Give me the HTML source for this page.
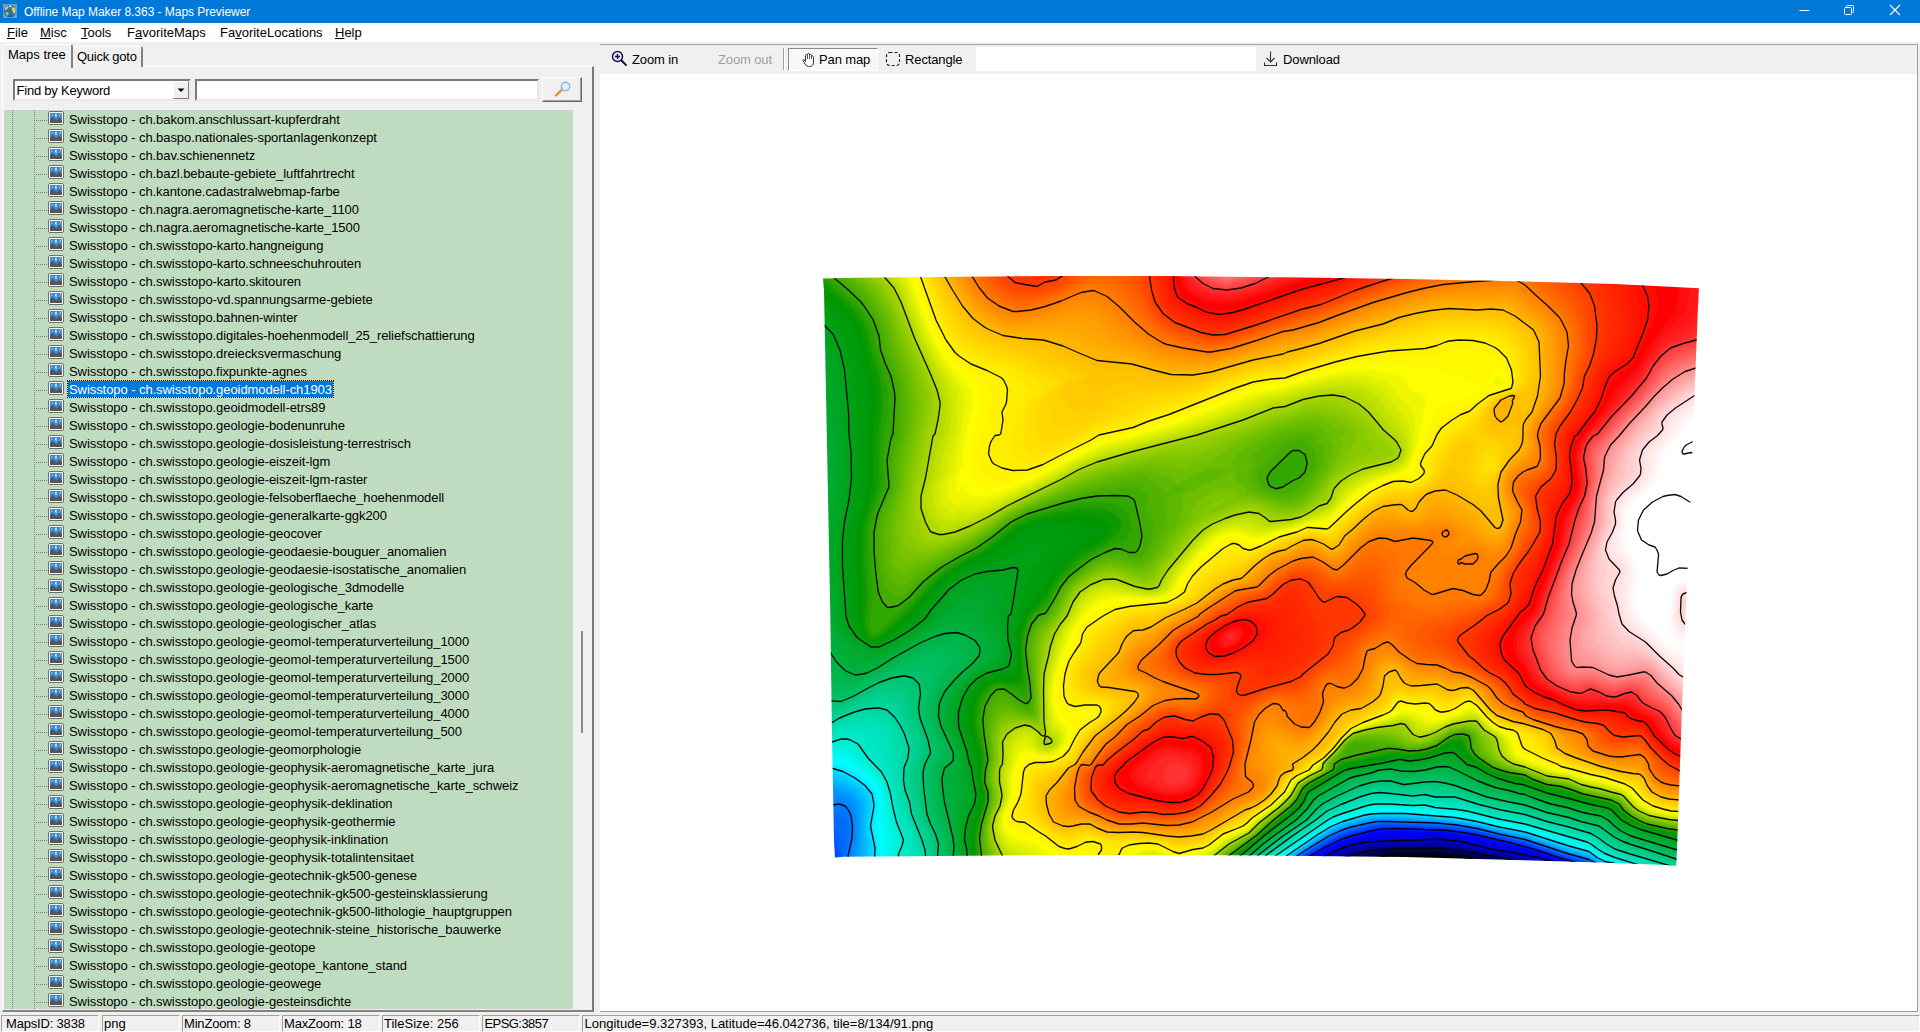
<!DOCTYPE html>
<html><head><meta charset="utf-8"><title>Offline Map Maker 8.363 - Maps Previewer</title>
<style>
*{box-sizing:border-box;margin:0;padding:0}
html,body{width:1920px;height:1032px;overflow:hidden;background:#f0f0f0}
body{font-family:"Liberation Sans",sans-serif;font-size:13px;color:#000;position:relative}
.abs{position:absolute}
#title{left:0;top:0;width:1920px;height:23px;background:#0078d7;color:#fff;font-size:12px}
#title .t{position:absolute;left:24px;top:5px;white-space:nowrap;letter-spacing:-0.04px}
#menu{left:0;top:23px;width:1920px;height:19px;background:#fff}
#menu span{position:absolute;top:2px;white-space:nowrap}
u{text-decoration:underline;text-underline-offset:1px}
#tabs span{position:absolute;white-space:nowrap}
.row{position:absolute;left:0;height:18px;width:570px;white-space:nowrap}
.row .tx{position:absolute;left:64px;top:1px;height:16px;line-height:17px;padding:0 1px;letter-spacing:-0.07px}
.row .ic{position:absolute;left:44px;top:1px}
.row .hl{position:absolute;left:30px;top:10px;width:13px;height:0;border-top:1px dotted #808080}
#tree{left:4px;top:110px;width:569px;height:899px;background:#c0dcc0;overflow:hidden}
.vl{position:absolute;top:0;height:899px;width:0;border-left:1px dotted #808080}
.sel .tx{background:#0078d7;color:#fff;outline:1px dotted #000;box-shadow:0 0 0 1px #f3e2a8}
#status span{position:absolute;top:2px;white-space:nowrap}
.tb span{position:absolute;top:7px;white-space:nowrap;letter-spacing:-0.12px}
</style></head><body>

<svg width="0" height="0" style="position:absolute"><defs>
<symbol id="pic" viewBox="0 0 16 14"><rect x="0.5" y="0.5" width="15" height="13" rx="1.5" fill="#fff" stroke="#6e6e6e"/><rect x="2" y="2" width="12" height="10" fill="#3a8ad8"/><path d="M2 12 V8.500 L4.400 6 L8.600 9.600 L11 6.200 L14 9 V12 Z" fill="#555"/><rect x="3.5" y="3.5" width="1" height="1" fill="#dff"/><path d="M9 3 A1.400 1.400 0 1 0 9 5.600 A1.800 1.800 0 0 1 9 3Z" fill="#eff"/><rect x="12" y="2.800" width="1" height="1" fill="#dff"/><rect x="11" y="4.500" width="1" height="1" fill="#9cf"/></symbol>
</defs></svg>
<div id="title" class="abs">
<svg class="abs" style="left:3px;top:4px" width="14" height="14" viewBox="0 0 14 14"><rect width="14" height="14" fill="#58a8de"/><circle cx="7" cy="7" r="6.300" fill="#2a72b4"/><path d="M1.500 5.500 Q2 2.500 4.500 1.800 Q6 2.200 5.500 3.800 Q4 4.200 3.800 5.800 Q2.500 6.500 1.500 5.500Z" fill="#f0b848"/><path d="M8.800 3.500 Q11 2.800 12.500 4.800 Q13.200 7.500 12 9.500 Q10.500 9.800 10 8 Q8.500 7 8.800 3.500Z" fill="#f4cc50"/><path d="M3 8 Q5 7.500 5.800 9.500 Q5.500 11.500 4 11.800 Q2.500 10.500 3 8Z" fill="#c8c040"/><path d="M6 1.200 Q8 1 9 2.200 Q7.500 3.500 6.300 3 Z" fill="#cfe6f4"/><path d="M4 12 Q7 13.600 10.500 12 Q7 11 4 12Z" fill="#174f86"/></svg>
<span class="t">Offline Map Maker 8.363 - Maps Previewer</span>
<svg class="abs" style="left:1790px;top:0" width="130" height="23" viewBox="0 0 130 23" fill="none" stroke="#fff" stroke-width="1"><path d="M9.5 10.5 H19.5"/><rect x="54.500" y="7.5" width="7" height="7" rx="1"/><path d="M56.5 7.500 V6.500 Q56.500 5.500 57.500 5.500 H62.500 Q63.500 5.500 63.500 6.500 V11.500 Q63.500 12.500 62.500 12.500 H61.500"/><path d="M100 5 L110 15 M110 5 L100 15" stroke-width="1.1"/></svg>
</div>
<div id="menu" class="abs"><span style="left:7px"><u>F</u>ile</span><span style="left:40px"><u>M</u>isc</span><span style="left:81px"><u>T</u>ools</span><span style="left:127px">F<u>a</u>voriteMaps</span><span style="left:220px">Fa<u>v</u>oriteLocations</span><span style="left:335px"><u>H</u>elp</span></div>
<div id="tabs">
<div class="abs" style="left:2px;top:66px;width:592px;height:946px;border:1px solid #fff;border-right:2px solid #828282;border-bottom:2px solid #828282;border-right-color:#7a7a7a"></div>
<div class="abs" style="left:2px;top:44px;width:71px;height:24px;background:#f0f0f0;border-left:1px solid #fff;border-top:1px solid #fff;border-right:2px solid #828282;border-radius:2px 2px 0 0"></div>
<div class="abs" style="left:73px;top:46px;width:70px;height:21px;background:#f0f0f0;border-top:1px solid #fff;border-right:2px solid #828282;border-radius:2px 2px 0 0"></div>
<span style="left:8px;top:47px">Maps tree</span><span style="left:77px;top:49px;letter-spacing:-0.25px">Quick goto</span>
</div>
<div class="abs" style="left:13px;top:79px;width:178px;height:22px;background:#fff;border:2px solid;border-color:#7a7a7a #e8e8e8 #e8e8e8 #7a7a7a"><span class="abs" style="left:1.5px;top:2px;white-space:nowrap;letter-spacing:-0.22px">Find by Keyword</span>
<div class="abs" style="left:158px;top:0;width:16px;height:18px;background:#f0f0f0;border:1px solid;border-color:#fff #808080 #808080 #fff"><svg width="14" height="16" viewBox="0 0 14 16" style="position:absolute;left:0;top:0"><path d="M3.5 6.5 H10.500 L7 10 Z" fill="#000"/></svg></div></div>
<div class="abs" style="left:195px;top:79px;width:344px;height:22px;background:#fff;border:2px solid;border-color:#7a7a7a #e8e8e8 #e8e8e8 #7a7a7a"></div>
<div class="abs" style="left:542px;top:77px;width:40px;height:25px;background:#f0f0f0;border:1px solid;border-color:#fff #6a6a6a #6a6a6a #fff;box-shadow:inset -1px -1px 0 #a0a0a0"><svg width="20" height="18" viewBox="0 0 20 18" style="position:absolute;left:10px;top:3px"><path d="M3 14.500 L9 8.500" stroke="#e0903c" stroke-width="2.4" stroke-linecap="round"/><circle cx="12.5" cy="5.5" r="4.200" fill="#d8f0fa" stroke="#8cb8e0" stroke-width="1.4"/></svg></div>
<div id="tree" class="abs"><div class="vl" style="left:8px"></div><div class="vl" style="left:30px"></div>
<div class="row" style="top:0px"><div class="hl"></div><svg class="ic" width="16" height="14"><use href="#pic"/></svg><span class="tx">Swisstopo - ch.bakom.anschlussart-kupferdraht</span></div>
<div class="row" style="top:18px"><div class="hl"></div><svg class="ic" width="16" height="14"><use href="#pic"/></svg><span class="tx">Swisstopo - ch.baspo.nationales-sportanlagenkonzept</span></div>
<div class="row" style="top:36px"><div class="hl"></div><svg class="ic" width="16" height="14"><use href="#pic"/></svg><span class="tx">Swisstopo - ch.bav.schienennetz</span></div>
<div class="row" style="top:54px"><div class="hl"></div><svg class="ic" width="16" height="14"><use href="#pic"/></svg><span class="tx">Swisstopo - ch.bazl.bebaute-gebiete_luftfahrtrecht</span></div>
<div class="row" style="top:72px"><div class="hl"></div><svg class="ic" width="16" height="14"><use href="#pic"/></svg><span class="tx">Swisstopo - ch.kantone.cadastralwebmap-farbe</span></div>
<div class="row" style="top:90px"><div class="hl"></div><svg class="ic" width="16" height="14"><use href="#pic"/></svg><span class="tx">Swisstopo - ch.nagra.aeromagnetische-karte_1100</span></div>
<div class="row" style="top:108px"><div class="hl"></div><svg class="ic" width="16" height="14"><use href="#pic"/></svg><span class="tx">Swisstopo - ch.nagra.aeromagnetische-karte_1500</span></div>
<div class="row" style="top:126px"><div class="hl"></div><svg class="ic" width="16" height="14"><use href="#pic"/></svg><span class="tx">Swisstopo - ch.swisstopo-karto.hangneigung</span></div>
<div class="row" style="top:144px"><div class="hl"></div><svg class="ic" width="16" height="14"><use href="#pic"/></svg><span class="tx">Swisstopo - ch.swisstopo-karto.schneeschuhrouten</span></div>
<div class="row" style="top:162px"><div class="hl"></div><svg class="ic" width="16" height="14"><use href="#pic"/></svg><span class="tx">Swisstopo - ch.swisstopo-karto.skitouren</span></div>
<div class="row" style="top:180px"><div class="hl"></div><svg class="ic" width="16" height="14"><use href="#pic"/></svg><span class="tx">Swisstopo - ch.swisstopo-vd.spannungsarme-gebiete</span></div>
<div class="row" style="top:198px"><div class="hl"></div><svg class="ic" width="16" height="14"><use href="#pic"/></svg><span class="tx">Swisstopo - ch.swisstopo.bahnen-winter</span></div>
<div class="row" style="top:216px"><div class="hl"></div><svg class="ic" width="16" height="14"><use href="#pic"/></svg><span class="tx">Swisstopo - ch.swisstopo.digitales-hoehenmodell_25_reliefschattierung</span></div>
<div class="row" style="top:234px"><div class="hl"></div><svg class="ic" width="16" height="14"><use href="#pic"/></svg><span class="tx">Swisstopo - ch.swisstopo.dreiecksvermaschung</span></div>
<div class="row" style="top:252px"><div class="hl"></div><svg class="ic" width="16" height="14"><use href="#pic"/></svg><span class="tx">Swisstopo - ch.swisstopo.fixpunkte-agnes</span></div>
<div class="row sel" style="top:270px"><div class="hl"></div><svg class="ic" width="16" height="14"><use href="#pic"/></svg><span class="tx">Swisstopo - ch.swisstopo.geoidmodell-ch1903</span></div>
<div class="row" style="top:288px"><div class="hl"></div><svg class="ic" width="16" height="14"><use href="#pic"/></svg><span class="tx">Swisstopo - ch.swisstopo.geoidmodell-etrs89</span></div>
<div class="row" style="top:306px"><div class="hl"></div><svg class="ic" width="16" height="14"><use href="#pic"/></svg><span class="tx">Swisstopo - ch.swisstopo.geologie-bodenunruhe</span></div>
<div class="row" style="top:324px"><div class="hl"></div><svg class="ic" width="16" height="14"><use href="#pic"/></svg><span class="tx">Swisstopo - ch.swisstopo.geologie-dosisleistung-terrestrisch</span></div>
<div class="row" style="top:342px"><div class="hl"></div><svg class="ic" width="16" height="14"><use href="#pic"/></svg><span class="tx">Swisstopo - ch.swisstopo.geologie-eiszeit-lgm</span></div>
<div class="row" style="top:360px"><div class="hl"></div><svg class="ic" width="16" height="14"><use href="#pic"/></svg><span class="tx">Swisstopo - ch.swisstopo.geologie-eiszeit-lgm-raster</span></div>
<div class="row" style="top:378px"><div class="hl"></div><svg class="ic" width="16" height="14"><use href="#pic"/></svg><span class="tx">Swisstopo - ch.swisstopo.geologie-felsoberflaeche_hoehenmodell</span></div>
<div class="row" style="top:396px"><div class="hl"></div><svg class="ic" width="16" height="14"><use href="#pic"/></svg><span class="tx">Swisstopo - ch.swisstopo.geologie-generalkarte-ggk200</span></div>
<div class="row" style="top:414px"><div class="hl"></div><svg class="ic" width="16" height="14"><use href="#pic"/></svg><span class="tx">Swisstopo - ch.swisstopo.geologie-geocover</span></div>
<div class="row" style="top:432px"><div class="hl"></div><svg class="ic" width="16" height="14"><use href="#pic"/></svg><span class="tx">Swisstopo - ch.swisstopo.geologie-geodaesie-bouguer_anomalien</span></div>
<div class="row" style="top:450px"><div class="hl"></div><svg class="ic" width="16" height="14"><use href="#pic"/></svg><span class="tx">Swisstopo - ch.swisstopo.geologie-geodaesie-isostatische_anomalien</span></div>
<div class="row" style="top:468px"><div class="hl"></div><svg class="ic" width="16" height="14"><use href="#pic"/></svg><span class="tx">Swisstopo - ch.swisstopo.geologie-geologische_3dmodelle</span></div>
<div class="row" style="top:486px"><div class="hl"></div><svg class="ic" width="16" height="14"><use href="#pic"/></svg><span class="tx">Swisstopo - ch.swisstopo.geologie-geologische_karte</span></div>
<div class="row" style="top:504px"><div class="hl"></div><svg class="ic" width="16" height="14"><use href="#pic"/></svg><span class="tx">Swisstopo - ch.swisstopo.geologie-geologischer_atlas</span></div>
<div class="row" style="top:522px"><div class="hl"></div><svg class="ic" width="16" height="14"><use href="#pic"/></svg><span class="tx">Swisstopo - ch.swisstopo.geologie-geomol-temperaturverteilung_1000</span></div>
<div class="row" style="top:540px"><div class="hl"></div><svg class="ic" width="16" height="14"><use href="#pic"/></svg><span class="tx">Swisstopo - ch.swisstopo.geologie-geomol-temperaturverteilung_1500</span></div>
<div class="row" style="top:558px"><div class="hl"></div><svg class="ic" width="16" height="14"><use href="#pic"/></svg><span class="tx">Swisstopo - ch.swisstopo.geologie-geomol-temperaturverteilung_2000</span></div>
<div class="row" style="top:576px"><div class="hl"></div><svg class="ic" width="16" height="14"><use href="#pic"/></svg><span class="tx">Swisstopo - ch.swisstopo.geologie-geomol-temperaturverteilung_3000</span></div>
<div class="row" style="top:594px"><div class="hl"></div><svg class="ic" width="16" height="14"><use href="#pic"/></svg><span class="tx">Swisstopo - ch.swisstopo.geologie-geomol-temperaturverteilung_4000</span></div>
<div class="row" style="top:612px"><div class="hl"></div><svg class="ic" width="16" height="14"><use href="#pic"/></svg><span class="tx">Swisstopo - ch.swisstopo.geologie-geomol-temperaturverteilung_500</span></div>
<div class="row" style="top:630px"><div class="hl"></div><svg class="ic" width="16" height="14"><use href="#pic"/></svg><span class="tx">Swisstopo - ch.swisstopo.geologie-geomorphologie</span></div>
<div class="row" style="top:648px"><div class="hl"></div><svg class="ic" width="16" height="14"><use href="#pic"/></svg><span class="tx">Swisstopo - ch.swisstopo.geologie-geophysik-aeromagnetische_karte_jura</span></div>
<div class="row" style="top:666px"><div class="hl"></div><svg class="ic" width="16" height="14"><use href="#pic"/></svg><span class="tx">Swisstopo - ch.swisstopo.geologie-geophysik-aeromagnetische_karte_schweiz</span></div>
<div class="row" style="top:684px"><div class="hl"></div><svg class="ic" width="16" height="14"><use href="#pic"/></svg><span class="tx">Swisstopo - ch.swisstopo.geologie-geophysik-deklination</span></div>
<div class="row" style="top:702px"><div class="hl"></div><svg class="ic" width="16" height="14"><use href="#pic"/></svg><span class="tx">Swisstopo - ch.swisstopo.geologie-geophysik-geothermie</span></div>
<div class="row" style="top:720px"><div class="hl"></div><svg class="ic" width="16" height="14"><use href="#pic"/></svg><span class="tx">Swisstopo - ch.swisstopo.geologie-geophysik-inklination</span></div>
<div class="row" style="top:738px"><div class="hl"></div><svg class="ic" width="16" height="14"><use href="#pic"/></svg><span class="tx">Swisstopo - ch.swisstopo.geologie-geophysik-totalintensitaet</span></div>
<div class="row" style="top:756px"><div class="hl"></div><svg class="ic" width="16" height="14"><use href="#pic"/></svg><span class="tx">Swisstopo - ch.swisstopo.geologie-geotechnik-gk500-genese</span></div>
<div class="row" style="top:774px"><div class="hl"></div><svg class="ic" width="16" height="14"><use href="#pic"/></svg><span class="tx">Swisstopo - ch.swisstopo.geologie-geotechnik-gk500-gesteinsklassierung</span></div>
<div class="row" style="top:792px"><div class="hl"></div><svg class="ic" width="16" height="14"><use href="#pic"/></svg><span class="tx">Swisstopo - ch.swisstopo.geologie-geotechnik-gk500-lithologie_hauptgruppen</span></div>
<div class="row" style="top:810px"><div class="hl"></div><svg class="ic" width="16" height="14"><use href="#pic"/></svg><span class="tx">Swisstopo - ch.swisstopo.geologie-geotechnik-steine_historische_bauwerke</span></div>
<div class="row" style="top:828px"><div class="hl"></div><svg class="ic" width="16" height="14"><use href="#pic"/></svg><span class="tx">Swisstopo - ch.swisstopo.geologie-geotope</span></div>
<div class="row" style="top:846px"><div class="hl"></div><svg class="ic" width="16" height="14"><use href="#pic"/></svg><span class="tx">Swisstopo - ch.swisstopo.geologie-geotope_kantone_stand</span></div>
<div class="row" style="top:864px"><div class="hl"></div><svg class="ic" width="16" height="14"><use href="#pic"/></svg><span class="tx">Swisstopo - ch.swisstopo.geologie-geowege</span></div>
<div class="row" style="top:882px"><div class="hl"></div><svg class="ic" width="16" height="14"><use href="#pic"/></svg><span class="tx">Swisstopo - ch.swisstopo.geologie-gesteinsdichte</span></div>
</div>
<div class="abs" style="left:581px;top:631px;width:2px;height:102px;background:#8a8a8a"></div>
<div class="abs" style="left:600px;top:44px;width:1318px;height:968px;background:#fff;border-top:1px solid #a0a0a0;border-right:1px solid #a0a0a0;border-bottom:1px solid #a0a0a0"></div>
<div class="abs tb" style="left:600px;top:45px;width:1317px;height:29px;background:#f0f0f0">
<svg class="abs" style="left:11px;top:5px" width="18" height="18" viewBox="0 0 18 18" fill="none" stroke="#10104a"><circle cx="6.500" cy="6.500" r="5" stroke-width="1.5"/><path d="M10.5 10.500 L15 15" stroke-width="2" stroke-linecap="round"/><path d="M4 6.500 H9 M6.500 4 V9" stroke-width="1.500"/></svg>
<span style="left:32px">Zoom in</span>
<span style="left:118px;color:#a0a0a0">Zoom out</span>
<div class="abs" style="left:183px;top:3px;width:2px;height:22px;border-left:1px solid #a0a0a0;border-right:1px solid #fff"></div>
<div class="abs" style="left:188px;top:3px;width:90px;height:23px;background:#f8f8f8;border:1px solid;border-color:#8a8a8a #fff #fff #8a8a8a"></div>
<svg class="abs" style="left:201px;top:7px" width="14" height="16" viewBox="0 0 14 16" fill="#fff" stroke="#333" stroke-width="1"><path d="M4.500 9.500 V3.500 Q4.500 2.500 5.500 2.500 Q6.500 2.500 6.500 3.500 V2.500 Q6.500 1.500 7.500 1.500 Q8.500 1.500 8.500 2.500 V3 Q8.500 2.500 9.500 2.500 Q10.500 2.500 10.500 3.500 V4.500 Q10.500 4 11.500 4 Q12.500 4 12.500 5.500 V10 Q12.500 14.500 8.500 14.500 H7.500 Q5.500 14.500 4 12 L2 8.500 Q1.500 7.500 2.500 7.500 Q3.500 7.500 4.500 9.500 Z"/><path d="M6.500 3.500 V7 M8.500 3 V7 M10.500 4 V7" stroke-width=".8"/></svg>
<span style="left:219px">Pan map</span>
<svg class="abs" style="left:285px;top:6px" width="16" height="16" viewBox="0 0 16 16" fill="none" stroke="#222" stroke-width="1.2" stroke-dasharray="3 2"><rect x="1.500" y="1.500" width="13" height="13" rx="3"/></svg>
<span style="left:305px">Rectangle</span>
<div class="abs" style="left:376px;top:2px;width:280px;height:24px;background:#fff"></div>
<svg class="abs" style="left:663px;top:5px" width="16" height="18" viewBox="0 0 16 18" fill="none" stroke="#333" stroke-width="1.100"><path d="M7.500 1.500 V11.500 M3.500 8 L7.500 12 L11.500 8 M1.500 12.500 V15.500 H13.500 V12.500"/></svg>
<span style="left:683px">Download</span>
</div>
<svg class="abs" style="left:0;top:0" width="1920" height="1032" viewBox="0 0 1920 1032">
<defs><clipPath id="mq"><path d="M823 278.6 L856 277.8 L1045 275.9 L1165 276 L1285 277.3 L1405 279 L1525 281.5 L1615 284 L1660 286.3 L1699 288.2 L1698.6 295 L1697.5 318 L1693 435 L1689.5 525 L1685.5 615 L1681 735 L1677.2 844 L1676.2 865.8 L1666 865 L1600 862.6 L1525 860.2 L1405 857 L1285 855.7 L1165 855 L1045 855 L940 855.9 L844 856.8 L835 857.6 L834 841.8 L832 735 L830.3 615 L826.8 435 L824 290.7Z"/></clipPath>
<filter id="mb" x="790" y="250" width="940" height="640" filterUnits="userSpaceOnUse"><feGaussianBlur stdDeviation="1.2"/></filter></defs>
<g clip-path="url(#mq)">
<g filter="url(#mb)">
<rect x="810" y="265" width="900" height="612" fill="#000004"/>
<path fill="#000013" d="M815 268l890 0 0 604-186 0-14-6-42-8.5-42-3.5-20-0.5-25.5 4.5-22.5 5.5-20.5 8.5-517.5 0z"/>
<path fill="#000022" d="M815 268l890 0 0 604-184 0-8-4.5-6-2-44-9-32-3-30-0.5-28 4.5-20 5-12 4-11 5.5-515 0z"/>
<path fill="#000030" d="M815 268l890 0 0 604-182.5 0-9.5-5.5-6-2-44-9-32-2.5-30-1-28 4.5-20 5-12 4-13.5 6.5-512.5 0z"/>
<path fill="#00003f" d="M815 268l890 0 0 604-180 0-10-5.5-6.5-2.5-45.5-9-26-2.5-32-1-16 1.5-24 4-22 6.5-18.5 8.5-509.5 0z"/>
<path fill="#00004c" d="M815 268l890 0 0 604-178 0-16-8.5-22-4.5-28-5-22-2.5-24-0.5-18 0-30 4.5-24 7-21 9.5-507 0z"/>
<path fill="#000059" d="M815 268l890 0 0 604-175 0-17-8.5-22-5-30-5.5-22-2.5-22-0.5-24 1-26 3.5-24 7-23.5 10.5-504.5 0z"/>
<path fill="#000065" d="M815 268l890 0 0 604-172 0-8-3-12-7-4-1-48-9-22-2-20-0.5-28 1-24 2.5-26 8-23.5 11-502.5 0z"/>
<path fill="#000072" d="M815 268l890 0 0 604-167.5 0-10.5-3.5-16-8-50-9-20-2.5-20-0.5-30 1-24 2.5-26 7.5-25.5 12.5-500.5 0z"/>
<path fill="#00007e" d="M815 268l890 0 0 604-146 0-6-1.5-14 0.5-11-3-15-8-52-9.5-24-2.5-46 0.5-24 2.5-26 7.5-28 13.5-498 0z"/>
<path fill="#00008b" d="M815 268l890 0 0 604-142 0-10-2.5-14 0.5-8.5-2-17.5-9-52-9.5-22-2.5-50 1-22 2-26 7-30 15-496 0z"/>
<path fill="#000097" d="M815 268l890 0 0 604-138 0-14-4-12 1-6-0.5-8-3.5-12-6-4-1.5-50-9-22-2.5-52 1-22 2-26 8-30 15-494 0z"/>
<path fill="#0000a4" d="M815 268l890 0 0 604-133.5 0-18.5-5-12 1-6-1-22-10-52-9.5-22-2.5-56 1.5-20 2-12 3-12 4-32 16.5-492 0z"/>
<path fill="#0000ae" d="M815 268l890 0 0 604-130.5 0-21.5-6.5-12 1.5-6-1-22-9.5-24-4-28-6-22-2.5-58 1.5-22 2.5-10 2.5-12 4.5-31.5 17-490.5 0z"/>
<path fill="#0000b7" d="M815 268l890 0 0 604-127.5 0-26.5-8-8 1.5-6-0.5-24-9.5-22-3.5-30-7-22-2.5-64 2.5-21 3-17 6-33.5 18-488.5 0z"/>
<path fill="#0000c0" d="M815 268l890 0 0 604-124.5 0-29.5-9.5-8 2-6-1-24-9-24-4-28-6.5-22-2.5-64 2.5-12 1-12 2.5-16 6-33.5 18.5-486.5 0z"/>
<path fill="#0000c9" d="M815 268l890 0 0 604-122 0-32-10.5-4 0-4 1-4 0-14-6-12-3-22.5-3.5-29.5-7.5-22-2.5-64 2.5-12 1.5-12 2-16 6.5-35.5 19.5-484.5 0z"/>
<path fill="#0000d2" d="M815 268l890 0 0 604-119.5 0-24.5-7.5-10-4-6-0.5-10-3.5-2 1-1.5-1.5-4.5-0.5-2-1-4 0-8-2-22-3.5-30-7.5-22-2.5-64 2.5-12 1-12 2.5-16 6-37 21-483 0z"/>
<path fill="#0000db" d="M815 268l890 0 0 604-116.5 0-49.5-16-48-8-30-8-22-2.5-62 2.5-14 1.5-12 2.5-14 5-10 5-30.5 18-481.5 0z"/>
<path fill="#0000e4" d="M815 268l890 0 0 604-114.5 0-55.5-18-44-7.5-28-7.5-24-2.5-56 1.5-20 2.5-12 2.5-14 5-10 5-32 19-480 0z"/>
<path fill="#0000ec" d="M815 268l890 0 0 604-111.5 0-32.5-10-24-8.5-44-8.5-30-7-26-3-54 1.5-32 5-12 4.5-12 6-34 20-478 0z"/>
<path fill="#0000f5" d="M815 268l890 0 0 604-109.5 0-58.5-19-67-15-25-3.5-22-0.5-42 1-32 6-22 9.5-35.5 21.5-476.5 0z"/>
<path fill="#0000fe" d="M815 268l890 0 0 604-107.5 0-60.5-19.5-70.5-16.5-27.5-3-44-0.5-16 1-22 4.5-14 4-18 8.5-22 13-13 8.5-475 0z"/>
<path fill="#000bff" d="M815 268l890 0 0 604-106 0-12-5-26-7-24-8.5-65-15.5-31-4-48-1-14 1-24 5.5-14 4.5-16 7.5-22 13-14.5 9.5-473 0z"/>
<path fill="#0016ff" d="M815 268l890 0 0 604-104 0-10-4.5-32-9-22-7.5-60-15-30-4.5-54-1.5-14 0.5-26 6-12 4-16 7.5-22 13-15.5 11-467 0-5.5-12.5z"/>
<path fill="#0022ff" d="M815 268l890 0 0 604-102.5 0-13.5-6-29-8-25-8.5-58-14.5-30-4.5-54-2-16 1-24 6-12 4-17.5 8.5-22.5 13.5-15 10.5-461.5 0-4-12-5.5-9z"/>
<path fill="#002eff" d="M815 268l890 0 0 604-100.5 0-13.5-6-30-8.5-36-12-48-11.5-28-4.5-56-2-16 1-24 6-14 5-16 7.5-22 13.5-16.5 11.5-456.5 0-3.5-14-5-8-4.5-5z"/>
<path fill="#0039ff" d="M815 268l890 0 0 604-98.5 0-17.5-7.5-30-8.5-34-11.5-48-11.5-28-4-56-2.5-18 1.5-22 5.5-14 4.5-14 7-22 13-20 14-451.5 0-1.5-12-2.5-6-6.5-9-6-5.5z"/>
<path fill="#0045ff" d="M815 268l890 0 0 604-96 0-20-8.5-28-7.5-36-12.5-48-11-29.5-4.5-56.5-2-16 1-22 5-14 5-24 12.5-16 10-17 12.5-447.5 0-1-14-2-6-8.5-11.5-8-7.5z"/>
<path fill="#0051ff" d="M815 268l890 0 0 604-94 0-22-9-28-8-36-12-48-11.5-22-3.5-18-1.5-48-1.5-16 1-22 5.5-12 4.5-24 12.5-16 10-18.5 13.5-443 0-0.5-16-2-5.5-10-14.5-10-9.5z"/>
<path fill="#005eff" d="M815 268l890 0 0 604-91.5 0-10.5-3.5-14-6.5-28-8-36-12-48-11.5-22-3.5-18-1.5-50-1.5-16 1.5-20 5-12 4.5-12 5.5-14 8-14 9-20 14.5-438.5 0-1-18-4-12-8.5-11.5-12-11.5z"/>
<path fill="#006aff" d="M815 268l890 0 0 604-89.5 0-12.5-4.5-14-6.5-28-8-36-12-48-11-22-3.5-18-1.5-50-2-16 1.5-30 8-12 5.5-16 9.5-35.5 24.5-434 0-1.5-26-2-10-11-14-11.5-8-2.5-0.5z"/>
<path fill="#0077ff" d="M815 268l890 0 0 604-87.5 0-14.5-5-14-6.5-22.5-6.5-41.5-14-48-11-22-3.5-18-1.5-50-2-16 1.5-30 8-13.5 6.5-14.5 8.5-36.5 25.5-430 0-1.5-16 2.5-18 0-8-0.5-5.5-2-5.5-2-3-4-2-8-1.5-10-3.5-6-1z"/>
<path fill="#0083ff" d="M815 268l890 0 0 604-85.5 0-16.5-5.5-14-7-20-5.5-44-14.5-48-11-20-3.5-20-2-50-1.5-16 1-30 8-12 5.5-16 9.5-38 26.5-425.5 0-1.5-16 4-18 0.5-12-3-14-4.5-6-4-1.5-8 0.5-18-3z"/>
<path fill="#0090ff" d="M815 268l890 0 0 604-83.5 0-8.5-3.5-10-3-14-7-20-5.5-44-14.5-48-11-20-3.5-20-1.5-52-2-16 1-29.5 8.5-12.5 6-14 8.5-39.5 27.5-421 0-1.5-14 4-18 0.5-12-1-14-2-6-3.5-5.5-6-3.5-4-1-24-1.5z"/>
<path fill="#009cff" d="M815 268l890 0 0 604-82 0-8-4-12-3-16-8-18-4.5-44-15-48-11-20-3-20-2-52-2-10 0.5-10 1.5-22 6-10 4.5-22 13-38.5 27-417 0-1-14 3-16 0.5-14-1-16-2.5-8-5-6-8-4-26.5-2.5z"/>
<path fill="#00a9ff" d="M815 268l890 0 0 604-80 0-10-4.5-12-3.5-16-8-16-4-34-11.5-12-4-48-10.5-20-3.5-20-2-52-2-12 0.5-10 2-20 5.5-12 5.5-34 21-26 19-412.5 0-0.5-12 2-20 0-26-0.5-6-2-6-4.5-6-8-5-12-3-18-1z"/>
<path fill="#00b5ff" d="M815 268l890 0 0 604-78 0-12-5.5-12-3-16-8.5-18-4.5-46-15.5-46-10-22-3.5-50-3.5-20-0.5-10 0.5-10 1.5-20 5.5-14 5.5-34 22-27 19.5-408.5 0 1-62-2-10-3-4-4-4-10.5-5.5-12-3-16-1z"/>
<path fill="#00c2ff" d="M815 268l890 0 0 604-76 0-14-6.5-12-3-16-8.5-16-4-46-15-48-11-20-3-52-4-20-0.5-10 0.5-10 1.5-20 5.5-14 5.5-34 22-18 12.5-10 8-404 0 0.5-24-1.5-22 1-18-2-10-2.5-4-5.5-5-12-6-14-3.5-14-1z"/>
<path fill="#00ceff" d="M815 268l890 0 0 604-73.5 0-16.5-7-12-3-16-9-18-4.5-44-14.5-26-5.5-22-5.5-20-3-52-4-20-0.5-10 0.5-10 1.5-22 6-12 5-14 8.5-36 24.5-13 10.5-400 0 0.5-24-2.5-22 2-20-2.5-10-2.5-4-6-5-14-8-12-3.5-16-0.5z"/>
<path fill="#00dbff" d="M815 268l890 0 0 604-71 0-19-8-10.5-2-7.5-4-8-5.5-20-5-44-14.5-26-5-22-5.5-20-3.5-52-4.5-24 0-10 0.5-8 2-20 5.5-12 5-14 8.5-36 24.5-14.5 11.5-395.5 0 0.5-24-3.5-22 3-22-2.5-10-5.5-6-5-4-15-8.5-12-4-16 0z"/>
<path fill="#00e7ff" d="M815 268l890 0 0 604-68.5 0-21.5-8.5-10-2-8-4-8-6-20-5.5-44-14-26-5-22-5.5-22-4-50-4-24 0-10 0.5-8 1.5-20 6-12 5-14 8.5-36.5 25-15 12-391.5 0 1-24-4.5-22 3.5-20-2-12-7-8.5-10-7.5-12-6.5-12-3.5-16 0.5z"/>
<path fill="#00f4ff" d="M815 268l890 0 0 604-66 0-24-9.5-10-2-8-4-8-6-64-19.5-26-5-22-5.5-20-3.5-52-4.5-14 0-14 0-10 1-24 7-12 5-52 34.5-14.5 12-387.5 0 0.5-26-4-20 3-22-1-8-1.5-4-7-8.5-10-7.5-12-7-14-4.5-16 0.5z"/>
<path fill="#00fffe" d="M815 268l890 0 0 604-63 0-27-10-10-2.5-18-10.5-62-19-26-5-22-5.5-20-3.5-52-4.5-14-0.5-14 0.5-10 1-24 7-12 5-53.5 35.5-14 12-383.5 0 0.5-26-4-20 2.5-22-1.5-8-2-6-8.5-9.5-10-8-12-7.5-12-3.5-18 0.5z"/>
<path fill="#00fbf5" d="M815 268l890 0 0 604-60 0-30-11-10-2.5-18-10.5-62-19-68-14-34-3.5-32-1.5-16 0.5-8 1-24 7-12 5-55 36.5-13.5 12-379.5 0 0.5-28-3.5-20 1-22-1.5-8-2.5-6-8-9.5-16-12.5-8-5-6-2-6-1-18 1z"/>
<path fill="#00f8ec" d="M815 268l890 0 0 604-57 0-43-14.5-18-10.5-62-19-68-14-34-3.5-34-1.5-14 0-8 1.5-24 7-10 4-16 10-42 28.5-13.5 12-375.5 0 0.5-32-2.5-16-1-24-2-8-2.5-6-8.5-10-16.5-14-8.5-5-10-2-20 1.5z"/>
<path fill="#00f4e3" d="M815 268l890 0 0 604-53.5 0-46.5-15.5-18-11-62-18.5-68-14-34-4-34-1.5-14 0.5-8 1-24 7.5-10 4-58 38.5-14.5 13-371.5 0 0-16 1.5-18-3-16-2.5-24-2-8-3-6-7-9-14.5-13-11.5-8.5-4-1.5-6-0.5-22 2z"/>
<path fill="#00f0da" d="M815 268l890 0 0 604-50.5 0-49-16-18.5-11.5-62-18.5-68-14.5-22-2-10-1.5-36-1.5-14 0-8 1.5-24 7.5-10 4-58 38.5-7.5 6-8 8-367.5 0 0-16 3-18-4.5-16-4.5-28-5-13-5.5-7-20.5-19.5-8-5.5-8-1.5-24 3z"/>
<path fill="#00edd1" d="M815 268l890 0 0 604-47 0-51-16.5-20-12-62-18.5-68-14.5-22-2-10-2-12 0-24-1.5-14 0.5-8 1-34 11.5-59.5 40-15.5 14-362.5 0-0.5-16 4-14 0-4-5.5-16-5.5-30-3-8.5-4-7-26-28-6-4-8-1.5-12 3-14 1.5z"/>
<path fill="#00eaca" d="M815 268l890 0 0 604-43.5 0-46.5-14.5-10-4-16-10.5-8-3-54-15.5-28-5.5-32-8-12-2-20-1.5-10-2.5-12 0.5-24-1.5-14 0-8 1.5-34 11.5-60 40.5-16 14.5-358.5 0 0-18 5-14-7-18-9.5-40-5.5-10-13.5-14-10-14-7.5-4-9.5-1-12 4-14 2z"/>
<path fill="#00e7c5" d="M815 268l890 0 0 604-40 0-50-15-10.5-5-15.5-10.5-8-2.5-54-15.5-28-5.5-32-8-12-2.5-20-1.5-10-2-12 0.5-32-2-16 2-32 11.5-60 40.5-8 6.5-9 9-354 0 0.5-14 3.5-12 0.5-6-8-20-9.5-38-6-13-12-14.5-6.5-12.5-3.5-3.5-4-2-6-1-6 0-6 1-12 4.5-12 1z"/>
<path fill="#00e5bf" d="M815 268l890 0 0 604-36.5 0-53-16-10.5-5-14-9.5-10-3.5-54-16-28-5.5-32-8-12-2-20-1.5-10-2.5-12 1-32-2.5-8 0.5-10 2.5-32 12-60 41-16 15-349.5 0 3.5-24-0.5-10-9-22-10.5-41-4-9-10-17.5 0-3-1.5-3.5-5-6-5.5-3-6-2-10 0.5-20 6.5-12 1.5z"/>
<path fill="#00e2b9" d="M815 268l890 0 0 604-33 0-55-16.5-11.5-5.5-14.5-10-6-2-58-17-28-5.5-34-8.5-10-2-20-1.5-10-2-12 0.5-32-2-8 0.5-10 2-32 12.5-60 41-17 16-345.5 0 3.5-18-0.5-14-9.5-24-13.5-52-7.5-20 1.5-2-3.5-5-6-5.5-8-3.5-8-1-10 1.5-20 7-12 1.5z"/>
<path fill="#00e0b4" d="M815 268l890 0 0 604-29.5 0-58.5-17.5-9.5-4.5-16.5-11-4-2-60-17-30-6-38-10-22-1.5-12-2.5-12 1-34-2.5-16 3-22 8-12 5.5-59 41-17 16-341.5 0 4-16-1-12-2-8-8.5-20-6-22-5.5-26-2-18-3-8-0.5-5.5-2-3-3-3.5-9-4.5-6-2-8-1-12 3-18 7-14 2z"/>
<path fill="#00ddae" d="M815 268l890 0 0 604-26 0-62-18.5-10-5-14-9.5-6-3-40-11-20-6.5-30-6-40-10.5-20-1-12-2-12 0.5-34-2.5-8 1-10 2.5-32 13-60.5 42.5-16.5 16-337.5 0 4-14-0.5-8-3-12-9-22-6.5-24-3.5-22 0-20-4-12 0.5-2-3.5-6-3.5-4-6.5-4-6-2.5-10-0.5-12 2-22 9-14 2z"/>
<path fill="#00dba8" d="M815 268l890 0 0 604-24-0.5-64.5-19.5-11-6-16.5-10.5-42-11.5-22-7-30-6-38-10.5-22-1-10-2-12 1-34-3-8 1-10 3-32 13-61.5 43.5-16.5 16-333.5 0 3.5-12 0-8-3-12-9.5-24-7.5-26-2.5-20 2.5-16-1-8-2.5-10-4.5-8-4-5-7-5-7-2-8-1-14 2.5-24 10.5-14 1.5z"/>
<path fill="#00d8a3" d="M815 268l890 0 0 604-18 0-8-2-64-20-26-16-42-11-22-7.5-30-6-18-4.5-20-6-22-0.5-10-2.5-12 1.5-34-3.5-8 1-10 3-20 7.5-14 7-60 43-17.5 16.5-329 0 3-12 0-6-3.5-14-10.5-26-2-10-4.5-14-1.5-12 0-10 3-10 0.5-10-4-14-6-10-6-6-6-4.5-6-1.5-10 0-16 3.5-20 9.5-8 1.5-8 0z"/>
<path fill="#00d69d" d="M815 268l890 0 0 604-14 0-64-19-14-5-20-13.5-4-1.5-42-11.5-22-7-26-5-22-5.5-20-7-22 0-10-2.5-12 1.5-34-3.5-8 1-10 3-20 8-14 6.5-60 43.5-18.5 17.5-325.5 0 2.5-14-0.5-8-3-10-10.5-26-2-12-4.5-12-1.5-10 0.5-12 4-10 1-10-4.5-14-9.5-16.5-8-7.5-10-2-12 1-12 3.5-24 10.5-14 1z"/>
<path fill="#00d397" d="M815 268l890 0 0 604-12-0.5-68-20.5-12-4.5-22.5-14.5-43.5-11.5-22-7.5-26-5-20-5-22-7-22-1-10-2-14 1.5-32-3.5-8 1.5-10 2.5-20 8-14 7-60 44-19.5 18-322.5 0 2.5-14-1.5-10-2-8-10.5-26-2-12-4-12-1.5-10 1-12 4-12 0.5-10-4.5-14-10-18.5-4-5-4-3-6-1.5-6 0-12 2.5-12 4-24 10-14 0.5z"/>
<path fill="#00d190" d="M815 268l890 0 0 604-6 0-16-4.5-58-17.5-12-5-22-14-44-11.5-22-7.5-26-5-20-5-22-7.5-22-1-10-2-10 1.5-8 0-28-3-8 1-10 3-20 8-14 7-18 14-43.5 31-19 18-319.5 0 2-14-1-10-2-8-10.5-26-7-32 1-12 4.5-18 0-8-4-12-13-26-4-4-4-1.5-4-1-6 0.5-16 4.5-34 13.5-14 0z"/>
<path fill="#00ce8a" d="M815 268l890 0 0 604-26-6.5-56-17.5-10-4.5-16-11-6-2.5-44-12-20-6.5-26-5-20-5-24-8.5-32-3-12 1.5-8 0-14-2.5-12-0.5-8 1-12 3.5-18 7.5-16 8.5-15.5 13-45 32-19 18-316.5 0 1.5-16-1-10-2.5-8-9-22-6.5-32 0-10 5-20 0-10-3-10-13.5-32-7-5.5-8-1-12 3-42 16-8 1-8-0.5z"/>
<path fill="#00cc84" d="M815 268l890 0 0 603.5-28-8-54-17-10-4.5-14.5-10-7.5-3.5-44-11.5-20-7-42-9-28-9-30-3.5-14 1.5-8 0-14-2-12-1-8 1-10 3-20 8.5-16 8-16.5 14.5-21 14-24 18-19 18-313.5 0 1-14-1-12-2-8-9-22-6.5-34 0.5-10 5-20 0-8-3-10-7.5-18-5.5-18-4-4-4-1.5-10-1-12 4-32 14-14 3-12-1z"/>
<path fill="#00c97e" d="M815 268l890 0 0 602-28-7.5-54-17.5-10-4.5-14-10-6.5-2.5-45.5-12-20-7-42-9-28-9.5-28-3.5-24 2-14-2.5-12-1-8 1-10 3-22 9.5-14 7.5-18 15.5-22 15-25 19-16.5 16-310.5 0-0.5-28-11-30-5.5-32 0.5-12 5.5-18-0.5-8-2-8-8.5-21.5-3-16.5-3-5.5-4-3-6-2-8 0.5-12 4-20.5 10-13.5 5.5-14 2-12-1.5z"/>
<path fill="#00c777" d="M815 268l890 0 0 601-28-7.5-52-17-12-5.5-14-10-6-2-24-7-22-5.5-22-7-38-8-30-10.5-24-4-28 2.5-14-3-12 0-8 1-12 3.5-20 9-15.5 8-16.5 15.5-22 14.5-26 20-16.5 16-307.5 0-0.5-28-2.5-8-5.5-12-3-10-5-32 0-10 6-20-0.5-8-3-10-7.5-20-2-20-4-6-2.5-2-6-2-8 0-14 4.5-34 16.5-16 1.5-12-1.5z"/>
<path fill="#00c471" d="M815 268l890 0 0 599.5-28-7-52-17-11.5-5.5-12.5-9-4-2-28-8.5-22-5-22-7.5-38-8-32-11-20-4-30 3-14-3-10 0-10 1-12 3.5-22 10-14 7.5-16 15.5-23 15.5-23.5 18-19.5 18-304.5 0 0-28-2.5-8-5.5-12-3.5-10-4.5-36 0-6 2-8 4.5-10 0-6-3.5-14-6-16-2-8 1-16-3.5-7.5-4-4-4-1.5-12-0.5-16 5.5-24 12.5-10 4.5-16 0.5-12-2.5z"/>
<path fill="#00c26b" d="M815 268l890 0 0 598.5-26-6.5-48-15.5-16-7-16-11.5-30-8.5-22-5-22-7.5-38-8-32-11.5-20-4-30 3-14-3.5-10 0-8 1-14 4-36 17.5-6 5-10.5 11.5-23.5 16-23.5 18-19.5 18-301.5 0-1-16 1-12-3-10-5-10-3.5-10-3.5-28-0.5-14 2-8 5.5-12-2.5-12-8-22-1.5-10 2-14-1.5-10-6-6-10-2-11.5 2-12.5 4.5-26 14-12 5-14-1-12-3.5z"/>
<path fill="#00c066" d="M815 268l890 0 0 597-26-6.5-48-15-16-7-16-11.5-30-8.5-22-5.5-22-7.5-36-7.5-30-11-12-3.5-12-2-30 3.5-14-3.5-6 0-10 0.5-16 4.5-36 18-6 5-11.5 12.5-22.5 15-24 18.5-20 18.5-299 0-0.5-16 1-12-2.5-10-5-10-3.5-10-3.5-28-0.5-14 2-8 6-12-2-10-9.5-26-0.5-8 2-12 1-12-1.5-8-4-3.5-4-0.5-10 0.5-12 2.5-16 6.5-26 13.5-10 3.5-16-2-10-4z"/>
<path fill="#00be60" d="M815 268l890 0 0 596-26-6.5-48-15-14-6.5-14-10.5-4-2-52-13.5-22-7.5-36-8-40-15-14-2-30 4-14-4-6 0-8 1-20 5.5-34 17-6 5-12 13-24 17-22 16.5-21 19.5-296 0-1-16 1-14-2-8-5.5-12-3-10-3.5-30-0.5-8 1.5-6 6-12 1-4-1.5-8-8.5-22-2-8 0.5-10 6.5-30-2-7.5-4-1.5-4 0-6 2.5-16 3-12 4.5-36 17.5-8 3-6 0-8-1.5-8-3-6-3.5z"/>
<path fill="#00bc5a" d="M815 268l890 0 0 594.5-26-6-50-16-12-5.5-14-11-4-2-52-13-22-8-36-8-40-15.5-14-1.5-20 3-10 0.5-14-3.5-6-0.5-6 1-24 7-34 17.5-6 5.5-10 11.5-46 34-22 20-293 0-1-14 1-16-2-8-8.5-22-3.5-32 0.5-10 7.5-14 1-6-1.5-6-9-22-2-10 1.5-12 4.5-16 9-18-0.5-4-2-2.5-4-1.5-10 0.5-30 11-40 19-12 4-6-0.5-8.5-2-7.5-4-6-4.5z"/>
<path fill="#00b955" d="M815 268l890 0 0 593.5-26-6.5-50-15.5-11.5-5.5-12.5-10-6-3-52-13.5-22-8-36-8-40-16-12-1.5-30 4-22-4-6 0.5-24.5 7.5-33.5 17.5-6 5.5-11.5 13-40.5 30-27.5 24-290 0-0.5-14 1-16-1.5-8-9-24-3.5-30 1-10 7.5-14 1-6-1.5-6-9-22-2-10 1.5-12 4-12 4.5-10 4-4 7-10 1-4-1-4-3-3-6-1.5-8 0.5-6 1-28 12-32 16-14 5.5-8 2-8 0-7-2.5-7-4-8-6.5z"/>
<path fill="#00b74f" d="M815 268l890 0 0 592-26-6-50-15.5-10-5-14-11-4.5-2.5-53.5-13.5-23-8.5-35-8-40-16.5-12-1-28 3.5-22-3.5-8 1-26 7.5-32 17-6 5-8 10-7.5 7-36.5 27-28.5 25-287 0 0.5-32-10-30-3.5-30 1-10 1.5-4 7-10 0.5-4-2-8-10-24-1-10 1.5-9 4.5-13 9.5-14 8-8 5-6 1-4-1.5-4-4.5-4.5-6-1.5-10 0.5-8 1.5-28 12.5-36 18.5-12 4.5-8 1.5-8-0.5-8-3-7-5.5-9-9.5z"/>
<path fill="#00b549" d="M815 268l890 0 0 591-26-6-50-15.5-10.5-5.5-11.5-9.5-6-4-54-13.5-22-8-32-7.5-16-5.5-22-10.5-8-3-4 0-32 4-10-0.5-12-2.5-8 0-30 9-32 17.5-4 3.5-6.5 8.5-10 10-35.5 26-29.5 26-284 0 0.5-32-10.5-34-3-26 0.5-6 2-6 7.5-10 1-6-2.5-8-9.5-22-1.5-6 0-6 1-8 6-14 8-10.5 18-18.5 1-7-2-4-7-5-6-1.5-10 0.5-10 1.5-24 11-40 22-10 3.5-8 1.5-10-1-8.5-4.5-8-8-9.5-13.5z"/>
<path fill="#00b344" d="M815 268l890 0 0 589.5-26-6-50-15.5-10-5-12-10-6-3.5-12-2.5-20-6-22-5-22-8.5-30-6.5-18-7-22-10.5-10-3-8 0.5-24 4-12-0.5-12-2.5-8 0.5-30 8.5-32 17.5-4 3.5-8 10-10 10-34 25-31 27-280.5 0-0.5-12 1.5-14-0.5-6-10-36-3-24 2.5-12 8-8 1.5-6-4-11-7.5-15-2.5-8.5-1-3.5 0.5-10 1-4 5.5-12.5 8-9.5 20-20 3-6-1-6-3-4-5-3.5-8-3-8-0.5-12 2-18 7.5-50 28-12 3.5-4 0-10-2-8-6-5.5-6-14.5-22z"/>
<path fill="#00b13e" d="M815 268l890 0 0 588.5-26-6-48-14.5-10-5-13-11-7-4-11-2-21-6-20-4.5-24-9-28-6.5-20-7.5-28-13.5-4-0.5-32 5-22-2.5-12 1-30 8.5-31 17.5-4.5 4-6.5 9-11 11-33 24-32 28-278 0 0-12 1-14-1-8-8.5-36-2.5-22 2.5-12 8.5-7.5 0.5-6.5-12.5-28-2.5-10 0.5-10 1-4 6-12 8.5-10 17.5-16 7-8 1-6-1-4-4-5.5-10-5.5-8-2.5-12 1-10 3-14 6-54 30.5-12 2-10-4.5-8.5-8.5-17-24-4.5-10z"/>
<path fill="#00af3a" d="M815 268l890 0 0 587-26-6-48-14.5-10-5-12-10.5-6-3.5-14-3-20-6-20-4.5-24-8.5-28-7-18-7-28-13.5-6-1.5-32 5.5-22-2-10 1-32 8-34 20-8.5 11-11.5 11.5-32 23.5-33.5 29-274.5 0 0.5-28-7.5-42-2-22 2.5-10 6.5-8 0.5-8-12-28-2.5-10 0.5-10 4.5-12 8-10 29.5-28 2-6-0.5-4-5-8-7-5-14-5.5-8 0.5-16 5.5-14 6.5-46 26.5-10 4-6 0.5-6-2-8-7-17.5-22-5.5-10-5.5-18-0.5-6 1-2-1-4-1-13 0-41 1-2-1-2.5 0-15.5 2.5-20 1.5-26-1.5-32-0.5-6-2-5z"/>
<path fill="#00ad34" d="M815 268l890 0 0 586-26-6-46-14-12-6-12-10.5-6-3.5-14-2.5-20-6-20-4.5-24-8.5-28-7-32-14-14-7.5-6-1-32 5.5-22-1.5-10 1-33 8-33 19.5-4 4-5.5 8.5-10.5 10.5-32 24-35 29.5-271 0 0-26-3-22-3-44 1-6 5-12 0.5-6-1.5-6-10.5-24-2-10 0.5-8 1.5-6 3.5-8 8-10 8-8.5 19-15.5 3.5-4 2-4 0-6-1-4-3.5-6-6-5.5-14-8-8-0.5-8 2-18 8.5-54 30-8 3-6 1-6-2-4-3.5-16-17-8.5-12-5-12-2.5-10-3-42 1.5-18-1-2 1.5-2-1-1.5-0.5-2.5 0.5-10 3.5-34 1-22-2-34-2.5-10-4-23z"/>
<path fill="#00ab30" d="M815 268l890 0 0 584.5-26-6-46-14-12-6-12-10.5-6-3-14-3-40-10.5-22-7.5-30-8-32-14-14-8-6-1-32 6-22-0.5-12 1-32 7.5-34 20.5-8.5 12.5-9.5 9.5-28 20.5-40.5 34-267.5 0-0.5-24-2.5-28 2-24-1.5-20 2.5-14 0-6-1.5-6-9.5-24-2-10 0.5-8 4-12 10.5-14 10-9.5 17.5-12.5 3.5-4 2-6-1-6-3-8-5-7-8-6.5-4-2 2.5-6.5-2.5-3-2 1.5-8-0.5-8 3-21 13-37 21-18 9.5-8 2.5-6 0-6-3-18-16-9-12-5.5-16-4-46 0.5-18 1-2-1.5-4 0.5-12 4.5-38 1-22-2.5-34-1-2-5-34-5-21.5z"/>
<path fill="#00a92a" d="M815 268l890 0 0 583.5-26-6-42-12.5-14-6.5-14-12-5-2.5-17-3.5-18-5.5-20-4.5-22-7.5-30-8-32-14.5-12-7.5-8-1.5-32 6.5-20-0.5-14 1.5-28 5.5-6 2.5-32 19-2 2-6 10-10 10-28 21-41.5 35-265 0-0.5-24-1.5-24 1-12 3.5-14 0.5-6-3-18 0-20-10.5-28-1.5-10 0.5-8 4.5-12 10-14 9.5-9 17.5-11 4.5-4 2.5-6-0.5-8-3.5-10-2.5-4.5-6-7.5-7-6 3-3 2-1 0.5-2-4-6-4.5-2.5-2 2.5-8-0.5-8 3.5-27.5 21-32.5 19-16 8-6 2-4 0.5-5.5-1.5-14.5-10-10.5-10-5-8-3-8-2-10-4-44 0-14 1.5-2-1.5-4 0.5-12 5.5-44 0.5-28-1-16-3-16-2.5-22-5.5-30-6-17z"/>
<path fill="#00a726" d="M815 268l890 0 0 582-26-6-48-15-12-6.5-10-9.5-6-2.5-14-2.5-40-10.5-21.5-7.5-30.5-8.5-22-10.5-9-3-13-9-6-1-34 6.5-14-0.5-18 2-30 5.5-6 2-34 20.5-6 10.5-10 10.5-28 21-43.5 36-261 0-2.5-46 2-12 5-14 0.5-8-4.5-22-1-16-10-28-1-8 0-8 5-14 10-14 9-8.5 20-11 4-3.5 2-3 0.5-4-1-8-3.5-12-8-14.5-4-4.5 0-1 5.5-2-1.5-10.5-2.5-3.5-3.5-2.5-4-1.5-2 0-4 2-6 1-8 4-10 8-13 13-7 5.5-32 19.5-18 8.5-6 0.5-6-1.5-16-11-7.5-7.5-4-6-3-8-2-10-4-54 1-4-1-6 1-18 6-44-0.5-32-9.5-74-4.5-16-8-16z"/>
<path fill="#00a520" d="M815 268l890 0 0 581-26-6-42-12.5-8-3.5-8-4.5-11.5-10.5-4-2-16.5-3.5-42-11-18-6-32-9-20-10-10-3.5-14-10-6-1-28 6.5-10 1-10-1-48 8-6 2-34 20-3 3.5-3.5 8-9.5 9.5-29 22.5-25 21.5-19 14.5-257.5 0-1-22-1.5-10 0-14 2.5-12 5-12 1.5-8-6-28-1.5-12-9.5-28-0.5-14 4-14 9.5-14.5 10-9 10-5.5 12-5 2.5-2 2.5-4 1-6-4-18.5-8-23 3.5-2.5 1-6-0.5-10-2-3.5-2-1.5-10-3-4 1.5-6.5 0.5-7.5 2.5-12 8.5-12 12-9 11-5 4-32 20-16 7-6 0.5-5-1.5-15-10-9.5-12-3.5-8-1.5-8-4-54 0.5-4-0.5-12 1.5-16 6-44 0-30-7-64-3.5-20-6.5-19-10-15z"/>
<path fill="#00a31c" d="M815 268l890 0 0 579.5-28-6.5-40-12-8-3-8-5-12-11-62-15.5-24-8.5-26-7-20-10-10-3-14-11-6-0.5-28 6.5-10 1.5-10-1.5-48 8.5-6 1.5-35 21-3 4-2.5 6-5.5 7-34 27-26 22-18.5 14-254 0-2-24-1.5-8 0.5-12 3.5-14 5-10 1.5-10-6.5-30-1.5-10-9-26-0.5-16 4-14 9-14 8.5-8 9.5-5 14-4.5 4-3 2-3 1.5-8.5-3-10-5-30 0-4 4-4 1-4 0.5-14-3-4-2.5-2-9.5-3-14 1.5-12 4.5-14 9.5-25.5 29.5-14.5 10-16 9.5-16 7.5-6 0.5-4-1.5-14-9.5-8-10.5-2-4-2.5-10-4-54 0-18 1.5-16 4.5-26 2.5-22-0.5-24-2.5-20-1-24-4.5-40-4.5-18-7-14-12-13z"/>
<path fill="#01a116" d="M815 268l890 0 0 578-28-6-38-11-10-4.5-7.5-4.5-10-10-2.5-1.5-20-4.5-20-5.5-22-5.5-24-8.5-8-1-18-5.5-20-10.5-10-3-12-11-4-1-6 0.5-16 5-10 2-10 1-10-1.5-54 10.5-36 21.5-2 2.5-3.5 8-4.5 6-60 49-20.5 15-250 0-2-24-2-8 1-12 3-12 6-12 1.5-10-5-28-1.5-2-2.5-12-8-24-0.5-16 4-14 6.5-11.5 8-8 10-5.5 14-3.5 8-4 2.5-11.5-3.5-14-0.5-12 0.5-8 0.5-4 2.5-2 7-44-1.5-2-3.5-0.5-10 2.5-16 1.5-12 2.5-13.5 6-12.5 9.5-26 31-12.5 9.5-16.5 10-15 7-6 0.5-4-1.5-11.5-8-8.5-12-3-12-3.5-48-0.5-22 2.5-22 4.5-22 2.5-22-0.5-26-2-18-0.5-24-4.5-42-4.5-20-6.5-14.5-18-17z"/>
<path fill="#029e11" d="M815 268l890 0 0 577-28-6.5-38-11-16-8-10-9.5-4-2.5-20-4.5-20-6-20-4.5-18-6-6-3-10-1.5-18-5-20-11-8-2-5-4-8-8-5-1.5-30 8-12 1.5-10-1.5-16 3.5-32 5-8 3-8 5.5-26 15-3 3.5-3.5 8-5 6-58.5 48-22 16-246.5 0-4-34 1.5-12 3-10 5-10 1.5-12-3-14-0.5-14-12.5-38 0.5-18 2-10 5.5-10 8.5-10 11-5.5 12-2.5 6.5-2 3-2 1.5-2 1.5-12-3-14 0-10 1.5-6 4-10 5.5-20 8-16 3-10 2.5-3 2-0.5 3.5-4.5 1.5-6 0-4-3-3-4-1-2-2-0.5 2-5 4-0.5 2-4 0-6 2-18 9-24 7-14 6.5-15 11.5-21 24-5.5 8-10.5 8.5-18.5 11.5-11.5 5-6 1-4-1.5-10.5-8.5-7-12-2-8-3.5-56 0-18 1.5-16 5.5-26 3-22-0.5-26-1.5-20 0-22-3.5-38-5-24-7-16-3.5-5-20-18.5z"/>
<path fill="#039c0c" d="M815 268l890 0 0 575.5-38-8.5-28-8.5-16-8.5-10-10-4-2-20-4-20-6-22-5-16-6-6-3-12-1.5-16-4.5-18-10-10-4-5-4-7-8-4-1.5-6 1-22 7-14 2-12-1.5-20.5 5-29.5 4.5-6 2-8 6-26 14.5-4 5-3.5 8-5 6-57.5 47-16 12-8.5 5-241.5 0-5-34 2-12 8-22 1-10-2.5-14-1-16-8.5-25-3-13 0-14 2.5-10 5.5-12 9-9.5 8-4 20-4 5-4.5 1.5-14-2.5-18 2-12 8.5-20 14.5-26 3.5-8 1.5-8 4-1 2-2.5 2-0.5 3-4 2-6 0-6-3.5-4-7.5-2.5-4 1.5-2 0-4 3-6-0.5-10 4.5-22 14-24 9.5-12 6-10 6.5-7 6-19.5 22-7.5 10-6.5 6-17.5 12-12 6.5-4 1.5-6 0-4-2.5-6-5.5-6.5-12-2-8-3-58 0-16 1.5-12 8-42 1.5-10-2-46 1-24-2.5-28-6-32-6-16-7.5-10-22.5-21z"/>
<path fill="#049907" d="M815 268l890 0 0 574-40-8.5-24-7-16.5-8.5-10-10-5.5-3-20-4-22-7-20-4-14-5-8-4-14-2.5-14-4-8-3.5-10-6.5-10-4-4.5-4.5-5.5-7.5-2-1.5-4-1-28 9.5-14 2-12-1.5-18 4.5-32 5-6 2-8 6-26 14.5-4 4-4.5 10-7.5 8-64 51.5-10 7-6.5 3.5-237 0-3-12-2.5-22 2-12 8-22 1-8-3-16-1-20-7.5-22-3-12 0.5-12 1.5-10 5-12 4.5-6 5-4 9-4 17-2.5 4-2 2-2.5 2-5 0.5-8-2-22 2.5-12 8.5-18 15.5-22 11.5-26 3.5-1 2-2 3.5-1 3.5-6 2.5-8-0.5-4-3-4-3-2-9-2-2 2.5-18 0-10 4-25 17.5-11 6-24 11.5-14 8.5-12.5 12-25.5 30-20 15-10 5.5-6 2.5-5.5-1-4.5-4-5.5-8-3.5-12-1.5-40-1.5-18 1.5-30 8-36 2.5-18-1.5-42 1.5-32-2-20-6-32-7-20-9-12-26-24.5z"/>
<path fill="#059702" d="M815 268l890 0 0 573-40-8.5-24-7-14.5-7.5-11.5-11-5.5-3-20.5-4-22-7-20-4.5-14-5-8-4-14-2-14-4-26-13.5-4.5-4-6.5-10-5-2.5-4 0.5-14 6.5-12 3.5-14 2-14-1-18 4.5-28 4.5-8 2-8 7-27 15-4 4-4.5 10-8 8-64.5 52-8 5.5-9 4.5-232.5 0-3-12-2.5-22 2-12 7.5-22 1-8-3.5-16 0.5-20-7.5-24-2.5-10 0.5-12 3-14 6-11 8-7 8-2.5 18-2 4-3.5 1.5-4 0.5-6-1-30 3-10 6-13 15-19 11.5-20 13.5-18 4-1.5 2.5-2.5 11.5-15 10 2.5 3-1.5 1-4-1-2-3-2-10-0.5-9.5-3.5-10.5-2-6 1-14 0.5-10 1.5-12 4.5-10 6-10 8.5-12 8-30 15.5-13.5 8.5-14.5 14-24 28-17.5 14-14.5 8.5-4 1-4.5-1.5-5.5-8-4-12 0-38-2-22 0-20 2-14 9-36 1.5-10-1-44 2-34-1.5-18-6-30-4.5-16-3-8-4.5-8-6.5-8-29.5-27.5z"/>
<path fill="#119a00" d="M815 268l890 0 0 572-40-8.5-24-7-14-7.5-11-11-5-2.5-28-6.5-16-5.5-20-4-14-5-8-4-14-2-14-4-6-2.5-20-12-3.5-4-6.5-11-2-1.5-4-0.5-4 1-14 7.5-10 3-16 2.5-14-1.5-54 11-4 3-4 4.5-28 15.5-4 4.5-4.5 10-7.5 7.5-32 26.5-33.5 26-8.5 5.5-9.5 4.5-228 0-3.5-14-2-20 2.5-14 6.5-20 1-8-3.5-16 1-22-7-24-2-12 0.5-10 3-12 5-9 8-7 8-2.5 18-0.5 4-3 1.5-4 0.5-6-1-24 0.5-10 3-10 5.5-11 15.5-17 15-24 5.5-6.5 16-14.5 21-9 7-8 2-6-3-6-4-4-5-2-10-2-44 5-12 2.5-12 4.5-7 4-15 12.5-12 8.5-24 12.5-16 10-14 12.5-24 27.5-9 8.5-21.5 16-5.5 2-2 0-2-1.5-5-8.5-2-10 1-36-2-22 0-20 2-18 9.5-34 1.5-8-1-42 3.5-34 0-14-2.5-14-9.5-38-5.5-14-4.5-8-6.5-8-33-30.5z"/>
<path fill="#22a100" d="M815 268l890 0 0 570.5-58-12.5-9.5-4-8.5-5-6.5-5-5.5-6.5-6-3.5-28-6-22-7-14-2.5-14-5-8-4-16-3-16-5-21.5-13.5-4.5-6-4-9.5-2-1.5-4-0.5-6 1-13.5 8.5-10.5 3.5-16 2.5-12-1.5-8 0.5-12 3-30 5.5-8 2.5-7.5 8-23 12-5.5 4-2.5 4-4 8-5 6-36.5 31-36 27-16.5 8-222.5 0-4-14-2.5-18 2.5-14 6.5-22 0.5-4 0-8-3-12 2-22-8-34 0.5-12 2.5-10.5 6-10.5 8-6.5 8-1.5 16 3 4-1 1.5-3 1-6-1.5-26 0.5-12 2.5-11 4-9 6-8 10-8.5 10.5-17.5 9.5-12.5 18-15.5 20-10 7.5-6 4.5-4 2.5-4 3-2 0.5-4-0.5-4-1.5-4-7-6-9-3-10-1.5-12 0.5-16 3-22 4.5-16 4.5-14 7-18 14.5-14 10-21 10.5-15 9.5-14 12.5-20 22.5-23 21.5-11 8.5-4 1.5-2-0.5-4-7-1.5-8.5 2-28-2.5-32 0-24 1-10 3-13.5 10-30.5-1-36 0.5-14 4-26 0-10-0.5-10-3-12-7-22-3.5-18-5.5-14-6-9-6-7-26-23.5-10-10.5z"/>
<path fill="#33a700" d="M817.5 268l887.5 0 0 569.5-58-12.5-10-4-8-5-6-5-4-5.5-8-4.5-28-6-12-4.5-10-2.5-14-2.5-14-5-8-4.5-16-2.5-16-5-20-13.5-3.5-5-2-8-2-4-2.5-1.5-6-0.5-6.5 2-13.5 9-10 3.5-16 2-14-2-8 0.5-48 11-4 3-4 6.5-24 12.5-4 3-3.5 5-4 8-5 6-35.5 30-38 28-17.5 8-217.5 0-4.5-16-2-18 2.5-14 6.5-22 0-10-3-10 0.5-12 2-12-5.5-26-1-12 2.5-16 6.5-12 4-4 4.5-2 8 0 16 8.5 2 0.5 2.5-1 1-4 0.5-6-3-36 1-12.5 4.5-13.5 5.5-8 8-4.5 3.5-3.5 12.5-21.5 12-13.5 19.5-15 22.5-12 11-4 3-2 2.5-6 2-2-1-8-3.5-10-2.5-4-3.5 0-4-3-6-2-10-1-24 2-18 3.5-30 8.5-16.5 8-17.5 14-17 12-19 9.5-16.5 10.5-16 14-14 16-19.5 17.5-12 12-4 3-4 1.5-2-2-1.5-8 3-24-3-48 0-18 4-22 10-26-1-28 1.5-22 4-22 0.5-22-4-16-8.5-24-2.5-16-6-16-11.5-16-11-10.5-16-13.5z"/>
<path fill="#43ad00" d="M824 268l881 0 0 568-24-5.5-14-2-20-4.5-8-3.5-8-4.5-7.5-6-4.5-6-8-4-28-6-12-4.5-10-3-14-2-14-5-8-4.5-16-2.5-16-5-18.5-13.5-3.5-6-2-12-8-2-6 0.5-6 2.5-12 8.5-10 3.5-18 2-12-2-10-0.5-30 6.5-16 4.5-6.5 4.5-1.5 6-24 13-6 5-6.5 12-5.5 6-18 14.5-16 14.5-38 28-10 5-11 4-211.5 0-5-16-2-18 2-14 6.5-22 0-10-3.5-10 1-12 2.5-10-4-26-1-12 2-16 5.5-10 6.5-6.5 8 0 14 10.5 6 3.5 2 0 2-2 2-3.5-5.5-48 2-14 4-12 6.5-8 7-2.5 1.5-1.5 14.5-25.5 8-10 22-17 24-11 6 0.5 8 3.5 6 0 2-1 3-5.5 2-10-2-12-5-22-2-3-6-3-30 0-16 2.5-16 4-38 11.5-16 8-18 14.5-16.5 11.5-17.5 9-18 10.5-18 14.5-14 15.5-10 7.5-2 1-8 1.5-2-0.5-4.5-5-4.5-12-4-40 0-18 3.5-18 11.5-28-2-26 4-21.5 2-4.5 1.5-42-3.5-16-10.5-26-1.5-14-6-16.5-12-17.5zM1291 451.5l-21 20.5-3 6 1.5 6 1.5 2 5 2.5 8-1.5 10-6.5 6-2.5 6-6 2-10-2-7.5-6-4-6 0z"/>
<path fill="#51b200" d="M831 268l874 0 0 566.5-24-5.5-14-1.5-20-4.5-8-3.5-8-4.5-6-5-6-7.5-6-3-30-6.5-16-6-20-3.5-14-5-8-4.5-16-3-16-5-12-8.5-5-5.5-2-4-1.5-10-2.5-4-3-1.5-6-0.5-12 3-14 10-8 3-8 1.5-10 0.5-20-4.5-18 0.5-12-4.5-4 0.5-4 1.5-4 4-6 8.5-8 6.5-1 1.5 0 4-1.5 2-21.5 12-5 4-2 2-6.5 12-4.5 5-34 29-40 29-10 4.5-12.5 4.5-205 0-6-16-2-18 1-12 7-24 0-10-3-12 0.5-10 2.5-10-3-30 0-10 3-12 5.5-9 2-2 4-2 4 1 18 12 4 1.5 2 0 1.5-1.5 2.5-8 0-4-5-46 2-14 5-11 4-4.5 6-3.5 3.5-3 14.5-26 8-9.5 22-16.5 12-5.5 8-2.5 6 0.5 14 4.5 6-0.5 4-2.5 4-5 3.5-7 5-22-3-2-1.5-10.5 0 2.5-2 1-2-1-1-8 3-2-1-6-3-4-4-2.5-2-3-16 0.5-28 4-16 3.5-50 16.5-18 8.5-36 26.5-37 20-17 12.5-14 14-6 2.5-4 0.5-6-2-3.5-3.5-3-6-3.5-12-1.5-16-1-24 3.5-18 10.5-26 0-28 2-10 4.5-12 1-6 0.5-32-0.5-10-3.5-14-9.5-24-4-18-7-18-12.5-18zM1295 440l-8 2.5-9.5 5.5-2 2 1 2-11.5 10-5.5 6-1.5 6 0.5 8 1 2-0.5 2 6 4 8 3.5 10 1 6-1.5 6.5-3 7.5-5.5 5-4.5 7-12 1.5-10-1-6-2-4-2.5-0.5-1.5-1.5-0.5-3.5-2-1.5-6-1.5z"/>
<path fill="#5eb800" d="M838 268l867 0 0 565.5-22.5-5.5-15.5-1.5-20-4.5-8-3.5-7.5-4.5-6.5-6-5-6-7-3-30-7-16-6-20-3.5-14-5-8-4-14-3-14.5-4.5-3.5-1.5-10.5-8.5-3.5-4-2.5-6-1.5-8-2-4-4-2.5-8-1-12 3-16 11-14 3.5-10 0-22-6-22-2.5-8 0-4 1-6 4-7 9.5-8.5 8-3 8-25.5 15.5-8 13.5-4.5 5-34.5 30-39.5 28-9.5 4.5-14 5-3 0.5-198 0-6.5-16-2.5-18 1.5-14 6.5-22 0-10-3-12 0.5-10 3-12-2.5-28 1.5-10 2.5-8 4-5.5 6-3 6 1.5 16 7.5 6 1.5 2-1 2-15-4.5-48 2-12 4.5-10 14-13 13.5-25 6.5-8 10-8.5 14-9 10-4.5 6-1.5 6 0.5 18 5 6-0.5 6-3.5 8.5-12 12.5-26-3.5-2 2-8 0-4 2-2-2-8 2.5-0.5 2-2.5 2 0 2-2.5 7-0.5 1-4-2-3.5-2 1.5-2 0-10 8.5-2.5-0.5-0.5-4-3-4-6-4-7.5-2 0.5-2-1-1.5-34 6-34 8-50 18-18 9-38 26.5-34 17.5-24.5 14.5-1.5 1-2 3.5-4 3-6 2-4-0.5-6-5-4-8-2.5-18 1-4-1.5-18 2.5-16 10-28 1.5-28 6.5-26 1.5-26-1-18.5-3.5-15.5-9-22-8-28-5.5-12-6.5-10-6.5-8zM1299 432l-10 2-14 5.5-17.5 10.5-6.5 6.5-2.5 5.5 2.5 1 2-2 2 1-4.5 8-1 4-2.5 2 3 6 3.5 4-1 2 0.5 1.5 22 8.5 6 1 8-0.5 6-1.5 5-3 11-10.5 11-17.5 2.5-12-1-6-1-2-5.5-2-1.5-2 1.5-1 1-3-3-3.5-6-2.5zM1162 496l1-1 0 1z"/>
<path fill="#6cbe00" d="M845 268l860 0 0 564-22-5-16-2-20-4.5-13.5-6.5-6.5-5.5-6-7-6-3-32-7.5-16-6.5-20-3-14-5-8-4-25-6.5-7-4-9-8-3-4-3.5-12-4-6-4.5-2.5-6-0.5-12 2.5-18 11.5-6 2-8 1.5-11.5-0.5-16.5-6-10-2-18-1-6 0.5-4 1.5-7 5-8 10-8 8-2 6-3 4-16 8.5-6 4-3 3.5-5.5 10-5 6-22 18-12.5 12-21.5 14-16.5 12.5-10 5-12 4-9 2.5-191 0-7-16-3-18 1-14 7-24-0.5-8-3-12 1-10 2.5-12-1.5-18 0.5-10 3-12 4-5 4-2.5 8 0 20 6.5 2 0 2.5-1 1-18-3.5-46 2-12 3.5-8 2.5-4 13.5-14 10.5-20 5.5-8 6.5-6.5 12-8.5 10-5.5 10-3 8 0.5 20 5.5 6-1 6-3.5 10-12 10.5-18 11-14-3-2 3-6 2.5-10-0.5-4-2-4 4.5-0.5 2-2 4 0 2-2 2 0 2-2.5 2 0 6-4 6 0 2-2.5 2 0 2-2 2 0 4-3.5 4 0 5.5-5-1.5-2-26 1-4 4-2 0-2 2-2 0-2 1.5-2 0.5-6 4-2-0.5-4 4-3-0.5-3-4-4-3-8-2.5-10-1.5-2-3-31.5 6-28.5 7-64 25-18 9.5-18 13-20 12.5-42 20.5-12 4.5-4 4.5-8 2.5-4-1-4-4.5-3.5-9.5-1-8 0-4 1-2-2-16 2.5-14 7.5-26 3-26 6-30 2.5-16 0-12-1-18-4.5-16-10-26-6.5-22-6.5-14-6-10-6.5-8zM1297 426l-18 5-15.5 7-17 10-8.5 6-3.5 4-2.5 6 0.5 2 2.5 4-0.5 4 0.5 4 3 4 9 6.5 0 3-2 1 10 1.5 20 7.5 14 1.5 6-1 6-3.5 8-6.5 5.5-6 14-20-1-2 3.5-8 1.5-8-1.5-6-3-4 3-1 1-1-1-1-4-0.5-3.5-4.5-6.5-4-8-1.5zM1333 433.5l0 1 1.5-0.5zM1242.5 466l1.5 0-0.5 2-2.5 1-1-1z"/>
<path fill="#7ac300" d="M852 268l853 0 0 562.5-22-5-16-1.5-18.5-4-9.5-4-6-3.5-12-12.5-4-2-16-4.5-18-3.5-16-6.5-20-3.5-22-8.5-12-3-12-4-6-3-8-8-2.5-3.5-4.5-12-5-7-4-2.5-8-1-12 2.5-19.5 12-12.5 3-11-1-15-7-8-2-20 0-8 1-4 1.5-8 6-6.5 8.5-10 10-1 2-1.5 6-2 2-15 7.5-6.5 4.5-3.5 4-5.5 10-4.5 5-25 21-10.5 10-20.5 13-18 13.5-20 8-12.5 3.5-182.5 0-5-5.5-4-8.5-3-12-1.5-10 1-12 7-24 0-8-3-14 0.5-8 2.5-12-1-18 2-12 1.5-4.5 4-5.5 6-3 8 0.5 18 4 2-0.5 2-1.5 1-3.5 0-16-2-44 1.5-12 4.5-10 16.5-20 9-18 4-6 5.5-5.5 10-7 10-5.5 8-3 6-1 6 0.5 22 6.5 6-1 4-2 10-11 22-31 9.5-10-3-2 7-12 6.5-4 2-2.5 8-4 1-1.5-1-2 4-1 10 0 10 2 4 1 1 2-1 1.5-2-0.5 0 2.5 8-1 6 0.5 28 9 12 1 6-1.5 4-2 14-12 16-22 1-3.5 3.5-6 2-2 3.5-8 0.5-8-3-6 4.5-1 2-3-3-4-5 2.5-2-0.5-6-7-8-4-6-1-18 3-14 3.5-15 5.5-18 8-3 2.5-2-0.5-1.5 2-16 8-22.5 14-4-2.5-2 1.5-6 1.5-2-0.5-4 5.5-10-2.5-20-1-2-2.5-24 4.5-34 8.5-16 5.5-60 26-14 7-34 22.5-24 12-24 9-6 1-6-0.5-2 4.5-6-0.5-5-5-3-8-0.5-4 1.5-4-2-8 0-8 1.5-12 6.5-26 2.5-22 8.5-46 1.5-18-1.5-14-5.5-20-7.5-18-11-31.5-5-10.5-11-16.5zM1191 515l-1 1 1 1.5 1.5-1.5zM1233 497.5l0 1 2-0.5z"/>
<path fill="#88c900" d="M858.5 268l846.5 0 0 561.5-22-5-16-1.5-18-4-8-3-6.5-4-5-4-6.5-7.5-4-3-16-4.5-20-4-14-6-22-4-22-8.5-10.5-2.5-11.5-4-6.5-4-5.5-6-6.5-14-7.5-10-6-3.5-8 0-12 2-20 12-12 3-10-1.5-12-7-8-2-16-0.5-10 1.5-9 2-9 6.5-7.5 9.5-10 10-1.5 2-1.5 6-1.5 2-14 6.5-8 5.5-8 13-4 5-26.5 22-10.5 10-19.5 12-19 14-18.5 7-12 3-2.5 2-177 0-6.5-8-3-6-5-16-1-10 0.5-6 1.5-8 5.5-14 1-4 0-6-3-12 0-6 3-18-1-16 1.5-10 2-4.5 4-5 8-4 12 0.5 12 2.5 3-1.5 1.5-6-1-46 2-24 4.5-10 15-20 8-16 5-8 6-6 8-6 12-6 8-2.5 10 0.5 22 7 6 0 4-1 6-6 32.5-42 11.5-11 6-4 4-2 2-0.5 2 2 20-9.5 12-2.5 12 1.5 20 7.5 16 1 8-3 6-4 12-11 9.5-14.5 18-22 5.5-10 0-2 1-0.5 2 0.5 2-4-3.5-6 2-2-7.5-10-1.5 0-1.5 2.5-2-0.5-3-4-5-4-20-3-14 2-30 9-34.5 14-0.5 2-3-1-2.5 1 0.5 2-14 5.5-16 6-10 1.5-2 2-24 2-2-2.5-32 7-40 11-70 31-14 7.5-34 21.5-24 11.5-14 5-10 1.5-8-1.5-4-3.5-0.5 2.5-3.5 2-3.5-4-2.5-6-0.5-4 1-4-1-14 19-110 0-10-1-10-5-18-25.5-66-10.5-16zM1225 498l6-1 0 1-2 0-2 2.5-2 0-4 4.5-2-0.5-2 2.5-2-0.5-2 2.5-2 0.5-4-0.5-2 2.5-2-1.5 12-8.5zM1199 512l2-1 0.5 1-0.5 0.5z"/>
<path fill="#95cf00" d="M864.5 268l840.5 0 0 560-22-5-16-1.5-18-3.5-12.5-6-5.5-4.5-8-9-4-2-18-5-20-4.5-12-5.5-22-3.5-22-8.5-18-5.5-7.5-4-4-4-3.5-6-3-10-12-12.5-4-2.5-8 0-14 2.5-20 11-10 3-10-1.5-11-8-7-1.5-18 0-10 1.5-12 3.5-8 6-8.5 10.5-10 10-2 2 0 4-1.5 3-14 7-9 6-7 12-5.5 6-26.5 22-10 10-20 11.5-18 13.5-10 4-20 5.5-4 2.5-18 0-7 1-146 0-5-5-6.5-9-5.5-17-1.5-11 2.5-14 5-12 1-6 0-6-2.5-10-0.5-8 3.5-16-1-14 0.5-6 2.5-6 2.5-4 5.5-4 4.5-2 12-1 14 4.5 2-11.5-1-42 4-28 5.5-12 13-18 6.5-14 6.5-10 5.5-5 10-6 8-4 8-2 10 0 24 8.5 6 0 4-1 4-4 31.5-40.5 10.5-11.5 12-7.5 4-0.5 22-10 10-2 8 0 8 2 12 6 4 1 16 0 8-2.5 20.5-15 8.5-14 9-10 14-11 12-5 8-5.5 0-4.5-5.5-8 0-2-4.5-8-8.5-10-4 0-7-6-2.5 0-6-2.5-8-1.5-2-1-8 0-10 1.5-20 6.5-14 3-34 13.5-28 8.5 1 2-7 2.5-20 4.5-2-2-3.5 1 1 2-1.5 0-2-1.5-38 9-46 13-12 4.5-68 32.5-37.5 22.5-16.5 8.5-10 4-12 3-8 0.5-6-1-4-2.5-4-5-2 1-2-1-2-5.5 1-4-1-14 2-20 7.5-38 3-22 5.5-22 1-10-1-8-5-18-29-72-10-16zM1205 441.5l-1.5 0.5 1.5 1zM1041 727l-1 1 1 2.5 1-0.5z"/>
<path fill="#a3d400" d="M870.5 268l834.5 0 0 558.5-22-4.5-16-1.5-18-4-10.5-4.5-5.5-4-12-12-20-6-20-4-12-5.5-22-3.5-22-8.5-14.5-4.5-7.5-4-4-4-3.5-6-1.5-8-2-4-9-6.5-6-7-2-1-8-0.5-14 2-8 3.5-14 8-10 3-4 0-6-2.5-8-8.5-4-1.5-24 2-12 2.5-10 3-8 6.5-9.5 11-10.5 10-1.5 2-0.5 6-14 7-10.5 7-7 12-11.5 12-21 16-9.5 10-18.5 10-15.5 12-8.5 4.5-26 7-2 1.5-12 0-8-1.5-13 4.5-131 0-2-1.5-8-6-6-8-6-16.5-2-10 2.5-14 5.5-12 1-8-2.5-14-0.5-10 3.5-14-0.5-18 3-6 4-4.5 6-4 8-2 4-0.5 8 2 8 7.5 2-0.5 1-2-1.5-8-0.5-48 5-28 5.5-14 13-18 5.5-13 7.5-11 10.5-7 10-5 12-2.5 6 0.5 22 8.5 10 1.5 4-1.5 3.5-2.5 8.5-13.5 26-32 8.5-8.5 9.5-6.5 26-10.5 12-3 12 1.5 12 6.5 4 1.5 10-1 6 0.5 8-2 9.5-5 7.5-6 9-5 8-15 5.5-6 8.5-6.5 8-4.5 8-3 24.5-6 5-4 0.5-4-4-5.5-10-8.5-10-13-10-10.5-2.5-0.5-11.5-6.5-10-4-14-0.5-12 2-6 1.5-16 6-14 2.5-26 10.5-22 7.5-28 8-64 16-36 10.5-16 6-60 29.5-14 7-33.5 20-13.5 6-19 6-12-0.5-5.5-3.5-4.5-9-2-1.5-2-19.5 2-18 7.5-34 2-20 5-14 1.5-8 1-8-1.5-10-6.5-20-14.5-34-15-38-6.5-12z"/>
<path fill="#b2db00" d="M876.5 268l828.5 0 0 557.5-22-4.5-22-3-12-2.5-10-4.5-6-4.5-9.5-10.5-2.5-1.5-20-5.5-20-4.5-12-5.5-22-3-22-9-11.5-3-6.5-3.5-5-4.5-3-6-3-12-2-2-10-6-7-8.5-8-0.5-16 3-24 11-8 2-8-2.5-8-10-4-1-8 2-28 4.5-12 3.5-8 6.5-10 11.5-10.5 10.5-1.5 2-1.5 6-12.5 6-11.5 8-6.5 11.5-12.5 12.5-19.5 15-10 10-20 11-14 11-8 4-30 8.5-10-0.5-8-2.5-2 1-8 1-10 5.5-117 0-1-2-12-7-6.5-7-7.5-16-2-10-0.5-4 2.5-10 5-10 2-10-2.5-14 0-10 0.5-4 2.5-6 0-20 4.5-8 2-1.5 6-4.5 8-2.5 8 1 7.5 5.5 2.5 3 4 1-1.5-46 0.5-16 6.5-28 4-12 6-10 6.5-8 6-14 7-10 11-7.5 10-4 12-1.5 4 0.5 18 7 12 2.5 4 0 6-1.5 2-1.5 9-16 25-30 10-10 9.5-6 22.5-9 14-3 10 1.5 10 7.5 2 0.5 20-2 10-2.5 9.5-5 8.5-6 8-2.5 4-5.5 3.5-10 8-8 8.5-5.5 12-5.5 28-7 7-4 3-8-6-10-11.5-10-15-18-9.5-8-14-7-12-2-14 1-16 3.5-18 7-12 1.5-30 12-46 15-64 16.5-36 10.5-18 7.5-18 10-54 26.5-18 10.5-19 9.5-15 6-12 2.5-4 0-8-2.5-5.5-10-4-12-0.5-14 4.5-18 7.5-42 2-2 3-14 2-18-3-12-22.5-52-13.5-36-7-14zM1047 736l-2 2-1 4 1 2.5 7-2.5-1-3z"/>
<path fill="#c1e200" d="M882 268l823 0 0 556-19.5-4-24.5-3-12-3-8-3.5-6-4-12-12.5-22-6.5-18-3.5-13.5-6-22.5-3.5-32-11.5-6-3.5-5-5.5-3.5-12-3.5-6-12-7.5-8-9.5-8 0-16 3.5-20 8.5-6 2-6 1-6-3-7.5-9-6.5-1.5-8 2.5-28 6-12 4-8.5 7-9.5 11-11.5 11-3.5 8-21.5 12-9 14-12 12-19 14-9.5 10-20 10-15 12-7 3.5-30 8.5-10-1.5-8-3-10 0.5-8 4-6.5 6-107.5-0.5-2-2-1-3.5-12-6-7-6.5-8-14.5-2.5-9 0-4 2-10 5-10 2.5-10-2-18 0.5-8 2.5-6 0.5-20 5.5-8.5 6-4.5 8-3 6 1 6 4.5 3 10.5 3 3.5 2 0.5 4-0.5 4-1.5 2-2.5 1-3.5-1-2.5-6.5-5.5-2-4-1.5-36 1-18 7.5-28 4.5-12 5-9 7-9 5-12 6-8.5 12-8.5 8-3 6-1 8 0 20 6.5 12 2 4 0 8-2 3.5-3.5 9.5-16 21-25 11-11 9-7 18-7 16-3 8.5 1 10 6 3.5 1 22-3 12-4 26-12 5-6 3.5-8 3-4 3.5-4 7-4.5 14-6.5 26-7.5 8-4 3-3.5 2-4 0.5-4-0.5-4-3-7.5-4-5.5-22-25-2-4-8-6.5-6.5-3.5-13.5-3.5-14-0.5-12 1.5-17.5 4.5-16.5 6-14 2-28 10.5-54 19-58 15-34 10.5-18 7.5-26 14-46 22.5-20 11.5-14 6-20 6.5-6 0.5-6-0.5-6-4.5-4-6-3.5-8.5-1-10 2-10 2.5-6 6-32 6-16 3-26-1-10-4-12-22.5-48-14-36-5-12-4.5-7z"/>
<path fill="#d0e900" d="M887.5 268l817.5 0 0 555-18-4-20-2-16-3.5-12-6-16-15-20-6-20-4-12-5.5-24-4-30-11-6.5-4-3-4-4.5-13-3.5-5-12.5-8.5-8-9-4-2.5-6 0.5-16 4.5-18 7-10 2.5-6-2-10-9-6-1.5-38 10-12 4-9.5 8-8.5 10.5-12.5 11.5-3.5 7-22 13-8 13-13 13-19 14-10 10-20 9.5-14 11.5-8 4-28 7-6-0.5-14-5.5-8 0-8 3.5-11 10.5-86.5 0-2.5-0.5-10-5-4-3-2-3.5-6-1.5-6-3.5-6-5-4-6-4.5-8-2-8 1.5-12 5-10 2.5-10-1-20 3.5-12 1.5-18 1.5-4 3-4 5.5-4 5.5-2.5 4 0.5 4 2.5 4.5 11.5 2 2 3.5 2 4 0.5 4-1 4-2 2.5-3.5 1-4-1-4-8-8-1-4-2-32 2-18 8-28 4.5-12 4.5-8 7-10 6-12 5-6 7.5-6 4-2 12-3.5 10 0.5 16 4.5 14 2 8-0.5 6-2 5.5-5 10.5-18 20-23 12-12 10-5.5 14-4.5 10-1 8 1 12 4.5 8 0 22-4 32-12 8-5.5 11-16 7-6 14-7.5 28-9 8-4 3-3.5 2.5-6 1-6-0.5-7-6.5-15-17-20-0.5-3-8-8.5-12-6-12-2.5-12-1-16 2-18 4-20 6.5-18 3.5-46 18-26 9-94 26.5-23 9.5-27 15-66 32.5-18 6.5-12 1-2 2-6-0.5-6-3.5-6.5-9-1.5-14 2.5-12 3-2 4-24 7-24 2-22 0-8-2-8-3.5-10-13-23.5-11-22.5-19.5-50-5-8z"/>
<path fill="#dff000" d="M893 268l812 0 0 553.5-18-3.5-20-2-16-4-12-6-12-12-4-3-20-6-20-4-12-5-22-4-32-12-6.5-6-4.5-12-4-6-14.5-10-8.5-9.5-4-2.5-6-0.5-32 11.5-8 2-6-1-12-8.5-4-1.5-4 0-14 4.5-24 6.5-12 4.5-10 8.5-8.5 10-12.5 12-3.5 6-23 14-7 12-14 14-17.5 12.5-10 10-20 9.5-14 11.5-8 4-28 7-6-1-16-7-8 0-8 4-9.5 9.5-5 4-70 0-5.5-2-14-9-8-6.5-10-3-4-2.5-6-5-4-5.5-3-6.5-1.5-6 1.5-10 4.5-10 3-10 0-20 5.5-27.5 4-6.5 4-3 4-1.5 4 1.5 6.5 9 3.5 2.5 4 1.5 6 0.5 4-1.5 4.5-3 2.5-4 1.5-4-0.5-4-2-4-6-6-3.5-14-1-20 2-16 8.5-28 6-15.5 16-26 4-5 4-3.5 6-3.5 12-4 10 0 16 3.5 14 1.5 10-1 6-2 5.5-4.5 8-14 5.5-8 25-27.5 8-6 8-4 12-2.5 6 0 18 5 8 0 26-5.5 33.5-11.5 8-6 12.5-15.5 8-6.5 16-8.5 26-8.5 6-3.5 4-5.5 3-8 1-8-0.5-8-2-10-4.5-10-3.5-2-7.5-10-0.5-2-13.5-14.5-12-4.5-10-2-12-1-16 1.5-18 4-26 8-22.5 4.5-27.5 11.5-44 16.5-86 24-28 11.5-28 16-60 28.5-18 5.5-14 0-2 2.5-2-0.5-4-1.5-6.5-6-1.5-4-1-10 2-12 3-1.5 1.5-2.5 2-16 7-30 2-16-0.5-14 0.5-4-4.5-10-14-22.5-10.5-19.5-9.5-22-13.5-36-4.5-8z"/>
<path fill="#eef700" d="M898 268l807 0 0 552.5-18-4-20-2-16-4-10-5-14-13.5-4-2.5-20-6-20-4-12-5-12-1.5-10-3-30-11-4-3-3-4-3-10-4-6-16-10.5-12-12.5-6-2.5-26 10-12 3-8-1-8-5.5-6-2.5-8-1-14 5.5-22 6-14 5.5-10 9-9 10.5-13 12-4 6-22 13.5-7.5 12.5-14.5 14-17 12-10 10-21 9.5-14 11.5-8 3.5-20 5.5-8 0-6-1.5-12.5-6.5-3.5-1-6 0.5-8 2.5-14 14-4 2.5-4.5 1.5-31 0-8.5-2.5-6 1.5-12-3-6-3-24-17-12-3-6-3-4-4-4-5.5-1.5-4.5-0.5-6 1-6 7.5-20 0.5-18 5-22 4-7.5 4-2.5 4 0.5 12 6.5 10 1.5 8-3.5 5.5-7 2-6-0.5-4-3-5.5-4.5-4.5-2-4-3.5-14 0-16 1.5-12 6.5-21 8.5-23 4.5-8 14-20 7-5.5 6-3 8-2.5 10-0.5 32 2.5 10-1 6.5-2 6.5-6 10.5-18 18.5-22 12-10.5 12-6.5 8-1.5 6 0 14 5 8 0.5 32-8 14-5.5 12-1.5 8-3 8-6.5 14-15.5 8.5-7 17.5-9.5 26-8.5 5.5-4 5-10 3-14 0-14 0.5-2-1.5-10-2-6-4.5-8-5.5-2-11-14-5.5-5-5.5-1-10.5-3.5-8-1-16 0-14 2-20 4.5-22 7-16 3-14 3.5-74 28.5-50 15-30 7.5-30 13-34 19-48 21.5-2 0-12 4-6 1-8-1-4-2.5-1.5 4.5-2.5 0-4-2.5-3.5-5.5-1.5-6 0-8 1-6 6-6 0.5-12 6-32 2.5-20 1.5-4-1-8-4.5-10-16-22-9.5-16-10.5-22-15-41.5-4-7z"/>
<path fill="#fdfe00" d="M902.5 268l802.5 0 0 551-16-3.5-20-1.5-16-4-12-6-12-12-6-4-20-6.5-19-3.5-13-5-14-2-34.5-13-5.5-3.5-2-2.5-5-14-1-2-18-10.5-14-14.5-4-2.5-4-0.5-16.5 8-11.5 3.5-6 1-6-1-10-5.5-6-2-10-1-14 6.5-18 5.5-18 7-10 8.5-9.5 11.5-20.5 20-18 10-3 4-5 9.5-14 13.5-18 12.5-10 9.5-20 8.5-14 11.5-8 4-24 5.5-6-0.5-16-8.5-6-1-6 0.5-10 4-10 11-6 3.5-8 3-12 0.5-8-1.5-12-4-6-1-4 0.5-10-3-10-7-13.5-11-8.5-3-10-2-6-3-6-6.5-1.5-3.5-0.5-6 1.5-6 7.5-18 1.5-22 2-8 3.5-9 4-4 4-1 16 4 10-0.5 4-2 4-3.5 5-8 1.5-8-0.5-4-4-6-2.5-2-3.5-6-2-5.5-1.5-10.5 0.5-14 2-12 4-12 11-28 6-10.5 10-12.5 10-7.5 12-4.5 10-1 32 1 10-1.5 5.5-1.5 7.5-6 10.5-18 12.5-15.5 13-12.5 11-8 8-3 6-0.5 6 1 10 4.5 8 0.5 18-6 18-4.5 12-4.5 18-2.5 10-7 18-18.5 10-7.5 20-10 20-5.5 4-2 4-6.5 7.5-22 4.5-28 2-6 0.5-6-1-2 1-2-3-4-3.5-1-2 0.5-4-1.5-11.5-14-2.5-2-5.5-2-4.5 0-12-3.5-10-1-14 1-16 2-28 7-22 7-30 5.5-81.5 32-40.5 12-30 7-32 15-33 18-41 16.5-18 4.5-8-0.5-2-0.5-4-4-2.5-4-1.5-6-0.5 4-3 2-0.5 5.5-2.5-7.5 0.5-8 1-6 4-6 1-4 0-8 7.5-42 2-2 0-8-1-8-5-10-17.5-20-10.5-16-11.5-24-14.5-40-4-8zM1497 377.5l-2 1.5-1.5 3 0 2 1.5 1.5 6 0.5 4-2-2-5-2-1.5z"/>
<path fill="#fff900" d="M907 268l798 0 0 550-16-3.5-20-1.5-16-4.5-12-6.5-11.5-12-6.5-3.5-20-6.5-18-3.5-14-5-12-1.5-34-13.5-5-2.5-3-3.5-4-13.5-2-3-12-5-6-4-16-16-4-2.5-4-1-14 7.5-8 3-8 1.5-6-0.5-8-5-4-1.5-18-2.5-4 1.5-8 5.5-24 8-14 6-10 9-18 19.5-13.5 12.5-17.5 10-3 3.5-4 8.5-14 14-18 12.5-10 9-20 8.5-14 11-8 4.5-24 5.5-6-1.5-16-8-8-1-8 1-6 1.5-4 2.5-7 8.5-5 4-8 3-10 0.5-7.5-1.5-14.5-6.5-12-0.5-6-2-6-3.5-10-9.5-6-4-10-4-14-3.5-4-2-4-5-1-7.5 8.5-22 2.5-24 1.5-6 3.5-6 3-2.5 4-1 16 1.5 10-1.5 4.5-2.5 4-4 3-4 2.5-6 3-14-2-4-8.5-8-2.5-4-2.5-10 0-14 2.5-12 4.5-14 12-28 5.5-9 8-8 12-8.5 12-4 40-2 10-1.5 6-2 9-7 9-17.5 8-9.5 20-18.5 12-7.5 4-1 6 0 12 6 6 0.5 8-2 15-6.5 19-5 10-4.5 16-0.5 4-1 8-6 20-19.5 12.5-9.5 21.5-10 18-3.5 4-2 1.5-2.5 2.5-10 8.5-20 4-14 5-10 8.5-9.5 10-4.5 16.5-4 15.5-9 10 0.5 12-1.5 3-2 0.5-4-3.5-7.5-4-4.5-4-1.5-4 2-6 11-4 4-2 1-6-1.5-6-3.5-18-7.5-28-6-46-4.5-14 1-20 3-32 8-24 8-20 2.5-14 3.5-82.5 32.5-37.5 12-32 7.5-30 14.5-24 13.5-16 7-30 10-12 2-6 0-6-2-5-8.5-1.5-8 0-12-1.5-2 2-1.5 0-5 2-5.5-1-2 3-12 1-8 5-14 1-10-1.5-8-3.5-6-24.5-22-11.5-16-11.5-24-14.5-41z"/>
<path fill="#fff300" d="M911.5 268l793.5 0 0 548.5-16-3.5-18-1-18-4.5-10-5.5-12-12.5-8-4.5-20-7-18-3-14-4.5-12-2-33.5-14.5-3.5-2-3-4-3.5-12-2.5-4-8-2-8.5-4-6-4-13.5-14.5-8-4.5-4 1.5-8 5.5-4.5 2-11.5 3-6-1-7-6-3-1-10 0-14-2-10 8-38 15-10 9.5-18 19.5-11.5 9-3.5 4-12 6-5.5 4-7 12-14.5 14.5-17 11.5-9 8-22 9.5-13 10.5-8 4-9 1.5-14 4-4-1-18-9-8-1-10 1-10 3-3.5 3.5-4 6-4.5 3-6 2-8 0.5-6-1-4.5-2.5-5.5-9-2-0.5-16 3-6-1-6-2.5-14-12.5-12-6.5-6-2.5-8-1-4-1.5-4-5-0.5-5 9.5-22 2-22 3-7.5 4-3.5 4-1 20 0 4-1 6-3.5 6.5-7.5 9.5-20 8-7 9-5 1.5-2 0.5-2-0.5-2-2.5-1-6 0.5-12 4-6-1.5-6-4.5-3.5-9.5 0.5-14 5.5-22 11-20 3-10 3.5-6 4-4 14-10 12-6 14-2 38-3 10-5 6.5-6 7-14 6.5-8 24-22 10-6 4-1 4 0.5 10 6 6 0.5 8-2.5 18-8 18-5 10-4.5 20 0 8-6.5 22-20.5 14-10.5 22-9.5 16-0.5 4-1 4-3.5 0-10 1-4 3.5-8 6.5-10 7.5-18 7.5-7 4.5-3 9.5-4.5 12-4 18-11.5 22.5-6 1-8-3.5-10-6-8.5-8-5-20-7-6-0.5-12 1-2-0.5-16 5.5-10 2-12 0-4 1-22-1-16 1.5-18 2.5-28 7-42 13-30 4-18 6.5-68 27.5-18 5-18 6.5-32 7.5-28 14-26 14.5-16 6.5-28 6-14 0-6-4.5-3-4.5-1.5-8-0.5-8 4-18 6.5-16-0.5-4 4-16 1-8-2.5-2-2.5-6-3.5-4-15.5-10-12-9.5-4.5-4.5-7.5-10.5-12.5-25.5-15-42z"/>
<path fill="#ffed00" d="M915 268l790 0 0 547-16-3-18-1-18-5-10-6-11-12-7-4-20-6.5-14-3-30-8-18.5-8.5-19-10-7-16-3.5-2-6-1-8-2.5-6-4-16-17-6-4-2-0.5-4 1-10 6.5-6 2.5-6 1-7.5-2-6.5-6.5-4-0.5-10 1-8-1-6-2-3 1-6 8-2.5 2-26.5 10.5-12 6-27.5 29.5-10.5 7-4 5-12 5.5-6 4.5-6.5 12-13.5 13-19 13-9 8-20 8-14 11-6 3-10 1.5-14 4-21-9.5-9-1-10 0.5-10 1.5-6.5 3-3 6-2.5 2.5-6 1-6-0.5-6-1-0.5-2 3-4-1-6-7.5-2.5-6 0.5-18 7-4-0.5-6-2-14-11-20-13-8-1-2-1-2.5-2.5-0.5-2 1.5-6 4.5-8 3-8 2.5-22 1.5-4 4-3.5 6-2 18-1 10-5 6-6.5 11-20 9-7 8-5 4-6-0.5-4-3.5-3-12 0-10 1.5-6-2-2-1.5-3-7-0.5-10 1.5-12 3-10 6.5-12 5.5-8 2.5-10 4.5-7 16-11 12-6.5 14-3 38-4 10-5 7.5-5.5 8-16 8.5-9 22-18.5 8-4.5 4-0.5 4 1.5 4 3.5 8 1.5 10-4 18-9 18-5 10-4.5 20 1.5 30-26.5 14-11 22-10 10-0.5 8 1.5 8-4 5.5-6.5-3.5-6 0-4 4-8.5 7-7.5 5-11.5 4.5-6.5 10.5-8 19-10 18-14.5 22-7 2-6.5-1.5-12-5-12-8-8-13.5-7-12-2.5-14-0.5-10 1-12 4.5-12 3-36 2.5-32 5.5-22 5.5-50 16-14 1-18 3-84 32.5-20 6.5-16 6.5-34 7.5-56 29.5-15.5 5.5-14.5 0.5-11-2.5-8-4-2-2-3.5-8 2.5-12.5 4-6 4-0.5 2-2.5 2-12.5-1-8 4.5-10 1-12-1-4-3-6-2.5-2.5-30-13.5-12-8-4-3.5-9-12.5-10-20-15-42z"/>
<path fill="#ffe700" d="M919 268l786 0 0 545.5-16-3-18-1-16-4.5-10-5.5-12-13-4.5-2.5-23.5-8-20-4.5-18.5-5.5-18.5-8-11.5-8-3.5-4.5-16.5-15.5-15.5-4-8-5-14-15-8-6-6 0-12 7-6 2-4 0-4-1.5-7-5.5-3-1.5-16 1-12-3-4.5 1.5-7.5 10-38 17.5-28 30-10 6-6 6.5-10 5-6 4-8 13-14 13.5-18 12-8 7-22 9-12 9.5-6 3-24 5-20-8-8-1-22 0.5-16 5-4-1.5-8-5-8-2.5-8 0.5-10 4-8 2-6-1.5-8-4.5-26-20.5-7.5-4.5-1-4 5.5-16 2-16 3-8 6-4 18-2 11.5-6 6.5-7.5 5.5-10.5 5.5-8 7-6 10-7 5-7 0-4-1-2-4-3-22-2.5-4-1.5-3.5-5-1.5-6 0-12 3.5-12 11.5-18 4-10 4-6 26-17.5 14-3.5 36-4.5 12-5.5 8-6 8-13.5 6-7 16-12.5 12-7.5 4-1.5 10 2 8-0.5 28-13.5 28-10 18 2 4-0.5 20-18.5 24-19 20-9 8 0 10 1.5 8-3.5 5-4 3.5-4 1-4-1.5-8 1.5-4 17-26 9.5-7.5 16-9.5 18-17.5 10-4.5 12-3 2-2 2.5-8-0.5-12.5-5-13.5-4.5-6-4.5-4-12-6-14-2.5-16-1-12 1-24 6.5-32 4-20 3.5-34 8.5-52 17-16 1-18 3.5-84 31.5-18 5.5-18 7.5-32 7-14.5 9-39.5 19-14 4-6 0.5-5.5-1.5-3-2-3-4-1.5-6-1.5-2 6-36 1.5-4 3-2.5 2-0.5 0.5-3 1.5-1.5 2 0 2-2.5-1.5-2 3.5-1.5 0.5-2.5-8.5-8.5-14-11.5-8-4-28-10-14-9-9-11-10-18-17-44z"/>
<path fill="#ffe000" d="M922.5 268l782.5 0 0 544.5-16-3-18-1.5-15.5-4-10-6-10.5-12-4-2.5-26-9-36-9.5-16.5-7-8.5-6-5.5-10-3.5-3.5-18-9.5-14-4-8-3.5-6-5.5-10.5-12-7.5-5.5-6-0.5-12 6.5-8 1.5-4-1-8-5.5-4-1-16 0.5-12-3-5.5 2-6.5 8.5-6 5-32 15-28 30-10 6-6 6-16.5 9.5-3.5 4-4 8.5-14 14-18 11.5-8 6.5-22 10-12 8.5-6 3.5-24 4-20-7-8-1-20 0-18 2.5-18-6-6-1-6 1-10 3.5-6 1-6-1-8-4.5-13.5-10-14.5-16 0-8 4-20 1.5-6 4.5-6 20-4.5 14-8 2-2.5 6.5-13 5.5-8 6.5-6 11-8 6.5-8 0.5-4-2.5-4.5-6-3-14-2.5-8-3-4-5-1.5-6 0.5-10 3-10 5-8 5-6 9.5-16 11.5-10 15-9.5 12-3 34-5.5 14-6 9-6 9-12.5 8-8 10-7 10-5 6-2.5 18-4.5 28-14 28-9.5 6 0 12 2 4 0 4-2.5 26-24 16-12 18-7.5 18 0.5 4-1 8-4.5 5-4 2.5-4 3.5-16 15-22 22-16.5 13.5-15.5 6.5-5.5 8.5-4.5 11.5-3.5 3.5-2.5 3.5-6 1-4 0-8-1-8-3-9.5-4-6.5-6.5-6-7.5-4.5-10-3-14-1.5-16-1-14 1-80 17-28 7.5-50 16.5-24 2.5-12 2.5-48 17-56 18.5-16 7.5-30 7-18 10-34 15-8 2-6 0-4-1.5-2-1.5-2-3-0.5-4 0-8 1.5-10-1-2 2-12 2.5-12 3.5-0.5 2-2.5 6-0.5 0-2.5 4-4 1.5 0-16.5-14-13-8-10-4.5-32-10.5-8.5-5-7-6-7-8-9-16z"/>
<path fill="#ffd900" d="M925.5 268l779.5 0 0 543-14-2.5-20-1.5-12-3-6-2.5-6-4-10-12-4-3-26.5-8.5-36-10-15.5-6.5-7.5-5.5-2.5-4-3-8-3-3-20.5-9-15.5-4-8-4-6-5-12-13.5-6-4.5-6-1-12 6-6 1-4-1-12-5.5-6-0.5-12 1-14-3-4.5 2-8 10-5 4-30.5 15-18 20.5-10 10.5-11.5 6-6 6-16.5 10-3 4-4 8-14 14-27 18-20 9-12 8.5-6 3-24 4-20-6-8-1-20-1-14 2-6 0-22-6.5-6 0.5-12 3.5-6 0.5-6-2-8-4.5-10-8-10.5-14-1.5-8 2.5-18 2-6 3.5-4.5 18-5.5 16-9 7.5-15 5.5-8 6-6 13-10 6.5-8 1-6-3-4-6.5-3-16-4-6.5-5-3-6 0-10 3.5-10 22-30 14-12 8-4.5 11.5-3.5 32.5-6.5 18-7.5 6.5-4 14.5-16 9-7 36-16.5 26-13.5 30-10.5 6 0 14 2.5 4-0.5 34-30.5 8-5.5 8-4.5 14-4.5 12 0.5 6-0.5 10.5-5.5 5.5-4 5-6 4-14 11-18.5 16-11.5 8-6.5 12-17.5 6-6 8-4.5 15-5.5 4.5-4 2.5-4 1.5-6 0-8-1-10-3.5-10-4.5-6-6-6-8.5-4.5-6-2-12-2-22-1.5-14 0.5-90 20-70 22.5-24 2.5-12 2.5-52 18-50 13.5-18 6.5-0.5 2-31.5 9-16 9-2-0.5-6 3-14 5-10 2.5-5.5 0-4-2-1-2-2.5-14 3.5-26 1.5 0 1.5-2 0-2 2.5-2.5 4-0.5 2-2 2-0.5 2-2 2-1-18-13.5-2 1-2.5-1-13-8-8.5-4-34-11.5-8-4-6.5-4.5-7.5-8-10-15.5zM1489 453.5l-2 1-4 3.5-1.5 6 0.5 6 5 5 8-6 2-5-1.5-6-2.5-4z"/>
<path fill="#ffd200" d="M928.5 268l776.5 0 0 541.5-14-2.5-20-1.5-12-3-11.5-6.5-9-12-3.5-2.5-62-18.5-17-7-3.5-2-3.5-4-3.5-10-3.5-4-20-8-15-4-10-4-5.5-4-12.5-14-8-6.5-6-1-12 5-6 1-16-6.5-18 0.5-14-2.5-6 2-7.5 10-5 4-25.5 13-6 4-16 19.5-10 10-12 6.5-6 5.5-17.5 11.5-7 12-13.5 13.5-26 16.5-20 9.5-18 11.5-24 3.5-20-5-12-1.5-16-1-20 1.5-24-7-16 4-6 0.5-6-2-8-4-10-9.5-7.5-12.5-1-10 3-14 1.5-4 4-3.5 12-5 20-11.5 6-13.5 5.5-8.5 6.5-7 16.5-13 6-8 1-4-2-4-5.5-3.5-14-3.5-8-3.5-4.5-5.5-1.5-6 1.5-10 4.5-8 19-24 7.5-8 7-6 6.5-4 8-2.5 16-3 18-5 18-7.5 10-6 12-12 8-6.5 21-9.5 39-22 32-12 7.5 0 12.5 3 6-1.5 30.5-27.5 15.5-10.5 14-5 14 0 6-0.5 14-8 9.5-8 8.5-19 10-16 10-6 2 0 6.5-5 3.5-4.5 7.5-15.5 4.5-6 10-7.5 17.5-6.5 5-4 2.5-4 2-8-1-18-2.5-8-5.5-9.5-7-6.5-11-5.5-12-2.5-26-1.5-10-0.5-14 1.5-30 6.5-54 14-66 21.5-34 5-20 5.5-38 13-52 10-26 8.5 0 1.5 2 1-15 4-21 11-1-1 1-2.5-12 5-10 1-2 1-2.5-0.5-5.5-8.5-1.5-7.5 0-10-1-8 2.5-3 2.5-1 1.5-2 2-0.5 2-2.5 4 0 2-3 2 0-18-12-2 0.5-2.5-0.5-9.5-6-18-8-30-9.5-12-5.5-7-5-8-8-9-12.5zM1487 445.5l-6 4.5-5 10-1 6 0 8 1.5 2 4.5 4 6 1 10-11 2.5-8-0.5-10-1.5-4-4.5-2.5z"/>
<path fill="#ffcb00" d="M931.5 268l773.5 0 0 540.5-14-3-20-1.5-10-2.5-12-6-4.5-5.5-5-8-2.5-2-40-11-26-8-11.5-5-4.5-2.5-4-3.5-4-12-4-4-10-4-24-6.5-12-4.5-8-6.5-14-16-6-3.5-6 0-10 4.5-4 0.5-4-1-12.5-5-19.5 0.5-16-3-4 1-2 2-7 9.5-5 4.5-30 16-16 20.5-10 10.5-4 2.5-8 3-7.5 7-18 12-6.5 12-12 12-28 17.5-18 9-18 10.5-24 3.5-20-4-16-2-12-1-14 1.5-8-0.5-22-7-16 4-6 0-6-1.5-8-4.5-7.5-7.5-6-10-2-10 1.5-12 3.5-6 4.5-4 10-4.5 12-9 6-2.5 2-2 6-14 6-8 5.5-6 17.5-14 7-8 2-6-2-3.5-6-3-16-4.5-6-3-4.5-4-1.5-8 2-8 2-4 30-36 8-6 6-3 20-4 22-8 16-7 7-4 19-16.5 8-4.5 14-5.5 22-15.5 16-8.5 26-10.5 6-1.5 8 0 12 3.5 6-0.5 31-28.5 13-9 16-5.5 16-0.5 4-0.5 21-12.5 6-6 15-25.5 8-9 6-0.5 4.5 1 0 6-4.5 14-0.5 10 2.5 8 3 4 5 3.5 6 1.5 4-3.5 10-15.5 4-12 1.5-12-1-2-2.5-2.5-4-2-12-3-2-1.5-1-7 2.5-12 5-10 8.5-8 9-4 13.5-4 5.5-4 2.5-6 1-6 0-10-1.5-12-3-10-6-8-8-6.5-10-4.5-14-3-34-1.5-14 1-30 6.5-32 9.5-22 4.5-68 23-36 5-56 17-22 3.5-28 1.5-12 2-32 10 2 0.5 2.5 3.5-14.5 6-2-4.5-18 3-3-2.5-1-5-2-2.5-4-10.5 4-2 0-4 2-0.5 2-2 6-0.5 2-2.5 4-0.5-18-9.5-4-1-2 1-8-3-8.5-5.5-11.5-5.5-40-11.5-10-5-8-5.5-9-8.5-9-13z"/>
<path fill="#ffc400" d="M934.5 268l770.5 0 0 539-14-3-22-2-8-2-11.5-6-4.5-6-4-8-2-1.5-40-10-36-12.5-9.5-6-4.5-13-3-3-9-4-26-7-14-5-7-6-13-15-8-5.5-6 0-10 3.5-4 0.5-14-5.5-24 0.5-16-4.5-4 2-8 11.5-6 5.5-12.5 7-11.5 5-6 4-10 15-8 9.5-8 7.5-10 4.5-17.5 14.5-8.5 4.5-2.5 3.5-3.5 8-12 13-10 6.5-54 30-12 2-14 1-36-5.5-10-1-14 1.5-10-1-18-7-6 0.5-12 3-6 0-6-1.5-8-4-7.5-9.5-4-10-0.5-10 2-7 4-5.5 10-7 12-10.5 8-4 6-12.5 8-11.5 6-6 22-18 5-6 2-4 0-4-3-2.5-8-2.5-14-3-5-2-4.5-4-2.5-6 0.5-6 3.5-6 18-19 10-15.5 10-8 20-4.5 46-20 20-16.5 10-5.5 14-5 14-12 20-12 12-4 16-8 6-1 6-0.5 14 4.5 6 0.5 4-2.5 6-7 17.5-16 12.5-10 8-4.5 10-3 8-0.5 10 0.5 4-1 26.5-15.5 4.5-4 5-7 4-2.5 4 0 9 15.5 7 7.5 10 5 4 0.5 1.5-1 2.5-4.5 2.5-7.5 4.5-10 14-28 0.5-6-0.5-2-2.5-2-14.5-2.5-6-4.5-2-7 1.5-10 3-6 8.5-8 11-4.5 14-1.5 4.5-4 2.5-6 1-8-0.5-14-1.5-14-3-8-5-6-10-8-12-5.5-12-2-34-1.5-15.5 1-34.5 7-20 7-30 7-68.5 23-33.5 5-56 16-28 3-44-2-20 6-14 6-2-7.5-4.5-0.5-2.5-2 0-2 0-2 3-0.5 2-2 2-0.5 2-3 1.5 0-23-10-9-2-21.5-10-38-9.5-10-3.5-10-5-10-7-7-7-8.5-12-12.5-22.5zM1090.5 400l2.5 0 0 1z"/>
<path fill="#ffbd00" d="M937.5 268l767.5 0 0 537.5-14-3-22-2-8-2-10-5-5.5-7.5-2.5-6.5-4-3.5-18-3-20-5-38-13.5-8.5-6.5-3.5-11.5-2-2.5-14.5-6-21.5-5.5-16-6-7.5-6.5-12.5-14.5-4-3.5-4-2.5-6 0-12 3.5-4-0.5-12-6-24 2-6.5-2.5-11.5-6.5-2 0.5-2 2-6.5 14-3.5 4-6 5-9 5-13 4-6 3.5-3.5 4.5-8.5 16-10 11-4 3-10 4-10 8.5-6 6.5-9.5 5-2.5 3-3.5 9-11 12-9.5 6-12 6-42 24-12 2-12 0.5-38-5-10-0.5-12 1-10-0.5-6-1.5-14-6.5-8 0.5-12 3-8-1-8-3.5-6.5-8.5-3-10-1-10 2.5-6 21.5-22 8.5-4.5 8-14.5 10-13 27-22 7.5-8 4-6 0-2-1-2-3.5-1.5-28-5-5-3.5-2.5-6 1.5-6 2-4 19-18 8-16 6.5-6 4.5-2.5 10-1 7.5-2.5 14-8 31.5-14 19-15 6-4 10-4.5 10-2.5 12.5-12 14.5-10 9-4 8-2 16-8.5 12-1.5 18 7 4-1 2.5-2 6-8 25-22 4.5-3.5 10-5 16-2.5 12 2 16-12 22-8.5 6 1.5 16 13 18 11.5 4 1.5 2-4 0.5-20 4-12 9-16 8.5-11.5 1.5-4.5 0.5-6-2-8.5-2-2-14 3.5-4-1-2.5-2-3.5-6 0.5-10 2-4 5.5-6 12-6 2-0.5 6.5 2.5 2.5 4-3.5 10 0.5 4.5 4-0.5 4-3.5 6.5-18.5 3-14 0-18-1.5-16-4-9.5-3.5-4.5-12.5-9.5-12-6-12-2-14 0.5-30-1-16 1.5-30 7-18 6.5-28 7-70 23.5-30 4.5-44 12.5-16 3.5-26 1-36-8-24-1-14-3-14-5-7.5-2-14.5-7.5-14-5.5-42-8-16-6-16-11.5-10-11.5-11-18z"/>
<path fill="#ffb500" d="M940.5 268l764.5 0 0 536-14-3-22-2-8-2-9-5-4.5-6-3.5-8-5-4-18-2.5-20-5-36-13-8-5.5-2.5-8-3.5-6.5-8-4-20-6-10-2-16-6-6.5-5.5-15.5-18-6-4-2-0.5-6 0.5-10 2.5-4-1-10-5.5-26 2-7.5-4-6.5-10.5-2-1.5-6 2-4.5 4-1.5 10-2.5 8-1.5 2.5-6.5 5.5-9.5 5.5-12 2.5-9 4-23.5 30-15.5 13.5-10.5 6.5 1 4-1 2-7.5 2.5-4 3-1.5 2.5-2.5 8-6 8-6 5.5-8 5.5-12 5-42 24-12 2-12 1-46-5-14 0.5-12-0.5-10-4-8-4-8 0-12 2.5-6-0.5-9.5-4-4.5-8-2.5-10-0.5-8 3.5-6 7.5-7.5 11.5-14.5 6.5-3.5 2-2.5 6-10 12-16 32-26 7.5-8 4-6-1.5-3.5-2-1-34-4.5-1.5-1-2-6 3-8 17-18 8-16 7.5-7 10-1 8-3 14-9 32-15 18-14 8-5 10-4 10-3 12-11.5 16-11.5 8-3 6-1 18-9.5 8-1 4 1 8.5 3.5 7.5 5 2 0 6-4 6-9.5 28-24 10-5 16-2 4 1 8 6 2-0.5 3-3 3-6 6-6.5 10-4.5 10.5-1 11.5 5 16 9.5 8 6.5 14 16.5 2 1 2.5-0.5 1.5-2 2-6-4.5-22-0.5-14 3-12 8.5-12 9.5-10 2-4 1.5-4 1-18 2-4 6.5-8 5.5-16 3-20-1.5-34-6-12.5-18-13.5-12-6-12-1-14 1-28-1.5-18 2-32 7-16 6.5-28 7-36 12.5-36 10.5-30 6-42 12-18 3-22-0.5-39-10.5-35-3.5-34-14.5-16-5-24-2.5-20-3-14-6-16-11-10.5-12.5-10-16zM1509.5 396l3.5-0.5 1.5 0.5-2 4 0 4-4.5 12-5 5-2 1-4-3-2-3-0.5-8 6.5-8z"/>
<path fill="#ffae00" d="M943.5 268l761.5 0 0 534-16-2.5-18-2-10-2.5-8-4-4-5.5-4-8-6-5.5-18-2-18-4-36.5-14-7.5-6-3.5-8-4.5-6-10.5-4-27.5-8-16-6-6-5.5-16-18.5-6-3.5-8-0.5-10 2-14-6.5-18 1.5-8 0-4.5-3-7.5-11-2-1.5-4-0.5-6 1.5-4 3.5-2 4-3 16-7 7.5-10 6-12 2-8 3.5-6 6.5-14.5 18.5-13.5 14-6 4-10 2-2 2-2 2-1 8-7 6.5-4 11.5-10 12-8 5.5-15 6.5-39 22-12 2.5-12 1-12-0.5-26-3.5-10-0.5-14 0.5-12-1.5-16-8-8 0-12 2-6-1-6.5-3-4-6-2-6-0.5-10 2.5-6 16-22 8.5-7 20-26.5 32.5-26.5 6.5-6 5-6 0.5-4-2.5-4-4-1.5-22-5-4-2-2.5-3.5 0.5-4 14.5-20 5.5-11.5 6.5-6.5 11.5-3 6-3 16-11 31.5-15 18-14 8.5-5 8-3.5 10-2 22-20 8-4.5 14-4 14-8 4-1 8-0.5 10 4.5 8 5.5 4-0.5 6-5 6-9 16.5-15 9.5-7.5 10-4.5 8-1.5 6 0.5 10 5.5 6 0.5 5.5-3 6-10 3.5-4 7-2.5 6 0 14 5.5 16 9 7 6 10 12 4.5 4 4.5 1 4-1.5 2.5-3.5 2.5-8-6-32 2-14 7-10 10.5-10 3.5-5 2-5 1-18 2-4 6.5-10 6.5-16 3-18-1.5-36-3.5-10-4-6-18-13.5-12-6-12-1.5-16 1.5-28-1.5-18 2-31 7-19 7-28 7.5-45.5 15.5-22.5 4.5-12 4.5-62 16-18 2.5-20-1-16-4-26-8.5-40-8-16-8.5-10-3.5-18-3-22 0-10-1.5-12-2-8.5-3.5-7.5-3.5-10-7.5-10.5-11-10.5-16zM1506 400l1.5 0 0.5 2-1 4-2 3-2 1.5-2 0-1.5-2.5 1.5-4 2-2.5z"/>
<path fill="#ffa600" d="M947 268l758 0 0 532.5-18-3-16-1.5-8.5-2-5.5-2.5-4-3-8-13-6-5.5-18-1.5-18-4-27-10.5-11-6-10.5-14-3.5-3-8-3-30-9.5-16-6-6-5.5-14-17-8-5-6-1-12 1-14-5.5-18 1-6-0.5-4-2.5-10-11-4-2-4 0-5.5 1.5-4.5 4-2.5 4-3.5 16-4.5 6-9.5 6.5-16 4-6 3-6 6.5-14 18.5-14 12.5-6 2.5-6 0.5-4-1-8-4.5-3 1.5-0.5 2 2.5 14-0.5 4-3 8-3.5 12-8 10-8.5 6-17.5 7.5-32 18.5-10 3.5-18 2-14 0-24-3.5-24 0.5-12-2-16-7.5-20 0-4.5-1-4-2-3.5-3-2.5-5-1-6 0.5-6 2.5-6 12.5-20 17-18 11.5-16 37.5-30 6-6 2.5-4 0.5-6-3-4-22-8-2.5-2-1.5-4 2-8 12-20 4-5 5-3 13-5 18.5-13 29.5-15 26-18 8-4 12-3 20-18 10-6 12-3.5 14-7.5 6-1.5 8 1 16 9 6-1 5-4.5 7.5-10 13.5-12.5 10-7.5 8-4 6-1.5 6 0 14 5 7 0.5 7.5-4 9.5-11 6-1.5 6 1.5 12 7 4 0 7 4 20 18 5 3.5 6 1 6-3.5 4-7 1.5-8-1-8-4-12-1.5-8 0-6 1.5-10 5.5-7.5 12-10.5 4-5 2-6 0.5-13 1-6 8.5-14 8-18 2-18-1-36-4-10-5-6.5-18-14-12-6.5-12-1.5-20 1-28-0.5-18 2-25.5 6-24.5 8-27.5 8-38.5 13.5-14 3.5-14 2.5-18 6-54 14-20 2.5-18-1.5-16-3.5-38-13-14-2-2-2-8-3-18-9.5-2 0.5-10-3.5-14-1-32 1.5-14-2-8-2.5-14-7.5-12.5-11-12-16z"/>
<path fill="#ff9f00" d="M950 268l755 0 0 531-42-6.5-8-4.5-4-4.5-6-10-6-5.5-18-1-14-3-17.5-6-9-4-13-8-11-12-5.5-4-36-12-18-7.5-6-5.5-12-15-10-6.5-6-1-12 0-14-5-14 0.5-8-1-4-2-12-11-8-2.5-6 1-6 5.5-3 6-4 14-4 6-9 6-14 3.5-6 3-4 3.5-16.5 22-9.5 8.5-6 3.5-6 1-6-1-12-7-4 0-2.5 1-3 4-1 6 1 4 4.5 10 0 8-2 14-3.5 6-5.5 6-6 4-18 7.5-30 17.5-12 4.5-18 2.5-14 0-24-3-24 0-12-2-14-7-20-2-6.5-2-4.5-4-2-4 0-10 2-6 11-20 10-11.5 6-4.5 13-18 37.5-30 8.5-10 1-6-2.5-4-5.5-3.5-10-4-5-2.5-2-2-1.5-4 0-4 1.5-4 7-12.5 4-5.5 4-3.5 16-8 18-13 30-16.5 24-16.5 8-4 10-2 5.5-2.5 16.5-15.5 10-6 12-4 14-7.5 6-1.5 8 1 16 9 6-1 6-4.5 8-10.5 14-12.5 10-7 8-3 8-0.5 16 4.5 6 0 8.5-3 11.5-8 6-1 6 2 14 7 4 1 19 15 9 5.5 6 1 6-4 6-10.5 1.5-10-1-6-5.5-18-0.5-8 1-8 2-4 2.5-3 14-11.5 4-4.5 2-6 0-13 1.5-8 10.5-18 6.5-14 2.5-14 0.5-32-1-8-3.5-10-7-9-18-14.5-12-6.5-6-1.5-6-0.5-24 1-26 0-16 2-24 5-58 18-36 13-30 6.5-22 7-44 11.5-18 2.5-20-1-18-4-25-9.5-21-6-3.5-2-2.5-3.5-16-9-16-6.5-2 1-18-0.5-34 4-12-1-12-3.5-14-8-12-11-10-14z"/>
<path fill="#ff9700" d="M953.5 268l751.5 0 0 529.5-18-3.5-18-2-8-2-4-2.5-4-3.5-10-15-4-3-26-2-10-2.5-15-5.5-10-6-16.5-14-8.5-6-54-20-6-5-12-15-10-7-6-2-14-1-14-5-20-0.5-6-3-12-9.5-10-3-6 1-6 5.5-3 6.5-4.5 14-4 6-6.5 4.5-16 5-6 3-4 4-15 21.5-9 8-6 2.5-6 1-6-2-14-7-6 0-2.5 1.5-4 6-2 10 1 6 5.5 11.5 1.5 6.5-0.5 8-2 6-5 6-6 4-20 8.5-26 15-15.5 6.5-16.5 2.5-14 0-24-2.5-22 0-12-2-16-7.5-18-3-6-2.5-4.5-5-1-4 0-6 2-6 10-22 7.5-8.5 8-4.5 12-17.5 39-31.5 6-6 3.5-6 0-6-3-4-5.5-3.5-10-4-5-4.5-1.5-6 1.5-6 3-5 4-6 5-5 17-10 18-14 28-15.5 18-12.5 10-6 6-2.5 10-2.5 7-3 13-12.5 8-6 14-5.5 14-7 4-1 6-0.5 6 2 14 8 4 0 4-1.5 6-5 8-10 10-9 12-8.5 6-2.5 10-0.5 14 3 8 0.5 8-2 14-6.5 6-0.5 18 8 15.5 11 16.5 9.5 6 1 6-3.5 6-11 3.5-12-0.5-8-6.5-18 0-8 1-8 4.5-6.5 14-10 4.5-5.5 2-8-0.5-12 1.5-8 18-32 2.5-14 1-32-1-8-3-10-7-10-18-15-12-7.5-6-2-8-1.5-50 2-20 2-25 6-55 17-36 13-30 7-54 16-22 4.5-24-1-14-2.5-10-2.5-45.5-19.5-0.5-2-4-2.5-4-5-12-7-8-3-6-1-6 0-38 7-12 1.5-12-0.5-10-3.5-14-7.5-10-8.5-10-13z"/>
<path fill="#ff9000" d="M956.5 268l748.5 0 0 528-20-4-16-1.5-8-2.5-7.5-6-10.5-15.5-4-3.5-4-0.5-14 0.5-8-1-9-2-15-5.5-7.5-4.5-9-10-17.5-10-30-11-25.5-11-6.5-5.5-9.5-12.5-12.5-8.5-8-2.5-12-1-14-5-20-1-4-2-14-10.5-6-2.5-6-1-6 1.5-5 4.5-3.5 6-5.5 16-4.5 6-7.5 5-14 4-6 3.5-4 4.5-12 19-8 8-8 3.5-6 0.5-6-2-14-7.5-6-1.5-4 1.5-4 4.5-2 5-3.5 16 1.5 8 6 9 2 5 0.5 6-2 6-4.5 5-6 4.5-20 8-24 13.5-18 8-14 2-14 0-22-2-24 0-12-2.5-14-6.5-18-5-4-2-3.5-3-2-4 0-8 7.5-22 6-10 4-2.5 6-1.5 14-20 21-18 18.5-14 10.5-12 1-4-1.5-4-2-2-5.5-4-12.5-6-4-4-0.5-6 4.5-10 6.5-7 18-11.5 14-12 20-11 30-20 14-8 10-2 7.5-2.5 20.5-18 30-13 6-1 4 0 16 8.5 4 1.5 4-0.5 6-4 12-13 12-10.5 8-5 8-2.5 6-0.5 16 2.5 8 0.5 8-1.5 14-5 6-0.5 15 6 11 10 14 6 10 6 6 1 6-3.5 4-6 4-9.5 3-8 1-6-0.5-6-7-18-0.5-8 1-6 2-4 3-3.5 15.5-10.5 3.5-4 1.5-6-1-14 1.5-8 2.5-6 17-28 2.5-12 1.5-34-1-10-4-10-7-10-22.5-19-10-6-6-1.5-8-1-52 2.5-20 2.5-24 6-56 17.5-32 12-16 4.5-16 3-54 16.5-20 4-24-1.5-20-4-16-6-32-17.5-2-3-8-5.5-4-5-10-6-6-2-10 0-50 12-12 0.5-11-3-12.5-6-10.5-8-11-14z"/>
<path fill="#ff8800" d="M960 268l745 0 0 526.5-22-4.5-14-1.5-8-2.5-7.5-6-10-16-2.5-3-4-1-14 1-10-0.5-22-6.5-8-6-4.5-8-3.5-3-50-19-6-3.5-18-7.5-6-5.5-11-13.5-13-8-10-3-10-1.5-14-5-20-1.5-22-14-8-2.5-8 2.5-6 5-8 20-6 8.5-8 5-14 3-4 3-13.5 22.5-4.5 6-4 4-8 2.5-8-0.5-6-2.5-18-12-4 1-4 3-2.5 4.5-4 14-3 12-1 8 2.5 6 8 8.5 1.5 3.5 0 4-3.5 6-8 6-18 7-22 13-18 8.5-16 3-12 0.5-24-2.5-26 0.5-10-3-12-6-20-7-5.5-6-1-8 6-22 4.5-9 4-2.5 6.5-0.5 14-20 21.5-19 17.5-13 13-12 3-4 0-4-3-4-8.5-5.5-12-6-2.5-2.5-1.5-6 3.5-8 6.5-6.5 16-11 14-12.5 20.5-12 31.5-21 12-7 20-5 12-11.5 7.5-5.5 28.5-13 10-0.5 18 9.5 4 0.5 4-1 6-4.5 11.5-13 8.5-7.5 8-5 8-3 6 0 18 1.5 10-0.5 8-1 16-4.5 4 0.5 10 3.5 4 4 1.5 6-4 8 1 2 1.5 0.5 2 0 6-4 6-1 8 1.5 14 9 6-1 4-3 4-5 2-4.5 7-18.5 1-6 0-6-8-18 0.5-12 2-4 3-4 16.5-10 4-6 0.5-8-1.5-12 1-6 3-8 17.5-26 3-12 1-20 1.5-16-1-10-2.5-8-6-10-8.5-9-20-17-6-4-6-2-16-1-49.5 3-22.5 4-18 4-32 10-60 21-16 4.5-14 2.5-52 16.5-22 4-20-1.5-24-4.5-16-7-29-19.5-1-2-22-16.5-6-3-6-0.5-6 0.5-30.5 9.5-19.5 5-14 1-8-2-12-5.5-12-8.5-9.5-12z"/>
<path fill="#ff8100" d="M963.5 268l741.5 0 0 525-22-5-12-1-8-2-8-5-7-10-3-8-4-4-4-0.5-16 1.5-8-0.5-20-5.5-7-5-3-8-2.5-4-5.5-2.5-12-3-30-10-8-3.5-4-3.5-18-8-6.5-5.5-6-8-5.5-5.5-14-8-10-3.5-10-1.5-14-5.5-20-2-8-4-18-13-4-1-6 1.5-10 6-8.5 22.5-7.5 9-8 4.5-14 0.5-3 2-9 21.5-6 9.5-5 5-5 1.5-6 0-8-2.5-8.5-7-7.5-10.5-2-1.5-4 1-6 5-6 10-9 38 0.5 4 2 4 8.5 8 1 4-3 6-6 4.5-16 6-22 13-20 10-14 3-12 0-24-2-26 0.5-10-3.5-30.5-13.5-3.5-4.5-1.5-5.5 2-14 2-10 3.5-8 2-2 2-0.5 7 0.5 14-20 21-19.5 14-9.5 14-12 17-9 0.5-2-1-2-6.5-4-26.5-14-2-2-0.5-4 3-6 5.5-6 14.5-10.5 16-15 20-11.5 26-18 15-9 23-5.5 12-12 6-4.5 18-9 10-3.5 10-1 18 10 6 1 8-5.5 20-20 10-5.5 6-1.5 18 1 22-1 10-1.5 9-3.5 5-0.5 6.5 2.5 1 2 0.5 4-2 3.5-4 2-2-0.5-6-3.5-2 1.5 2 13 4 3.5 4 0.5 10-2 12-5 4-1 7 2 9 10 2 1 6-2 6-4 7-11 8-22 1.5-10 0-2-8.5-18 0-10 2-4 4-5 6-4 10.5-5 3-4 1.5-8 0-6-2.5-10 0.5-4 4-10 17-24 4-12 1-16 3-24-2-12-4.5-10-4-6-9.5-10-26-21.5-6-2.5-6-0.5-32 1-34 3-32 7-38 11.5-50 18-16 5-22 4.5-54 17.5-22 3.5-24-3.5-16-3-6-2.5-14-7.5-42-34.5-12-7-8 0-6 1-32 11.5-18 4.5-12 1.5-6-1-14-6-11.5-8-10-12z"/>
<path fill="#ff7900" d="M967 268l738 0 0 523.5-24-5.5-10-1-10-3-6-4.5-5-7.5-1.5-6-3.5-6-4-3-2-0.5-18 2.5-8-0.5-20-5.5-5-5-1-6.5-4-5.5-8-3-20-4.5-22-7-7-3.5-3-4-12-4-8-4.5-6-5.5-5.5-8-4-4-16.5-9-10-4-8-1-16-7-20-1.5-6.5-3.5-11.5-8-6-6.5-6-3.5-12 6.5-8 2.5-4 17.5-5 9.5-7 7-6 3-2 0-6-1.5-6-3-4 0.5-4 8 0.5 10-3.5 10-5 9-6 6.5-8-0.5-6.5-3-7.5-8 0-2-2-3.5-2 0-5-6.5-5-0.5-8 5-6 6-4.5 7.5-4 20-5.5 22 0.5 12 7.5 7.5-0.5 4.5-4 4-15.5 7-22 13.5-19 9.5-13 3-12 0.5-24-2.5-24 1-12-4-28-13.5-4-6.5-0.5-12 2.5-14 4-9 2-0.5 6 1 2-1 15-20.5 9-7 12-12.5 13-8.5 13-10.5 12-5 10-1.5 20 0 2.5-1 1.5-2-1-2-3-1.5-32-11-24-11.5-1-4 3.5-6 17.5-15.5 14-14 8-5 16-8.5 3-3 8.5-6 26.5-17 4-1 18-3 12-11.5 8-6 16-8.5 8-2.5 12-1.5 10 5 10 7 4 1 6-4.5 17.5-17.5 8.5-6.5 10-3.5 8 0.5 8 3 18-3.5 18 2.5 2 1.5-1 2-25 26.5-1.5 3.5 1.5 4 8 4.5 9 7.5 9 4.5 20-6 10 2 10 4 6 1 3-1.5 4.5-6 4.5-16 15-16 5-8 4.5-14 5-12 1.5-12-9-18 0.5-10 4.5-6 5-4 14-5.5 3-6.5 0.5-4-0.5-10-2.5-10 0.5-4 3-8.5 19-25.5 4-14 0.5-12 4-26-1.5-14-8-15-34-32-6-3.5-4-1.5-12-0.5-60 5-20 4-50 14-54 20-26 7.5-10 1.5-52 17-24 3.5-24-4-20-5-14-8.5-14.5-12.5-15.5-15.5-12-10-12-5.5-14 1.5-20 8.5-30 9-18 1.5-14-5.5-11.5-8-8.5-10.5zM1442.5 532l4.5-2 1.5 2 0.5 2-1.5 2-2.5 1-2-1-1-2zM1473 554l4 0 1 2-1 4-4 4-8 0-4-1.5-2.5 1.5-1-2 1-2 6.5-4z"/>
<path fill="#ff7100" d="M970.5 268l734.5 0 0 522-22-5.5-14-2-10-4-3-2.5-4.5-6-1-6-3-6-6.5-5.5-4-0.5-16 3-8-0.5-18-5.5-4-5-2-7-5.5-5-8.5-3-20-3.5-22-7.5-6-3.5-2-2.5-14-6-6.5-4-6-6-5.5-7-6-5-18-10-8-3-8-2-14-6-20-2.5-6-2.5-11.5-8-4.5-7-4-4.5-6-1-4 1-8 5-10 4.5-2.5 4-4 16-4 6-5.5 5.5-6 2-12-2.5-4 1-3 2-3 4-2.5 6-0.5 6 0.5 4-1.5 8-4 7-4 3.5-2 0.5-2-1-2-2.5-1-3.5-5-4-6-4-12-5-4-0.5-5 1.5-6 4-5 4.5-6 7.5-2.5 6-2.5 18-5.5 24-0.5 10 2 10-0.5 2-4 4-30.5 19.5-18 9-12 3-12 0.5-24-2-24 0.5-12-4-18-8.5-6.5-4-4.5-6-1.5-10 2-16 2.5-8 8 1 2-1 15.5-20 10-8 10.5-11 28-20.5 8-2.5 8-1.5 24 0 4-1.5 3-3 0.5-4-3.5-4-22-7-20-8-7.5-5-3.5-4 0-2 5.5-8 22.5-24 9-6 16-7.5 10-9 28-17.5 22-4 12-11.5 8-6 14-7.5 10-2.5 10-0.5 8.5 4 11.5 8.5 6 0.5 26-23.5 6-3.5 8-1.5 6 2 12 7.5 1 6-1.5 12 1 12 7.5 10 11.5 10 6.5 2 8 0.5 20-6.5 10-1 18 0.5 4-1 3-2.5 4.5-6 6-18 12-16 5-8 4.5-14 4.5-10 1.5-14-8.5-18 0.5-8 3-4.5 4-3.5 4-2.5 10-4 2-1.5 2.5-4 1.5-8-3.5-22 3.5-10 18-24 5-14 1-14 5-26-1.5-14-6-14-2.5-4-33-31-10-6-6-1.5-8 0-62 6.5-20 4-52 15-54 20-24 6.5-10 2-52 17-18 3-6 0-38-8-14.5-7.5-14-12-23.5-25.5-6-5-8-3.5-6-2-6 0-12 3.5-18 8-18 6.5-14 3.5-14 0.5-14-5-10.5-7-9.5-11z"/>
<path fill="#ff6900" d="M974.5 268l730.5 0 0 520.5-36-8-10-4.5-5-6-2.5-8-2-4-4.5-4.5-4-3-6-0.5-16 2.5-10-1-12.5-5.5-5.5-10.5-4-3.5-3.5-2-8.5-2.5-20-3.5-22-7-8-6.5-17.5-8.5-4.5-4-10.5-12-21.5-12.5-32-13-18-3-8.5-3.5-5.5-4-9-14-7-4-8 2-20.5 12-4 6-4.5 14-5 5.5-6 3-14 1.5-6 3-5.5 7-6.5 14.5-3.5 3.5-2.5 1-6-0.5-16-5-8-1-9.5 3.5-10 8-5 6-2.5 6-3 22-4.5 22-2 18-1.5 4-9 8-23 16-14 7-12 3-12 0.5-24-2-22 1-12-3.5-16.5-8-6.5-4-5-6-2-8 1-16 1-5 1.5-3 4.5 0 4-1 16-19 11.5-10 10.5-10.5 26-18.5 8-3 8-1.5 20 1 4-0.5 6-2 3-3 2.5-6-0.5-2-3-3-25.5-9-17.5-8-5-4.5-1-3.5 0-4 6.5-10 14.5-16.5 8-5.5 16.5-8 11.5-10 26-16 22-4 20-17.5 10-5.5 8-3 8-1.5 8 0.5 8 4 10 7.5 6 1.5 6-2 16-14 6-4 4-2 6-0.5 4 1.5 8 5 3 16 3.5 10-0.5 4 5 10 3 2.5 2-1 2 0.5 8 6 6 1.5 8 0.5 4 2.5 4 0.5 8-4 14-4 24-3 5-2 4.5-4 3.5-6 5.5-18 15-22 10.5-26 1-14-7-16-1-4 1-4 2-4 4-3.5 14-7.5 4-5 2-8-3.5-22 1.5-6.5 4-7.5 16.5-22 4.5-12 2.5-18 4.5-22-1-16-5-14-5-8-31-29.5-6-4.5-6-2.5-6-1.5-10-0.5-60 7-22 5-50.5 14.5-53.5 20-36 9.5-52 17-14 2.5-10 0.5-36-8.5-13.5-7-6.5-5-9-9-20.5-26-5-4-7.5-4-10-2.5-8 0.5-12 4-18 9-18 6.5-14 3-12 0.5-14-4.5-9.5-6.5-9-10z"/>
<path fill="#ff6100" d="M978 268l524.5 0-55.5 7.5-22 5-54 15.5-52 19.5-38 10.5-32 11-22 6.5-16 2-10-1.5-26-7-8-3-8-4.5-8-7-7.5-8.5-17.5-26-5-4.5-8-4-10-2-12 0.5-12 5-20 10-16 5.5-14 3-10 0.5-12-3.5-10.5-6.5-9.5-10zM1514.5 268l190.5 0 0 518.5-34-8-10-4-4.5-4.5-3-8-4-6-8.5-7.5-6-1-16 2.5-10-1-9.5-5-6.5-10-5.5-4-12.5-4-24-4.5-18-6-7-5.5-18.5-10-14.5-16-22-12.5-30-13.5-23-6 0-2-3-2-5.5-6-3-6-3.5-10.5-2-2-4 0-6 1.5-4 2-26 16.5-4 4.5-6 13.5-3.5 4.5-4.5 3-12 3-8 3.5-4.5 4.5-9.5 14-4 3.5-6 1.5-20-2.5-6 0.5-11.5 5-9.5 8-5 6-2.5 6-2.5 30-8.5 34-7 8-21.5 16.5-14 7-14 3.5-12 0-20-2-20 1.5-6-0.5-8-3-21.5-11-6-6-2-6-0.5-10 2-12.5 8-4 4-5 14-14 10-8.5 12-12 22-15.5 6-3 6-2 8-1 16 2 6-1 8.5-3.5 5.5-6 0.5-6-2.5-4-6-3-16-4.5-10-4.5-10.5-6-3-4-2-4 1-6 3-6 5.5-8 10-9.5 22-12 12-9.5 24-15 6-2 14-2 4-1 16-14.5 10-6.5 12-4.5 12 0 6.5 2.5 11.5 8.5 8 2 4-0.5 6-2.5 16-11 4-1.5 6 0.5 7.5 4.5 8 22-1.5 1.5 0 1.5 4.5 9 4 2 2.5 4 5 11.5 8 0.5 24-4 6 1.5 12-6 30-7.5 7.5-4 4-4 2.5-5 4.5-17 15-24 10.5-24 1-6 0-10-6-14-0.5-8 1-2 4.5-5.5 14-8 4.5-6.5 1.5-8-3-20 0.5-6 3.5-8 15-20 5-10 3-8 7.5-42-0.5-10-2-10-4.5-10-5.5-8-9-10-22.5-20-9.5-5.5z"/>
<path fill="#ff5800" d="M982 268l498 0-35 5-28 7-50 15-50 19-36 10.5-52 16.5-16 2.5-12-2-24-6.5-8-3-8-5-8-7-7-8-15.5-28-5.5-5-8-3.5-14-2.5-10 1-8 2.5-26 13.5-14 5.5-10 2.5-12 1-12-2.5-10-5.5-9.5-9zM1529 268l176 0 0 517-32-8-10-4.5-4-3.5-4.5-9-5-6-6.5-6.5-4-2-6 0-14 2-8-1-8-4-8-10-6-3.5-16-5-28-5.5-10-3.5-24.5-15-12.5-14-5-4-26-15-40-19-10-8-1-4 1-4 8-7.5 12-3.5 4 0.5 2-1.5 3 0 7-3.5 26-8 13.5-6.5 5.5-6 6-22 15-24 11-24 0.5-6-0.5-8-5-16-0.5-6 4.5-7 13.5-9 4.5-6 2-10-2.5-20 1-8 4.5-8 13.5-18 7-16 3-16 5-18 1-10-0.5-14-3-12-5-10-10-12.5-18.5-17.5-8-6zM1298.5 568l8.5-0.5 6 1.5 14 9.5 8 3 10-1.5 18-7.5 8 0.5 2.5 1 3.5 4 4 8.5 2 5.5 0 5.5 2 4.5 3 2 0.5 2 1 6-2 6-3 4-6.5 6-17 12-4.5 4-11.5 18-6 4-12 4.5-6 3.5-4.5 4-7.5 10.5-4 4-4 2-4 1-18-1-8 1-12 5.5-11 9-3.5 4-2.5 6-2 32-8 30-3.5 6-3.5 4-22 18-12 6-14 3.5-12 0.5-20-2-18 1-8-0.5-7-2.5-12.5-6-9.5-6-5-6-2-6 0-10 1.5-8 6.5-5 4-5.5 39-35.5 20-14 8.5-4 10.5-1.5 16 2 6-0.5 12-6 5.5-6 1.5-6-2-4-2.5-2-4.5-2-22-7-8-4-7-5-3.5-6-0.5-6 3-8 6-8 8-7 20-11 14-10.5 10-5 12-8 6-2.5 18-3.5 4-2.5 16-14 10-5.5z"/>
<path fill="#ff5000" d="M986.5 268l472 0-19.5 3.5-28 8-47 14.5-45 17.5-38 11-52 16.5-16 2.5-12-2-24-7.5-8-3.5-8-5-6-6-7.5-9.5-12.5-28-6-5-8-3.5-12-2.5-10 0-4 0.5-12 4.5-26 14.5-18 6-14 1-11-1.5-9-4.5-8.5-7.5zM1538.5 268l166.5 0 0 515-28-7-12-5.5-4-3.5-11.5-15-6.5-6.5-4-2.5-4 0-16 2-7-1-7-4-7-8-6.5-4-24.5-7-24-5-10-3.5-22.5-14.5-10-12-4.5-4-51.5-30-13.5-10-1-2 0-4 1.5-4 5.5-4.5 4-2 2 1 6-4 24-8.5 21-10 6.5-6 1.5-4 1.5-12 2.5-8 16-26 10.5-20 0.5-10-2-10-3.5-12 0.5-6 4-6 13-9.5 4.5-6.5 1.5-10-2.5-20 0.5-6 4-8 15-20 7-16 2.5-14 5.5-18 2-10 0-14-3-14-5-12-7-10-17.5-18zM1292.5 572l8.5-2 8 1 6 2.5 11.5 8.5 6.5 2 12-0.5 20-3.5 2 0.5 6 5 5.5 10.5-0.5 4 2 4 2 2 0.5 4-1.5 8-8 9.5-19.5 14.5-11 16-7.5 5.5-10 4.5-6 4-6 6-6 8-4 3.5-8 3-16 0-12 2.5-13.5 7-10 8-3 4-2.5 6 0 6 1 14-0.5 12-7.5 25.5-3 6.5-4.5 6-20.5 18.5-12 6.5-14 3-12 0.5-20-2-16 1.5-14-2.5-12.5-5.5-9.5-6-5.5-6-2.5-6 0-12 2-6 8-9.5 6.5-4.5 35.5-32 18-12.5 8-4 12-1 12 2.5 6 0 15.5-7 5.5-4 3-4 1.5-4-0.5-4-3-4.5-7-3.5-15-3.5-10-4-8-4.5-5.5-6-2-6 0.5-6 2.5-6 4.5-6 7.5-6 18.5-10.5 16-11 10-4.5 12-8 6-2.5 12-2 6-2 18-15.5z"/>
<path fill="#ff4800" d="M990.5 268l97.5 0-7 3.5-22 13-20 7.5-6 0.5-14-1-10-3.5-9-8zM1125.5 268l318 0-70.5 21-52 19.5-18 5-50 16.5-26 8-14 1.5-12-2.5-26-8.5-6-3-7.5-5.5-5.5-6-7-10-7-22-3-5.5-5.5-4.5zM1548 268l157 0 0 513.5-26-7-12-5.5-5.5-5-16.5-19-6-4.5-18 2-8-1-6-3.5-7-8-5-3-38-10-14-2.5-10-3.5-8.5-5-13.5-9.5-8-10.5-6-5.5-15.5-8.5-32.5-22-8-7.5-1-2.5 0-2 2-4 3-1 6-6 20-8 12-7 12-5.5 6-4.5 3-4 1.5-6 0-10 4-10 14-22 11.5-20 0.5-8-5-24 0-6 4-6 12-10 4.5-6 1.5-10-1.5-16 0.5-12 4.5-8 14-20 8-18 1.5-10 5-14 3.5-16 0.5-16-2.5-14-4-12-8-12-13-13.5zM1293.5 574l7.5-1.5 8 1.5 4 2 10 8.5 6 2.5 8 0.5 20-1 8 2.5 4 3.5 5 7.5 0 4 2 2 1 4-1.5 8-6.5 8-20.5 16-12 16-19 12-14.5 15.5-8 3.5-18 1.5-12 3-13.5 6.5-9.5 6-4.5 4-2 4-1.5 6 3 20 0 10-4 16-4 10.5-5 9.5-11 12-10 9-10 5.5-18 4.5-10 0-20-2-16 1.5-14-2.5-12-5.5-9-6.5-5-6-2-6 0-10 2-6 6-9 8-4.5 37-32.5 7-4 8-6 10-5 10-1 14 3.5 6-0.5 20-9.5 5-3.5 2.5-4 1.5-8-1-4-2-2.5-8-3-22-4.5-10-5-7.5-7-2-4-1-8 2-6 5-6 5-4 35-22 9.5-3.5 14-9.5 6-2.5 12-1.5 6-2.5 17-14.5z"/>
<path fill="#ff4000" d="M995.5 268l85 0-23.5 14.5-22 7-14-1.5-8-2-8-6.5zM1135.5 268l297.5 0-62 19-50 19.5-18 4.5-50 17-26.5 8-13.5 1.5-12-3-26-9-12-8-3.5-3.5-8-12-7-26-3.5-4zM1557 268l148 0 0 511.5-24-6-12-6-6-5-20-22-4-2.5-16 1.5-8-0.5-5.5-3-7-8-3.5-2-14-2.5-30-9-18-3.5-10.5-5-13.5-10-11.5-14-19.5-12-15.5-12-13.5-12-2.5-4 0.5-6 4-5 18-9 12-8.5 12-5.5 8-6 1.5-2 1.5-6 0-12 3.5-10 25.5-40 1.5-10-5.5-24 0-3.5 5-8.5 11-9 4.5-7 1-12-1.5-12 0.5-12 5-10 10.5-14 6.5-12 5-12 1.5-10 6-14 3-12 1.5-14-0.5-12-3-16-4-10-7-10-9.5-10zM1296.5 576l6.5 0 6 1.5 12 11.5 4 2 22 0.5 10 2.5 6 3.5 4 4.5 2 2.5 2.5 7.5-0.5 4.5-3.5 5.5-22.5 17-12.5 17-17.5 12.5-13 13.5-3 2-6 2-26 4.5-26 11-8 1.5-2-0.5-1-2.5 0-16-1-4-4-2-20-1.5-12-2-9.5-4.5-6-6-4-8 0-6 1.5-4 6-7 38-24 8-2.5 10-7 6.5-3.5 21.5-5 7-5 11-10.5 8-4zM1222 708l5 0 1.5 2 2 16 4 14 0.5 14-7 20-6.5 12-10.5 12-10 9-8 4.5-18 4-12 0-20-2-14 1.5-12-2-11.5-5-8.5-6-6.5-8-1.5-4 0.5-12 5.5-12 8-3.5 38-32.5 6-3 8-7 10-5 8-1 4 0 8 3.5 8 0.5 16-7z"/>
<path fill="#ff3900" d="M1000.5 268l74 0-18.5 12-11 2-8 4.5-22-4-8-7zM1143 268l282 0-54 17-50 19.5-20 5-48 16.5-28 8.5-12 0.5-12-2.5-26-10-11.5-8.5-8.5-12-3.5-12-2-14-2.5-4zM1566.5 268l138.5 0 0 510-24-6.5-12-6.5-6-5-12-12-10-12-2-0.5-16 1.5-8-1.5-6-4.5-6-6-26-5-22-7-20-4.5-10-4.5-12-10-8.5-12-5.5-4.5-10-5-6-4.5-14-12-11-14-0.5-2 1.5-3.5 3-2.5 15-10.5 10-8 12-6 9.5-7.5 2.5-8-0.5-12 2.5-8 6-10 14-20 7-12 0.5-10-3.5-14-1.5-12 5.5-9 10-8.5 5-8.5 0.5-12-2-14 1.5-10 4-8 10.5-14 6.5-12 5.5-12 2-12 5-10 4-12 3-16 0.5-12-2.5-20-6-14-11.5-14zM1291.5 580l9.5-1 7 3 11 16 4 4 2 0 12-5.5 10 1 9.5 6.5 8.5 10-0.5 2-4.5 6-7 5.5-12 5-4.5 3.5-2 2-1.5 8-5 8-25 20-2 2.5-10 5-26 7-20 6.5-4 0.5-3-1.5-1.5-4 4.5-14-2-2.5-4-1-18 2-10 0-12-1.5-10-5-5.5-6-3-6-0.5-6 1-3 6-7 24-16 14-8 6-1.5 10-7 8-4 22-5 16-14zM1209.5 714l9.5 0.5 5 5.5 8.5 20 1 12-4 14-9 18-10 12-9.5 9.5-8 4.5-18 4-12 0.5-20-2.5-14 1.5-10-1.5-13.5-6-7.5-6-6-8-1-2 0.5-12 3.5-10 1.5-2 6.5-1 14-13 16-12 10-9 6-2 7-7 9-5 10-1 10 3.5 8 1.5z"/>
<path fill="#ff3300" d="M1006.5 268l61.5 0-13 8.5-10 1.5-10 3.5-10-1.5-8-2.5zM1148.5 268l268.5 0-48 15.5-50 19-18 4.5-48 17-28 8-12 1-12-3-24-9.5-11.5-8.5-8-12-2.5-10-2.5-16zM1575.5 268l129.5 0 0 508.5-23-6.5-13-7.5-16-14.5-12-14-20-0.5-6-2-8.5-7.5-3.5-1.5-16-1.5-8-1.5-24-8.5-20-4-7-3-13-10.5-10-13.5-6-4.5-10-5.5-7.5-6-9-10-3.5-6-1.5-4 0.5-6 5-6 15.5-14 12.5-7 8.5-7 3.5-10 0-10 3-10 5-9 12.5-17 7.5-13 1-3 0.5-10-3-14-0.5-10 4-8 10-9.5 4.5-8.5 0.5-14-1.5-12 1-10 5-10 9-12 8.5-14 5-12 2-10 5-10 6-16 3-12 1-12-0.5-14-1.5-10-7-16-6-8zM1291 584l8-0.5 6 3.5 10 21 4 2 4 6 6 2 12-1 4.5 1-2.5 2-10-1-2.5 1-4.5 14-1 2 0.5 4-2 8-2.5 4.5-12.5 11.5-19.5 11.5-12 6-12 3.5-10 1.5-4-1-1.5-1.5-2-10-2.5-3-4-2-6-0.5-20 3.5-12 0-10-2-6-3.5-4-4.5-3.5-8 0.5-6 4-6 11-8 14-9.5 12-7 6-1.5 10-6.5 8-4 4-1.5 16-2.5 4-1 14.5-12.5zM1207 718l4-0.5 4 1.5 6 5.5 8.5 15.5 2 12-3 12-9.5 19-8.5 11-9.5 10-10 5.5-16 3.5-12 0-20-3-14 1.5-10-1.5-10-4-8-6-3.5-4-3.5-6-1-10 4-13 6-0.5 2-1 14-13 24-18.5 8-4 6-6 10-5.5 8 0 8 3 10 1.5z"/>
<path fill="#ff2c00" d="M1013.5 268l47.5 0-8 4.5-20 3.5-12-3zM1152.5 268l257 0-40.5 13.5-48 18-20 5.5-48 16.5-26 8-12 1-14-3.5-20-8-6-3-7.5-6-4.5-6-3-6-4.5-24zM1584.5 268l120.5 0 0 506.5-22-6-14-8-14.5-12.5-11-14-2.5-2-18-1-6-2.5-12-7.5-18-1.5-8-1.5-24-8.5-20-4-6-2.5-13-11-6.5-10-4-4-14.5-9-5.5-5-8-10-3-6-0.5-8 5-8.5 8-8 16-11 8.5-8.5 3.5-8 1.5-14 2.5-8 16-23.5 8-14.5 1.5-14-2-14 0-8 3.5-8 9.5-10 3.5-8 1-6-1-22 1-10 4-8 10.5-14 8.5-14 4-10 3-12 11-24 4.5-12 2-12 0.5-12-1-10-2-9.5-4-10.5-10-13.5zM1288.5 590l6.5-1.5 4 1.5 9 18 2 8-0.5 4 1.5 0.5 2-0.5 3 2-1.5 2 1.5 6-2 2 1.5 6 0.5 8-1.5 4-3 4-7 6-29.5 17.5-10 2-6.5-1.5-6-8-7-4-6.5-0.5-22 4-14 0-10-2.5-4.5-3-3.5-4-2.5-8 1.5-6 3.5-4 18-14 39.5-20.5 6-1.5 16-2 4-1.5zM1164.5 722l8.5-1.5 12 3.5 8 1 12-3 4-0.5 6 2.5 5.5 6 7 12 1.5 12-2 8-4 10-8 14-8 10-8 7.5-8 4.5-14 3-12 0.5-22-3-14 1-10-2-12-5.5-6.5-6-4.5-8-0.5-10 1.5-8 2-1.5 6-1 17-15.5 21-15.5 8-4 8-7.5z"/>
<path fill="#ff2600" d="M1023.5 268l28 0-16.5 2.5-6-0.5zM1156.5 268l246 0-81.5 29-22 6-47.5 17-24.5 7-10 1-8-1-12-4-18-8-9.5-7-4.5-6-2.5-6-3.5-20zM1593.5 268l111.5 0 0 505-20-5.5-16-8.5-14-12.5-10-13-4-3-16-1.5-7-3-11-6.5-6-1-14-0.5-8-1-24-9-24-6-12.5-10-7.5-11-4-4-13-9-7-6-5.5-8-3-8 1-6 2.5-6 3.5-4 3.5-4 18-14 7-8 3.5-8 2.5-14 1.5-6 13.5-20.5 8-15 2.5-6.5 0.5-8-1-18 0.5-6 2.5-6 11-14 2.5-8 0.5-6-1-22 1.5-10 4-8 10-12 7.5-12 5-12 4.5-16 14.5-26 4.5-10 1.5-8 0.5-10-3-22-2.5-8-5-10-8-12zM1286.5 598l6.5-1.5 5 7.5 2.5 6 1 6-0.5 4-2 6 2 0.5 2-2 6 1.5-7 10 2 2-1.5 2 1.5 2-0.5 2 1.5 2-3.5 6-0.5 2-2.5 0-4.5 6-11 7-14 5-2-0.5-2-2.5-11-5-11-2-24 5-14 0.5-10-2.5-4.5-3-3-4-1.5-4 2-8 9.5-10 11.5-8.5 34-17 8-2.5 16-1 6-1.5zM1166.5 724l6.5-0.5 18 3 12-1.5 6 0.5 6 3.5 8 9.5 2.5 5.5 1 6-1 10-5.5 14-11 18-8 8.5-8 5-10 3.5-10 1.5-10-0.5-18-3-14 0.5-6-0.5-9.5-3-8.5-5-5-5-3-6-1.5-10 1.5-6 8-4 14-13 22-16.5 8-4.5 10-7.5z"/>
<path fill="#ff2000" d="M1159.5 268l236.5 0-73 26-24 6.5-49 17.5-21 6-12 1.5-10-1.5-10-4-18-8-8-6-4-6-2.5-6-2.5-18zM1604 268l101 0 0 503-20-5.5-16-8.5-12.5-11-11.5-14.5-4-2.5-16-2.5-11.5-6.5-6.5-2.5-20-0.5-12-2.5-20-7.5-18-4.5-6-2.5-10-8-12-16-18-14-5-8-2.5-8 2-10 3-4 3.5-4 17-15 7-9 5-10 5.5-18 17.5-32 3.5-12 0.5-22 1-7.5 3.5-6.5 8-10 2.5-8 1-8-1-24 2-10 2.5-6 10.5-12 8-12 4.5-10 4.5-16 2.5-6 5.5-9.5 12-16.5 4-8 2-14-1-14-6-22zM1282.5 608l1 0-0.5 0.5zM1253.5 610l19.5 0 8-1 2 2 2-0.5 1.5 1.5 2.5 4-1 2 0.5 6-2 8-5 8 2 0 11.5-10.5 3.5 0.5 0 4-1.5 4.5-7 3.5-0.5 6-4.5 7-5 3-7 2.5-2 0.5-2-3-6 1-16-0.5-24 6-10 1-12-1.5-8-4.5-3-5.5 0.5-6 4-6 8-8 8.5-6 28-14.5 8-2.5zM1281 640.5l-1 1.5 1 0zM1170 726l15 2 22 0.5 8 5 6.5 8.5 2.5 10-0.5 6-2 8-7.5 16-10 14-5 4.5-8 4.5-10 3-10 1-8-0.5-18-3-20-1-10-3.5-8-5-4-5.5-2-4.5-1-6 1.5-6 20.5-18 21-15 18-12z"/>
<path fill="#ff1a00" d="M1162.5 268l227 0-40.5 14.5-50 15.5-50 18-18 5-12 2-8-1-8-2-22-10-8-6-3-4-2.5-6-2.5-18zM1611.5 268l93.5 0 0 501-20-5.5-14-7-12.5-10.5-13-16-4.5-3-14-2.5-11.5-6.5-6.5-2-22-0.5-12-2-22-9-14-3.5-8-3.5-9.5-7.5-9.5-14-17-14-5.5-8-2-8 1.5-8 2.5-4 19.5-20 10.5-16 7-18 17.5-36 3-12 2.5-26 2.5-6 9-12 2-6 0.5-10-1-14 0.5-12 3-12 20-26 4.5-10 4.5-16 3.5-8 6.5-9.5 11.5-12.5 5.5-10 3-14 0-16-8-27.5zM1242.5 614l6.5-1.5 10 0 16.5 3.5 3 6-0.5 2 1 2-0.5 6-3.5 8 1.5 4-1 2-14.5 6-18 4.5-22 6-6 1-8-0.5-6-2-4.5-3-2.5-4 0.5-6 1.5-4 7-8 7.5-6 10.5-6zM1277.5 644l4 0-2.5 1.5zM1164 730l7-1.5 32 2.5 8 3.5 7.5 7.5 2.5 6 0.5 4-1.5 12-3 8-4 8-10 15-5.5 5-6.5 3.5-10 3-10 1-28-4-16-1-12-4.5-6-4-4-6-1.5-4 0-6 2-4 19.5-18 20-14.5z"/>
<path fill="#ff1300" d="M1165.5 268l217.5 0-34 12.5-48 14.5-54 19-14 4-14 2.5-8-1-8-2.5-20-9-8-6-3-4-1.5-4-2.5-18zM1619.5 268l85.5 0 0 499.5-20-6-16-8-14-13-9.5-12.5-4.5-3-12-2.5-10-6-8-2-6-1-18 0.5-12-2-22-9-11-3-9.5-4-9.5-7-8-13-16-14-4.5-6-2.5-8 0.5-8 3-6 17.5-19 11.5-17 6.5-16 8-16 9.5-22 2-10 1.5-18 2-8 3-6 7-10 3-8 0.5-12-1-16 1-12 3-10 8.5-9.5 12-16.5 4.5-10 4.5-16 3.5-8 5.5-6.5 15-13.5 5-10 4-16 0-16-4-18zM1241.5 616l5.5-1 8 0.5 8 1.5 6 3.5 1.5 1.5 1 4-0.5 8.5-7 7.5-6 4-1 2-2-0.5-2 2-2 0-3.5 2.5-20.5 7.5-6 1-8 0.5-8-2-5-3-2.5-6 1-4 7-10 7.5-6 10-6zM1165 732l6-0.5 12 1 10-0.5 8 1.5 6 2.5 4 2.5 6 7 2 10.5-2.5 12-8.5 18-7 9.5-8 5.5-7.5 3-6.5 1.5-10 0.5-42-6.5-10-3.5-5.5-4-3.5-6-1.5-4 0.5-4 3.5-6 16.5-15.5 23.5-16.5 10.5-6.5z"/>
<path fill="#ff0d00" d="M1168 268l209 0-28 10.5-46 13-58 20.5-12 3.5-14 2-14-2.5-20-9.5-8.5-5.5-2.5-4-2-6-1.5-14zM1628.5 268l76.5 0 0 497.5-20-5.5-16-8.5-14-13-7.5-10.5-4.5-4.5-14-3.5-6-4.5-8-2.5-10-1-20 0.5-12-2.5-40-16-8.5-6-8.5-14-15-14-3.5-6-1.5-6 0-6 4-8 27-34 23.5-56 4.5-30 4-10 8-11 2.5-9 0-14-1.5-14 1-10 3-10 1-2 6-5.5 14-18.5 5.5-12 3-12 4-10 7.5-7.5 14.5-10.5 3-4 4-10 5.5-20 0.5-14-1.5-10zM1240.5 618l4.5-1 8 1.5 8 3.5 4 3 0.5 1-2 8-4.5 6-4.5 4-9.5 5.5-20 8.5-12 0.5-6-2-3-2.5-2-4 0-4 5-9 6-5 10-6.5 10-5zM1190.5 734l12.5 3.5 8 5 3.5 5.5 1.5 8-1.5 12-3 8-6.5 12-4.5 6-3.5 3-6 3.5-8 2.5-14 1.5-42-8.5-8-3-6-5-2-4-1-4 1-4 4-6 10-10 25.5-18 10.5-6 4-1.5 8 0 10 1z"/>
<path fill="#ff0800" d="M1171 268l199.5 0-23.5 9-46 12.5-56 19.5-12 3.5-14 2-13-2.5-19-8.5-8-5.5-2-2-2.5-8-1-12zM1638 268l67 0 0 496-20-6-16-8-14.5-14-5.5-9-4-4.5-2-1-6-1-6-2-8-6-16-2.5-22 1-10-1.5-20-9-12-4-9-4.5-8.5-6-6.5-12.5-14.5-13.5-3-6-1.5-8 0.5-4 4-8 16.5-22.5 8-7 6-18.5 8-16 9.5-26 4-28 5.5-12 7.5-10 2-8 0-14-2-16 1.5-10 4-10 4-3.5 16-21 6.5-13.5 3-10 4.5-11 6-5.5 12-7.5 6-6 10.5-26 4-12 1.5-14-1.5-10-5.5-12zM1240 620l5-0.5 6 2 5 4.5 1 8-5.5 8-8.5 6-18.5 8-9.5 0.5-7-4.5-2.5-6 2-6 1.5-2 6.5-6 9-6 8.5-4zM1161.5 738l3.5-1 8 0 10 1.5 8-2 2 0 10 5 8 6.5 2.5 10-1.5 12-9 18.5-4.5 5.5-7.5 5-12 3.5-8 0-12-1.5-30-7.5-8-4-6-7-0.5-6.5 1-2 10.5-12 27-19.5z"/>
<path fill="#ff0400" d="M1173.5 268l191.5 0-18 7-46 12-56 19.5-12 3-14 1.5-12-2-18-8.5-7-4.5-2.5-4-2.5-6-1.5-12zM1650 268l55 0 0 494-20-6-14-6.5-14-13.5-6.5-10-5.5-6-12-3.5-8-6-18-2-22 1-10-1.5-30-12.5-8-4.5-10-7-6-12-13.5-14-3-10 0-4 2-6 5.5-10 9-11.5 8-6.5 2.5-4 6-20 7.5-16 9.5-26 4.5-27 5-11 8-12 2-12-2.5-24 2.5-14 12-18 11-14 7-12 4-12 4-8 5-4.5 12-8.5 6.5-7 18.5-40 3.5-12 0.5-8-1.5-8-4.5-14zM1240 622l3 0 4 1.5 4 4.5 0.5 4-0.5 4-4 6-10 7-12 4.5-8 0-5.5-3.5-2-4 0.5-4 5.5-8 11.5-8 8-3.5zM1163 740l10 0 10 1.5 10-1 10 5.5 5 6 2 6 0 8-3 10-4.5 10-3.5 5-8 6-12 3.5-8 0-10-1-30-9-7-4.5-3-4-2-4 0.5-4 8-10 25.5-19z"/>
<path fill="#ff0101" d="M1176 268l183.5 0-14.5 5-46 11.5-54 19-12 3-12 1-14-2-16-7.5-6-4-4.5-8zM1664 268l41 0 0 492.5-20-6-13-6.5-14.5-14-6-10-3.5-4-3-2-10-3.5-8-5.5-8-1.5-14-0.5-20 0.5-10-1-35.5-16.5-10.5-8-6.5-12-10.5-12-2-4-1.5-6 1-8 4.5-10 7-9.5 9-8.5 3-4 6-20 7.5-16 9.5-26 5-28 4.5-10 8.5-14 2-12-3-24 3-14 11-16.5 12.5-15.5 15.5-28.5 4-4.5 12-9 6-7 28-51 2-8 1.5-12zM1230 626l5-1.5 4-0.5 6 2 1.5 2 1.5 4-1.5 6-5 6-8.5 5-8 2-8-1-2.5-2-1.5-4 2-6 8-8zM1160 744l7-2 14 2 12 0.5 6.5 3.5 5.5 6 1.5 6 0 10-5 14-6.5 8.5-6 3-8 2.5-15 0-11-2-17-6-5-2-6-6-1.5-2-1-6 5-8 14.5-12 11-8z"/>
<path fill="#ff0b0b" d="M1178 268l175.5 0-56.5 14.5-52 18-12 2.5-12 1-14-2-12-5.5-6-3.5-4-4.5-2-4zM1678 268l27 0 0 490.5-20-6-12-6-13-12.5-7-11.5-4-4-12-5.5-10-6.5-6-1-44-0.5-9-3-24.5-12-8.5-5.5-4.5-4.5-6.5-12-9-12-2.5-10 1-8 4-8 5.5-8 10-10 2-4 5.5-18 8-18 9.5-26 5.5-28 12.5-24 2-12-3-24 1-8 2-6 9-14 13.5-16 16-26 20.5-20.5 17.5-29.5 13-16 6.5-10 3.5-10 1-6 0.5-14zM1229 628l6-2 6 1 2.5 3 0.5 6-3.5 6-5.5 3.5-8 3-6-0.5-4-3.5 0-4.5 3.5-6zM1161.5 746l7.5-1 22 3 9.5 6 3 8 0 10-4.5 12-6 7-6 3-8 2-8 0.5-12-1.5-10-3.5-12.5-5.5-5-6-1.5-4 0-4 3.5-6 15.5-13z"/>
<path fill="#ff1515" d="M1180.5 268l166 0-51.5 12.5-50 17-12 2.5-10 0.5-14-1.5-8.5-3-7.5-4-4-4-3-4zM1691.5 268l13.5 0 0 488.5-20-6-12-6-10-10.5-7.5-12-3.5-4-13-6.5-10-7-6-1-46-0.5-10-3.5-22-11-8-5.5-4.5-5-13-22-3-10 0.5-8 2.5-6 5-8 9-10 3.5-6 5-16 18-46 6-28 12-24 2-12-3.5-26 3-12 8-12 14-16 18.5-26 17.5-18 19.5-31 6-7 14-12 6.5-8 3.5-8 2-10zM1228 630l5-1.5 4 0 2.5 1.5 1.5 2 0 4-2 4-4 3.5-6 2-4 0.5-3.5-2-1.5-4 3-6zM1165.5 748l5.5 0 18 3.5 5.5 2.5 4.5 4.5 2 9.5-1.5 8-4.5 9.5-5.5 4.5-10.5 3.5-16-0.5-10-2.5-8-4-6-3.5-2-3-2-4 0-4 3.5-6 14-12 6.5-4z"/>
<path fill="#ff1e1e" d="M1183 268l153 0-53 13-26 10-12 4-20 2.5-16-1.5-13-6-7.5-8zM1703 268l2 0 0 486-18-5-12-5.5-8-7.5-12-18-26-16-4-0.5-12 1-18-2-18 0.5-10-3.5-20-10-7.5-5.5-6.5-8-10.5-20-2.5-8 0-4 2.5-10 16-22 5.5-18 18-46 6.5-28 11-24 2-12-3.5-26 3.5-12 8-12 11-12 20.5-25.5 18-20 12-19.5 8-11 8-7.5 19.5-12.5 5-6 3.5-6 3-10zM1228 632l3-1 4 0 2 1 1 2-1 4-1.5 2-2.5 2-4 1-4-1-1.5-2 1-4zM1163 752l6-1 15.5 3 5.5 2 5 4 2.5 6 0 6-2.5 8.5-4 5.5-6 3-16 2.5-14-3.5-8-4.5-4.5-3.5-2-6 2-6 9.5-10z"/>
<path fill="#ff2828" d="M1185.5 268l140 0-46.5 11-22 9.5-12 3.5-20 2.5-14-1-12.5-5.5-8-8zM1705 308l0 444.5-18-5.5-12-6-5-5-9.5-16-3.5-4-16-8.5-10-8-4-1-14 2-20-3.5-10 2-6-0.5-10-3-18-9.5-6-4-7-8-11.5-24-1-8 1-6 2.5-6 11.5-16 2-4 4.5-15.5 19.5-50.5 6-26 11-24 2-12-3.5-24 3-14 8-11.5 9-8.5 41-47.5 8.5-14.5 11.5-15 8-7 18-8 6.5-4 6.5-8zM1229 634l2-0.5 2.5 0.5 0.5 2-1 2-4 1.5-1.5-1.5 0-2zM1164 756l5-1 10 2 8 2.5 4 3 2 3.5 1 6-2.5 8-2.5 3-8 4-10 1.5-12-2.5-2-2.5-8-4.5-2-5 1.5-4 10.5-11.5z"/>
<path fill="#ff3232" d="M1188 268l126 0-37 9-22 9.5-12 3.5-16 2-16-1.5-10-4.5-8.5-8zM1704 326l1-2 0 426.5-18-6-12-6-4-4.5-8-15-4-4.5-18-10-6-6-4-3-4 0-10 3-4 0.5-7-1-9-3.5-6-1.5-8 3-4 0.5-10-2.5-16-8-8-5.5-7-8.5-8.5-20-2-12 0.5-4 4.5-10 9.5-14 4.5-16 20-52 6.5-26 10-23.5 2-12.5-1-12-2.5-12 3.5-14 7-10 5-3.5 46-52.5 8-14 13.5-16 6.5-4.5 24-9 4-3zM1168.5 764l4.5-1.5 4 0 10 3.5 1.5 2 1 4-2 6-2.5 3-4 2.5-6 1-6-0.5-5-2 0-10 1.5-4z"/>
<path fill="#ff3c3c" d="M1190.5 268l111.5 0-27 6.5-20 9-14 4.5-14 2-14-1.5-10-5-8.5-7.5zM1704 334l1-1 0 415.5-18-6-11-6.5-6.5-10-4.5-9-4-4.5-18-9.5-6-7.5-5.5-3.5-6.5 1.5-8 3-4 0.5-6.5-1-15.5-7-10 4.5-10-1.5-14-6-10-7-6.5-9-7.5-20-2-12 4-12 8.5-12 4.5-16 21-54 6-24 9.5-24 2.5-14-1-12-2.5-12 3.5-14 6-8 4.5-2 14.5-18 19-19.5 15.5-18.5 6.5-12 10-11.5 8-6.5 25-8zM1177 774l1 0-1 1z"/>
<path fill="#ff4747" d="M1193.5 268l98 0-18.5 4.5-20 9-12 4-14 2.5-14-2.5-8-4.5-8-7zM1704 340l1-1 0 407-14-4.5-13.5-7.5-5-8-5-10-4.5-5-4-3-12.5-6-7.5-8.5-5-3.5-5-0.5-12 4.5-4 0.5-6-1-14-6.5-4-0.5-8 3-4 0.5-8-1.5-10.5-4.5-8.5-6-6-8-7-20-1.5-12 2.5-10 8.5-14 4-16 13.5-38 7-16 6.5-24 8.5-24 2.5-12-0.5-14-2-12 2.5-12 4.5-6 6-4 14-18 20-20 16-19.5 6-10.5 9-10 9-7 24-7z"/>
<path fill="#ff5252" d="M1197 268l81.5 0-9.5 3-26 11-16 4-10-2-8-4-7.5-6zM1704.5 344l0.5 399.5-12-3.5-11-6-5-5-8-14.5-4-5-4-3-12-6.5-8-8.5-5.5-3.5-6.5-0.5-16 4.5-6-1.5-14-6-4-0.5-10 2.5-4 0.5-6-1.5-10-4.5-6.5-5-4.5-6-7-20-2-10 2-10 7.5-14 4-16 5.5-18 17-44 12-40.5 3-15.5-1.5-26 3-10 9.5-9 14-18 20.5-21 15-18 8-12 6.5-6.5 10-7 22-7z"/>
<path fill="#ff5c5c" d="M1200.5 268l69 0-28 12-16.5 4-6.5-2-7.5-4-6-5zM1704.5 348l0.5-0.5 0 394-14-5-7-4.5-5-5-12.5-19-3.5-3.5-12-7-12-10.5-8-1.5-18 4-6-1.5-14-6-6 0-12 2-6-1-6.5-3-7.5-6-4-6-5.5-14-2-12 1-10 7-16 4-18 7-22 15.5-40 10.5-38 3-16 0.5-12-1.5-12 3-10 9-10 14.5-18 20-20 28-34.5 6-4.5 6-3.5z"/>
<path fill="#ff6767" d="M1205 268l57 0-19 8.5-12 4.5-6 1-5-2-6.5-4zM1703.5 352l1.5-0.5 0 388-14-6-6-4-5-5.5-9-14-4-5-14-10-12-10-6-1.5-4 0-18 3-6-1-14-5.5-6-0.5-12 1.5-5.5-1-5-2-5.5-4.5-4-5.5-7.5-20-0.5-6 2.5-12 6-16 3.5-19.5 4-14.5 16.5-42 4.5-14 9-40 1-12-1-14 2-8 23.5-28 19.5-20 29-34 12-7.5z"/>
<path fill="#ff7171" d="M1209.5 268l46 0-18.5 8-10 3-6-1.5zM1702 356l3-1.5 0 382.5-12-5-6-4.5-6-6.5-12-17.5-26-21-10-1.5-20 3-20-6.5-18 0.5-8-2.5-5-3.5-4-6-5.5-14-1-10 1-6 7-24 2-16 3-14 6.5-18 12-28 4-14 8-40 1-12-0.5-12 3-8 23-28 17.5-18 28-31.5 12-8.5z"/>
<path fill="#ff7c7c" d="M1214.5 268l34 0-15.5 6-6 1.5-4.5-1.5zM1700 360l5-2 0 376.5-12-6-6-4.5-4-4.5-14-19.5-24-20-4-1-6 0-20 3-6-1-16-6.5-18 0.5-6-2-4-3.5-3.5-5.5-3-10-1.5-12 0.5-6 6.5-22 1-20 2-12 6-17 13.5-33 3.5-12 3.5-24 4-20 1-18 2-6 5.5-8 18.5-22 42.5-45.5 14-10z"/>
<path fill="#ff8787" d="M1221 268l18.5 0-10.5 3-4-1zM1703 362l2-0.5 0 370.5-10-5.5-8-6.5-16.5-22-15.5-13-6-6.5-4-2.5-8 0-22 3.5-8-2-14-6-6-0.5-10 1-6-2-3.5-4-1.5-4-3-18 1.5-12 5-18-1.5-20 1-10 4.5-14 15-36 3.5-12 3-26 5.5-24 1-14 1-4 6-10 17-20 37.5-40 9-8 11-7z"/>
<path fill="#ff9191" d="M1701 366l4-1 0 363-8-3.5-8-6-17-22.5-15-13-6-7.5-5.5-3.5-28.5 5-8-2-16-7.5-16 0-2-1-3.5-6.5-1.5-20 2-12 4.5-14-5-20 0.5-10 4-14 15-36.5 3.5-11.5 2-26 7-26 1.5-14 6.5-12 17.5-20 34-36.5 10-8.5 12-7.5z"/>
<path fill="#ff9b9b" d="M1705 368l0 357.5-12-7-4-4-15.5-20.5-13.5-12-7-8.5-4.5-3.5-5.5-1.5-18 4-10 0.5-6-1.5-14-8-11.5-3.5-3-2-2.5-6-1.5-8 0.5-8 4-16 0.5-6-5-16-1.5-8 0.5-8 3.5-12 14-36 3.5-12 2-26 7-24 2.5-14 4.5-10 24.5-29.5 18.5-20.5 9.5-9 10-7.5 10-6.5z"/>
<path fill="#ffa5a5" d="M1702.5 372l2.5-1 0 351.5-12.5-8.5-15.5-20-15.5-14-8.5-10-4-3-6-1.5-18 3.5-10 0-8-3.5-21-13.5-3-6-1-8 0.5-6 3.5-8-0.5-10-5.5-18-1.5-10 1.5-10 3-10 15.5-42 2-28 8-24 3-14 3.5-8 18-23 30-32.5 12-9.5 10-6.5z"/>
<path fill="#ffafaf" d="M1700 376l5-1.5 0 344.5-10.5-7-16-20-13.5-12-8.5-10-5.5-5-4-2-6-1.5-18 3.5-7.5-1-8.5-4-12-10.5-2.5 0.5-2.5-4-1.5-10 0.5-8 2-6-0.5-6-1.5-8-5-14-1-8 1-10 3.5-14 13.5-38 2-28.5 8.5-21.5 3.5-14 4-10 12-16 30-34.5 10-8 12-8 8-4.5z"/>
<path fill="#ffb9b9" d="M1704 378l1 0 0 337.5-8-5.5-14.5-18-13.5-12-12-13-6-4.5-6-3.5-6-1-4-0.5-2 1-8 0.5-8-1-7-4-7.5-6-2-4-3.5-1.5-1.5-16.5 2-2-3-12-6-18-1.5-8 1-12 4.5-20 11-30 0.5-20 1.5-8 9.5-22 4-14 4-10 6-9 26-31.5 8-8 22-16 8-3.5z"/>
<path fill="#ffc3c3" d="M1702 382l3-1 0 331.5-8-7-10.5-13.5-14-12-13-14-8.5-7-12-5.5-8-1.5-4 1-8-2-6-3-4-4-3.5-8-2.5-2-1-8 0.5-4-5.5-20-3-6-2-14 4-32 10-26 0.5-18 1-8 2.5-6 10-18 4.5-18 2.5-6 8-11 11.5-13 8.5-12 8-9 22-15.5 8-4.5z"/>
<path fill="#ffcdcd" d="M1700 386l5-1.5 0 324-10-10.5 1-2-21-17-12-13-10-8.5-8-6-6-2.5-16-5-7.5-6-6.5-11.5 0-4.5-10.5-32-1-10 1.5-30 2-8 8-18 0-14 1-10 3-7 10-13 2-4 1.5-6 1-10 3.5-8.5 6-9 13-14.5 7-12 6-7 9-7 15-10z"/>
<path fill="#ffd7d7" d="M1705 388l0 215-4-3 0-2-6-1.5-6 0.5-3 1-1 2-0.5 6 2.5 9.5 3.5 4.5 6.5 1.5 8-2 0 77-28-19.5-12.5-13-19.5-17-20-11.5-5.5-5.5-7-18-7-22-0.5-6 1-12-4-20 2-10 5-10 3-8-0.5-14 1.5-10 6-9 9-9 5-7 1-5-0.5-12 4.5-10 7-8.5 10-9.5 3.5-10 6.5-8.5 26-18z"/>
<path fill="#ffe0e0" d="M1704 392l1 0 0 202-12-2.5-6 1-4 1.5-2 4-0.5 14 1.5 8 3 4 2 1.5 4 1.5 6 1 8-1 0 64.5-10.5-7.5-15.5-9.5-6-6.5-13.5-12-14-14-16.5-10.5-7-7.5-3-10-6-26 2.5-8 4.5-8-0.5-2-10.5-11-3.5-9 1.5-8 5.5-10 3-8 0-4-1.5-8 1.5-10 7.5-9.5 10-8.5 6.5-8 1.5-8-1.5-8 3-10 6.5-8 8-6 5.5-6-0.5-8 5-7 26-18.5z"/>
<path fill="#ffe8e8" d="M1704.5 396l0.5 0 0 192.5-14-0.5-6 1.5-4 2.5-2.5 4-1.5 20 2 6.5 6 6.5 10 4.5 10 1.5 0 42.5-2 0-12-2-10-4.5-19.5-17-14.5-15-19-15-3.5-8-5-22 1-8 3.5-10 1-6-3.5-6-9-10-2-4-0.5-4 1-4 4-8 3-10-1-12 2-8 5.5-8 11.5-10 7-8 2.5-8 0.5-12 3-8 4-5 12-11.5 2-3.5 2-8.5 4-5.5 20-15zM1702.5 682l2.5-1 0 2z"/>
<path fill="#fff0f0" d="M1700.5 402l4.5-2 0 185-16 0-6 2-4 3-2.5 6-0.5 10-1.5 12 2.5 7.5 6 6.5 12 8.5 10 4 0 25-6 1-12-2.5-18-11.5-7.5-6.5-12.5-14-15-12-3-4-3-8-3-16 0.5-8 3-12 0-6-2-6-10-14-1.5-6 5.5-20 0-12 1.5-6 5.5-8 13.5-12 6-7.5 3.5-10.5 1-10 2.5-6 15-18 6-12 3-4 9.5-8z"/>
<path fill="#fff8f8" d="M1702.5 406l2.5-1 0 176.5-18 1-6 2.5-3.5 3-3 6 0 12-2.5 12 0.5 6 2 4 11 12 6.5 10 2.5 2-3 2-0.5 2.5-2 1.5-4 0.5-8-2.5-10-5.5-14-16-13-10.5-5-6.5-4-9.5-1.5-10 0-6 3-16-0.5-8-3-7.5-7.5-10.5-1.5-8 3-18 1-12 3-8 5-6 15-13.5 3-4.5 3-6 3.5-16 2.5-6 21-28 9-9z"/>
<path fill="#fffdfd" d="M1701.5 412l3.5-1.5 0 168-14 0.5-8 1.5-6 4-4 5.5-1 6 0.5 10-3 12-0.5 6 1.5 6 7 8 2 4 0.5 4-1 1-4 1.5-4-1-4-2.5-10-13-15-12-5-8-2-6-1-8 2.5-22-0.5-8-3-8-8.5-14-0.5-10 2.5-22 3.5-8 4.5-6 12.5-11 7.5-9 4-8 2-12 2.5-6 6-10 18-20.5 6-5.5z"/>
<path fill="#ffffff" d="M1702.5 418l2.5-1.5 0 159-22 2-5 2.5-4.5 4-3 4-1 4 1.5 12-1 6-7 13.5-4 1.5-6-2-6.5-5-4.5-6-2-6-1.5-10 1.5-14-0.5-16-3-8-6.5-10-2.5-8 0-8 2-16 2-6 3.5-6 20-18 6.5-8 2.5-6 2-12 1.5-6 5.5-10 20-19.5z"/>
<path fill="#ffffff" d="M1703.5 424l1.5-1 0 149.5-22 2-4.5 1.5-5.5 4-5 6-1.5 4-0.5 4 3 10-1.5 6-6.5 7-2 1-4-0.5-7-5.5-3.5-8-1-6 1-18-0.5-16-2-6-8.5-12-2.5-6-0.5-8 1.5-14 3-8 4.5-6 26.5-22 6-6 1-4-1.5-10 0-6 1.5-6 2.5-4 5.5-5.5z"/>
<path fill="#ffffff" d="M1705 430l0 38-6-5.5-4-2-4-0.5-8 2-4-1.5-2-2.5-0.5-4 1-4 2.5-4 5-4zM1669.5 488l5.5-1 4 0.5 12 5.5 4 0.5 4-0.5 6-3 0 79.5-10 1.5-14 0-6 3-10 8-3 4-2 4 1 4 4 8 0.5 4-2.5 4-4 1.5-4-1-2-2-2.5-6.5 1-14-2-30-2-4-11-12-2.5-8-0.5-6 2-10 5.5-10.5 10-9 12-7.5z"/>
<path fill="#ffffff" d="M1703 438l2-0.5 0 18-14-3-8 1.5-1-2 0.5-2 2.5-4 8-4.5zM1665 496l10-1.5 6 2 10 6 6 0 8-1 0 65-12 2-14-0.5-6 2.5-6 3.5-6 1.5-2-0.5-2-2.5 1.5-16.5-0.5-4-3-5-6-2-8-5.5-3-7.5 0-10 4.5-10 2.5-3.5 8-6.5z"/>
<path fill="#ffffff" d="M1689.5 446l3.5-1.5 4.5 1.5-0.5 2-6 1.5-2.5-1.5zM1667.5 502l7.5 0 16 5.5 14 1.5 0 54-8 2-8 1-20-2.5-3-3.5-3-10-3-6-11.5-8-3.5-4-1.5-4 0-4 4-10 9-8z"/>
<path fill="#ffffff" d="M1664 510l5-1.5 6 0 30 6 0 44.5-10 3.5-8 1-11.5-3.5-4.5-4-6-12.5-10.5-13.5-2-4 0-4 2.5-5 4-4z"/>
<path fill="#ffffff" d="M1670.5 516l6.5-1.5 8 0.5 12 3 8 4 0 32.5-10 4.5-8 1.5-7-2.5-4.5-4-10-20-2.5-8 2-6z"/>
<path fill="#ffffff" d="M1681.5 520l5.5 0.5 6 2 7 3.5 5 5 0 15-5.5 6-8.5 4.5-6-0.5-4-3-4-6-4.5-11-1-6 1.5-5.5 4-3.5z"/>
<path fill="#ffffff" d="M1682.5 528l2.5-1 4 1 3.5 2 4.5 5 0.5 7-2 4-2.5 2-4 1-2-0.5-4-4.5-2.5-6-0.5-4 0.5-4z"/>
</g>
<path fill="none" stroke="#000" stroke-opacity=".95" stroke-width="1.35" stroke-linejoin="round" d="M1519 872l-6-3-8-3-16-4-26-4.5-42-3.5-20-0.5-8 1-17.5 3.5-20.5 5.5-2 0-12 4.5-8.5 4M1559 872l-6-1.5-12 1-6-1-8-3-14-7.5-52-9.5-24-2.5-46 0.5-24 2.5-10 2.5-16 5-12 5.5-16 8M1585.5 872l-24.5-7.5-10-4-4-0.5-2 0-4.5-2-5.5-1.5-2 1-1.5-1.5-4.5-0.5-2-1-4 0-8-2-22-3.5-30-7.5-22-2.5-64 2.5-12 1-12 2.5-16 6-12 6.5-25 14.5M824.5 872l-4-12-5.5-9M1602.5 872l-13.5-6-29-8-25-8.5-28-7.5-30-7-14-2.5-16-2-24-1-30-1-16 1-24 6-12 4-17.5 8.5-22.5 13.5-15 10.5M849.5 872l-1.5-12 0-4 4-18 0.5-12-1.5-10-1.5-4-2.5-4-2-2-4-1.5-2-0.5-6 1-18-3M1619.5 872l-6.5-3-10-2.5-14-7-20-5.5-44-14.5-26-5.5-22-5.5-20-3.5-20-2-50-1.5-10 0-6 1-20 4.5-10 3.5-12 5.5-16 9.5-16 10.5-22 16M874 872l1-24-4.5-22 3.5-20-0.5-4-1.5-8-7-8.5-10-7.5-12-6.5-12-3.5-6-0.5-10 1M1636.5 872l-11.5-4-10-4.5-10-2-8-4-8-6-20-5.5-44-14-26-5-22-5.5-22-4-50-4-24 0-10 0.5-8 1.5-20 6-12 5-14 8.5-36.5 25-9.5 7-5.5 5M898.5 872l0-14 0-4 3.5-8 1.5-6-7-18-3.5-14-2.5-14-3.5-12-5.5-10-13.5-14-10-14-7.5-4-3.5-1-6 0-12 4-14 2M1661.5 872l-46.5-14.5-10-4-8-5-6-4.5-4-2-62-18-26-5-32-8-10-1.5-22-2-10-2.5-12 0.5-24-1.5-14 0-8 1.5-26 8.5-8 3-6 3.5-54 37-8 6.5-8 8M923 872l2.5-14 0-4-0.5-4-3-10-10.5-26-2-12-4.5-12-1.5-10 0.5-12 4-10 1-10-4.5-14-4-8-5.5-8.5-8-7.5-8-2-2 0-12 1-12 3.5-13.5 5.5-6.5 4-4 1-6 1-8 0M1691 872l-64-19-12-4-8.5-5-8-6-7.5-4.5-22-6.5-22-5.5-22-7-26-5-20-5-24-7.5-20 0-10-2.5-12 1.5-22-2.5-12-1-8 1-10 3-20 8-14 6.5-12 9.5-22 15-26 19-6.5 5.5-12 12M1705 866.5l-26-6.5-24-8-24-7.5-8-3-8-4-16-11.5-18-4.5-12-4-22-5-22-7.5-15.5-3-22.5-5-32-11.5-10-2.5-10-1.5-10 0.5-20 2.5-2 0-12-3.5-10 0-8 1-14 4-22 10-14 7.5-6 5-10.5 11.5-23.5 16-23.5 18-19.5 18M938.5 872l-1-16 1-12-3-10-5-10-3.5-10-3.5-28-0.5-14 2-8 5-10 0.5-2-2.5-12-8-22-1.5-10 2-14-1-8-0.5-2-6-6-8-2-2 0-11.5 2-12.5 4.5-14.5 7.5-11.5 6.5-12 5-14-1-6-1.5-6-2M1705 856.5l-26-6-48-14.5-10-5-6.5-5-6.5-6-7-4-11-2-9-2-12-4-20-4.5-18-6.5-6-2.5-6-1-10-3-12-2.5-10-3.5-10-4-20-10-8-3.5-4-0.5-8 0.5-12 3-12 1.5-12-0.5-10-2-12 1-8 3-18 4-4 1.5-31 17.5-4.5 4-6.5 9-11 11-21 15-12 9-32 28M953 872l0-12 1-14-1-8-8.5-36-1.5-10-1-12 0.5-4 2-8 6.5-5 2-2.5 0.5-6.5-0.5-2-12-26-2.5-10 0.5-10 1-4 4.5-10 1.5-2 8.5-10 8-8 9.5-8 7-8 0.5-2 0.5-4 0-2-1-2-4-5.5-10-5.5-8-2.5-12 1-10 3-14 6-28 15.5-14 9-12 6-4 1-8 1-10-4.5-8.5-8.5-6.5-10-10.5-14-4.5-10 0-2.5M1705 846l-28-6-38-11-10-4.5-7.5-4.5-10-10-2.5-1.5-8-2-12-2.5-20-5.5-22-5.5-24-8.5-8-1-18-5.5-10-4.5-10-6-10-3-12-11-2-1-2 0-6 0.5-16 5-10 2-10 1-8-1.5-2 0-16 3.5-32 5.5-6 1.5-36 21.5-2 2.5-3.5 8-4.5 6-8 7-26 20-26 22-14 11-6.5 4M968.5 872l-2-24-2-8 1-12 3-12 6-12 1.5-10-2.5-12-2.5-16-1.5-2-2.5-12-8-24-0.5-4 0-12 4-14 6.5-11.5 8-8 10-5.5 14-3.5 6-2.5 2-1.5 2.5-11.5-3.5-14-0.5-12 0.5-8 0.5-4 2.5-2 2.5-14 4.5-30-1.5-2-3.5-0.5-10 2.5-16 1.5-12 2.5-13.5 6-12.5 9.5-18 20.5-5.5 8-2.5 2.5-12.5 9.5-16.5 10-15 7-8 0-13.5-9-1.5-2-7-10-3-10-3.5-50 0-26 2-18 4.5-22 2.5-22-0.5-26-2-18-0.5-22-4-42-4.5-20-7-16-18-17.5M1291 451.5l-21 20.5-3 6 1.5 6 1.5 2 5 2.5 2 0 6-1.5 10-6.5 6-2.5 6-6 2-8 0-2-2-7.5-6-4-6 0-2 1M1705 836l-24-5.5-14-2-20-4.5-8-3.5-8-4.5-7.5-6-4.5-6-8-4-28-6-12-4.5-10-3-14-2-14-5-8-4.5-16-2.5-9-2.5-7-2.5-14-9.5-4.5-4-3.5-6-0.5-6-1.5-6-5.5-2-2.5 0-6 0.5-6 2.5-12 8.5-10 3.5-8 1.5-10 0.5-12-2-6-0.5-4 0-30 6.5-16 4.5-6.5 4.5-0.5 4-1 2-24 13-6 5-6.5 12-5.5 6-18 14.5-16 14.5-38 28-10 5-11 4M986.5 872l-3-8-2-8-2-18 2-14 6.5-22 0-10-3.5-10 1-12 2.5-10-4-26-1-12 0-4 2-12 5.5-10 4.5-5 2-1.5 6-0.5 2 0.5 6.5 4.5 7.5 6 6 3.5 2 0 2-2 2-3.5-1-14-2.5-16-2-18 2-14 4-12 6.5-8 1-1 6-1.5 1.5-1.5 8.5-14 6-11.5 8-10 10-8 12-9 14-7 10-4 6 0.5 8 3.5 6 0 2-1 3-5.5 2-10-2-12-5-22-1-2-1-1-4-2.5-2-0.5-12-0.5-18 0.5-16 2.5-16 4-38 11.5-16 8-18 14.5-16.5 11.5-17.5 9-18 10.5-18 14.5-14 15.5-10 7.5-2 1-8 1.5-2-0.5-4.5-5-3.5-8-1-4-2.5-20-1.5-20 0-18 3.5-18 11-26 0.5-2-2-26 4-21.5 2-4.5 2-36-0.5-6-3.5-16-5.5-12-5-14-1.5-14-6-16.5-10-15-2-2.5-12.5-12-15.5-13-9-9M1047 736l-2 2-1 4 0.5 2 0.5 0.5 3-0.5 3-1 1-1-0.5-2-0.5-1-4-3M1705 825.5l-22-4.5-14-1.5-8-1.5-12-2.5-10-4.5-6-4.5-9.5-10.5-2.5-1.5-10-2.5-10-3-10-2-10-2.5-12-5.5-22-3-22-9-11.5-3-6.5-3.5-5-4.5-3-6-1.5-8-1.5-4-2-2-10-6-7-8.5-2-0.5-6 0-16 3-8 3-9 5-7 3-8 2-2 0-6-2.5-8-10-4-1-8 2-16 2-12 2.5-12 3.5-8 6.5-10 11.5-10.5 10.5-1.5 2-0.5 4-1 2-12.5 6-9.5 6-2 2-6.5 11.5-6 6.5-6 5.5-20 15.5-10 10-20 11-16 12.5-10 4-22 6-2 1-2 0-8-0.5-6-1-4-1.5-2 1-8 1-10 5.5M1022 872l-1-2-8-4-4-3-6.5-7-7.5-16-2-10-0.5-4 2.5-10 5-10 2-10-0.5-4-2-10 0-10 0.5-4 2.5-4 0-2 0.5-8-0.5-12 4.5-8 2-1.5 6-4.5 8-2.5 2-0.5 6 1.5 7.5 5.5 2.5 3 2 1 2 0 0.5-4-1.5-10-0.5-32 0.5-16 4.5-18 2-10 4-12 6-10 6.5-8 6-14 7-10 11-7.5 10-4 2-1 10-0.5 4 0.5 18 7 12 2.5 4 0 6-1.5 2-1.5 2.5-6 6.5-10 25-30 10-10 9.5-6 12.5-5.5 10-3.5 14-3 10 1.5 6 4 4 3.5 2 0.5 20-2 10-2.5 9.5-5 8.5-6 8-2.5 4-5.5 2.5-8 1-2 5.5-6 2.5-2 8.5-5.5 12-5.5 28-7 7-4 1-2 2-6-4-7.5-2-2.5-11.5-10-15-18-9.5-8-14-7-12-2-14 1-16 3.5-18 7-12 1.5-30 12-46 15-64 16.5-36 10.5-18 7.5-18 10-54 26.5-18 10.5-19 9.5-15 6-12 2.5-4 0-8-2.5-1.5-2-4-8-4-12-0.5-2 0-12 4.5-18 7.5-42 2-2 3-14 2-14 0-4-3-12-6.5-16-16-36-13.5-36-7-14-17.5-20M1705 815l-16-3-18-1-8-2-10-3-10-6-11-12-7-4-20-6.5-14-3-18-5-12-3-4-2.5-14.5-6-16-8-3-2-1.5-2-4-12-1.5-2-3.5-2-6-1-8-2.5-6-4-6-5.5-10-11.5-6-4-2-0.5-4 1-10 6.5-6 2.5-6 1-2.5 0-5-2-3.5-4-3-2.5-4-0.5-10 1-8-1-6-2-3 1-6 8-2.5 2-6.5 3-20 7.5-12 6-9.5 9.5-8 10-10 10-10.5 7-4 5-12 5.5-6 4.5-6.5 12-13.5 13-19 13-5 5-4 3-6 2.5-14 5.5-14 11-6 3-10 1.5-14 4-6-2-15-7.5-9-1-10 0.5-10 1.5-6.5 3-1.5 2-1.5 4-2.5 2.5-6 1-6-0.5-6-1-0.5-2 3-4 0-4-1-2-7.5-2.5-6 0.5-2 0.5-8 4-8 2.5-4-0.5-6-2-14-11-6-3.5-14-9.5-8-1-2-1-2.5-2.5-0.5-2 1.5-6 4.5-8 3-8 2.5-22 1.5-4 4-3.5 6-2 10 0 8-1 10-5 6-6.5 6-12 5-8 9-7 8-5 2-2 2-4 0-2-0.5-2-1.5-2-2-1-4 0-8 0-10 1.5-6-2-2-1.5-3-7-0.5-10 1.5-12 3-10 1-3 5.5-9 5.5-8 1-2 1.5-8 4.5-7 16-11 12-6.5 14-3 38-4 10-5 7.5-5.5 3-8 5-8 8.5-9 22-18.5 8-4.5 2-0.5 2 0 4 1.5 4 3.5 5.5 1.5 2.5 0 10-4 18-9 18-5 10-4.5 2 0 18 1.5 2-1 6-5.5 11-10.5 11-9.5 14-11 12-6 10-4 10-0.5 8 1.5 8-4 4.5-4.5 1-2-0.5-2-3-4-0.5-2 0.5-2 4-8.5 7-7.5 5-11.5 4.5-6.5 10.5-8 9-5.5 8-3 2-1.5 6.5-6 11.5-8.5 22-7 0.5-0.5 1.5-6-1.5-12-5-12-8-8-3.5-2.5-10-4.5-12-2.5-14-0.5-10 1-3.5 1-8.5 3.5-12 3-36 2.5-18 3-14 2.5-22 5.5-32 9.5-18 6.5-14 1-18 3-17.5 6-66.5 26.5-20 6.5-16 6.5-34 7.5-8 5-28 14-20 10.5-15.5 5.5-14.5 0.5-11-2.5-8-4-2-2-3.5-8 1-8 1.5-4.5 4-6 4-0.5 1.5-1 0.5-1.5 2-12.5-1-8 4-8 0.5-2 1-12-1-4-3-6-2.5-2.5-14-7-16-6.5-12-8-4-3.5-9-12.5-10-20-15-42-6-10M1509.5 396l3.5-0.5 1.5 0.5-0.5 2-1.5 2 0 4-4.5 12-5 5-2 1-4-3-2-3-1-6 0.5-2 6.5-8 8.5-4M1705 804l-14-3-22-2-8-2-9-5-4.5-6-3.5-8-3-3-2-1-6-0.5-12-2-20-5-26-9-10-4-8-5.5-2.5-8-3.5-6.5-8-4-20-6-10-2-16-6-6.5-5.5-15.5-18-2-2-4-2-2-0.5-6 0.5-6 2-4 0.5-4-1-10-5.5-16 1.5-10 0.5-6-2.5-1.5-1.5-3-4-3.5-6.5-2-1.5-6 2-4.5 4-1.5 10-2.5 8-1.5 2.5-6.5 5.5-9.5 5.5-2 1-10 1.5-9 4-7 8-6.5 10-10 12-6 6-9.5 7.5-10.5 6.5 1 4-1 2-7.5 2.5-4 3-1.5 2.5-2.5 8-6 8-6 5.5-8 5.5-6 3-6 2-34 20-8 4-12 2-12 1-12-1-24-3.5-10-0.5-14 0.5-12-0.5-10-4-6-3.5-2-0.5-8 0-8 2-4 0.5-6-0.5-9.5-4-4.5-8-2.5-10-0.5-8 3.5-6 7.5-7.5 11.5-14.5 6.5-3.5 2-2.5 6-10 12-16 24-19 8-7 7.5-8 4-6-0.5-2-1-1.5-2-1-26-4-8-0.5-1.5-1-2-4 0-2 1.5-6 1.5-2 17-18 1.5-2 3-8 3.5-6 1.5-2 6-5 2-0.5 8-0.5 8-3 14-9 20-9 12-6 18-14 8-5 10-4 8-1.5 2-1.5 12-11.5 8-6.5 8-5 8-3 6-1 8-4.5 10-5 8-1 4 1 8.5 3.5 7.5 5 2 0 6-4 6-9.5 7-5.5 10.5-10 10.5-8.5 10-5 10-1.5 6-0.5 2 0 2 1 5 4.5 3 1.5 2-0.5 3-3 3-6 6-6.5 2-1.5 8-3 10.5-1 11.5 5 16 9.5 8 6.5 14 16.5 2 1 2.5-0.5 1.5-2 2-6-4.5-22-0.5-10 0-4 3-12 8.5-12 9.5-10 2-4 1.5-4 0.5-6 0-8 0.5-4 2-4 6.5-8 5.5-16 3-20-1.5-34-4.5-10-1.5-2.5-18-13.5-12-6-12-1-14 1-28-1.5-18 2-16 3-16 4-16 6.5-28 7-36 12.5-16 4.5-15.5 4-4.5 2-30 6-42 12-18 3-22-0.5-18-4.5-21-6-35-3.5-18-7.5-16-7-16-5-4-1-20-1.5-20-3-14-6-4-2-12-9-10.5-12.5-10-16-8-14-4-8M1442.5 532l2.5-1.5 2-0.5 1.5 2 0.5 2-1.5 2-2.5 1-2-1-1-2 0.5-2M1473 554l2-0.5 2 0.5 1 2 0 2-1 2-4 4-8 0-4-1.5-1.5 1.5-1 0-1-2 1-2 2.5-1 4-3 8-2M1705 791.5l-24-5.5-10-1-6-1.5-4-1.5-6-4.5-5-7.5-1-2-0.5-4-3.5-6-4-3-2-0.5-18 2.5-8-0.5-4-0.5-16-5-5-5-1-6.5-4-5.5-8-3-10-2-10-2.5-22-7-7-3.5-3-4-12-4-8-4.5-6-5.5-5.5-8-4-4-16.5-9-10-4-8-1-8-4-8-3-10-0.5-10-1-6.5-3.5-11.5-8-6-6.5-4-3-2-0.5-4 1.5-8 5-6 1.5-2 1-2 7-2 10.5-5 9.5-7 7-6 3-2 0-6-1.5-6-3-2 0-2 0.5-1.5 2-2.5 6-0.5 2 1 8-3.5 10-5 9-4 5-2 1.5-8-0.5-6.5-3-7.5-8 0-2-2-3.5-2 0-2.5-4.5-2.5-2-5-0.5-8 5-6 6-4.5 7.5-4 20-5.5 22 0.5 12 1.5 2 5 4 1 1.5 0.5 2.5-1 2-4 4-15.5 7-22 13.5-19 9.5-13 3-12 0.5-24-2.5-12 1-12 0-12-4-8-4-10-4-10-5.5-4-6.5-0.5-12 2.5-14 2-6 2-3 2-0.5 6 1 2-1 8-11.5 7-9 9-7 12-12.5 13-8.5 13-10.5 12-5 10-1.5 10-0.5 10 0.5 2.5-1 1.5-2-1-2-3-1.5-18-6-14-5-8-3.5-10-5.5-6-2.5-1-2 0-2 3.5-6 17.5-15.5 14-14 8-5 16-8.5 1.5-1 1.5-2 8.5-6 26.5-17 4-1 18-3 2-1.5 10-10 8-6 16-8.5 8-2.5 12-1.5 10 5 10 7 4 1 6-4.5 17.5-17.5 8.5-6.5 10-3.5 8 0.5 8 3 18-3.5 18 2.5 2 1.5-1 2-21 21.5-4 5-1.5 3.5 1.5 4 8 4.5 9 7.5 7 4 2 0.5 20-6 10 2 10 4 6 1 2-0.5 1-1 3-3 1.5-3 2.5-6.5 1.5-7.5 0.5-2 7-8 8-8 5-8 4.5-14 5-12 1.5-12-4.5-8-4.5-10-0.5-2 1-8 4.5-6 5-4 4-2 10-3.5 3-6.5 0.5-4-0.5-10-2.5-10 0.5-4 3-8.5 19-25.5 4-14 0.5-12 1.5-12 2.5-14-1.5-14-6-12-2-3-11-11-13-11.5-10-9.5-6-3.5-4-1.5-6-0.5-6 0-12 1-16 1-32 3-20 4-16 4-34 10-36 13-18 7-26 7.5-10 1.5-28 9.5-24 7.5-20 3.5-4 0-24-4-16-3.5-4-1.5-14-8.5-14.5-12.5-15.5-15.5-12-10-12-5.5-2-0.5-12 2-20 8.5-16 5.5-14 3.5-14 1.5-4 0-14-5.5-11.5-8-8.5-10.5-12-19.5M1074.5 268l-18.5 12-11 2-8 4.5-12-2-10-2-8-7-6.5-7.5M1425 268l-54 17-16 5.5-34 14-20 5-48 16.5-28 8.5-12 0.5-12-2.5-26-10-11.5-8.5-8.5-12-3.5-12-2-14-2.5-4-4-4M1291.5 580l9.5-1 7 3 4.5 6 6.5 10 4 4 2 0 12-5.5 10 1 9.5 6.5 4.5 4.5 4 5.5-0.5 2-4.5 6-7 5.5-4 2.5-8 2.5-4.5 3.5-2 2-1.5 8-5 8-25 20-2 2.5-10 5-26 7-20 6.5-4 0.5-3-1.5-1-2-0.5-2 0.5-2.5 4-11.5-1-2-1-0.5-2-1-2 0-18 2-10 0-12-1.5-10-5-5.5-6-3-6-0.5-6 1-3 3.5-5 2.5-2 24-16 8-4 6-4 6-1.5 10-7 8-4 4-1.5 18-3.5 6-4.5 10-9.5 8.5-4.5M1209.5 714l3.5 0 6 0.5 5 5.5 6 14 2.5 6 1 12-4 14-3.5 8-5.5 10-10 12-9.5 9.5-8 4.5-8 2.5-10 1.5-12 0.5-10-2-10-0.5-14 1.5-10-1.5-13.5-6-7.5-6-6-8-1-2 0.5-12 3.5-10 1.5-2 2.5-1 4 0 4.5-5 9.5-8 16-12 10-9 6-2 7-7 9-5 10-1 10 3.5 8 1.5 8-4 8.5-3M1705 778l-24-6.5-12-6.5-6-5-12-12-6-8-4-4-2-0.5-16 1.5-8-1.5-2-1-4-3.5-4.5-5-1.5-1-6-1.5-12-1.5-8-2-22-7-20-4.5-10-4.5-2-2.5-10-7.5-4-6.5-4.5-5.5-5.5-4.5-10-5-6-4.5-8-7.5-6-4.5-11-14-0.5-2 1.5-3.5 3-2.5 15-10.5 10-8 12-6 7.5-5.5 2-2 2.5-8-1-10 0.5-2 2.5-8 6-10 9-12 5-8 7-12 0.5-10-3.5-14-1.5-12 5.5-9 10-8.5 5-8.5 0.5-12-2-14 1.5-10 4-8 10.5-14 6.5-12 5.5-12 2-12 5-10 4-12 3-16 0.5-12-2.5-20-4.5-12-1.5-2-11.5-14-10.5-10M1370.5 268l-23.5 9-46 12.5-56 19.5-12 3.5-14 2-13-2.5-9-4.5-10-4-8-5.5-2-2-2.5-8-1-12-2.5-8M1240 620l5-0.5 6 2 5 4.5 0.5 2 0.5 6-3.5 6-2 2-8.5 6-10 5-8.5 3-9.5 0.5-6-3.5-1-1-2-4-0.5-2 2-6 1.5-2 6.5-6 9-6 8.5-4 7-2M1161.5 738l3.5-1 8 0 10 1.5 8-2 2 0 10 5 6 4.5 2 2 2.5 10-1 10-0.5 2-3.5 8-5.5 10.5-4.5 5.5-7.5 5-9.5 3-2.5 0.5-8 0-12-1.5-30-7.5-8-4-2-1.5-4-5.5-0.5-6.5 1-2 3-4 4.5-4 3-4 27-19.5 8.5-4.5M1705 764l-20-6-9.5-4-6.5-4-14.5-14-5.5-9-4-4.5-2-1-6-1-6-2-2-1-4-4.5-2-0.5-16-2.5-22 1-10-1.5-12-5-8-4-12-4-9-4.5-8.5-6-6.5-12.5-14.5-13.5-3-6-1.5-8 0.5-4 2.5-6 1.5-2 16.5-22.5 2.5-1.5 5.5-5.5 6-18.5 8-16 9.5-26 4-28 5.5-12 7.5-10 2-8 0.5-4-0.5-10-2-16 1.5-10 4-10 2-1 2-2.5 7.5-10.5 8.5-10.5 6.5-13.5 3-10 4.5-11 6-5.5 12-7.5 6-6 10.5-26 4-12 1.5-14-1.5-10-5.5-12-4-16M1302 268l-27 6.5-4.5 1.5-15.5 7.5-14 4.5-14 2-14-1.5-10-5-8.5-7.5-1.5-2.5-2.5-5.5M1705 748.5l-18-6-11-6.5-2-2-4.5-8-4.5-9-4-4.5-2-1.5-8-3.5-8-4.5-2-2-4-5.5-5.5-3.5-6.5 1.5-8 3-4 0.5-6.5-1-7.5-4-8-3-3 1-7 3.5-10-1.5-14-6-10-7-6.5-9-3.5-10-4-10-2-12 4-12 8.5-12 4.5-16 15-40 6-14 3-12 3-12 4-12 5.5-12 2.5-12 0-2-1-12-2.5-12 2-10 1.5-4 6-8 4.5-2 14.5-18 19-19.5 15.5-18.5 6.5-12 8-10 9.5-8 12.5-4.5 13-3.5 5-3 4-4M1705 728l-8-3.5-8-6-6-7-4.5-7.5-6.5-8-15-13-6-7.5-5.5-3.5-2.5 0-14 3-12 2-8-2-16-7.5-10-0.5-6 0.5-2-1-3-4.5-0.5-2-1.5-20 2-12 4-12 0.5-2-1-4-2.5-8-1.5-8 0.5-10 4-14 5.5-14 9.5-22.5 3.5-11.5 2-26 7-26 1-12 0.5-2 5-10 1.5-2 7.5-8 10-12 16-17 9.5-11 8.5-8.5 10-8.5 12-7.5 20-6.5M1705 594l-6-2-6-0.5-6 1-4 1.5-1.5 2-0.5 2-0.5 14 1.5 8 3 4 2 1.5 4 1.5 6 1 4 0 4-1M1705 691.5l-6-3.5-4.5-4-15.5-9.5-6-6.5-13.5-12-14-14-16.5-10.5-7-7.5-3-10-1.5-8-3-10-1.5-8 2.5-8 4.5-8-0.5-2-10.5-11-3.5-9 1.5-8 5.5-10 3-8 0-4-1.5-8 1.5-10 1.5-2.5 6-7 10-8.5 6.5-8 1-2 0.5-6-1.5-8 3-10 6.5-8 8-6 5.5-6 0.5-2-1-4 0-2 5-7 8.5-7 17.5-11.5 4-2 8-2.5M1705 455.5l-14-3-7 1.5-1 0-1-2 0.5-2 2.5-4 2-1.5 8-4 10-3M1705 566.5l-12 2-14-0.5-6 2.5-6 3.5-6 1.5-2-0.5-2-3 1.5-16 0-2-1.5-4-2-3-6-2-7.5-5-3.5-8-0.5-2 1-10 5-10 9-8 10.5-5.5 4-1 8-1 6 2 8 5 2 1 6 0 8-1"/>
</g></svg>
<div id="status" class="abs" style="left:0;top:1014px;width:1920px;height:18px;background:#f0f0f0">
<div class="abs" style="left:1px;top:1px;width:98px;height:17px;border:1px solid;border-color:#a0a0a0 #fff #fff #a0a0a0"></div>
<div class="abs" style="left:102px;top:1px;width:78px;height:17px;border:1px solid;border-color:#a0a0a0 #fff #fff #a0a0a0"></div>
<div class="abs" style="left:182px;top:1px;width:98px;height:17px;border:1px solid;border-color:#a0a0a0 #fff #fff #a0a0a0"></div>
<div class="abs" style="left:282px;top:1px;width:98px;height:17px;border:1px solid;border-color:#a0a0a0 #fff #fff #a0a0a0"></div>
<div class="abs" style="left:382px;top:1px;width:98px;height:17px;border:1px solid;border-color:#a0a0a0 #fff #fff #a0a0a0"></div>
<div class="abs" style="left:482px;top:1px;width:98px;height:17px;border:1px solid;border-color:#a0a0a0 #fff #fff #a0a0a0"></div>
<div class="abs" style="left:582px;top:1px;width:1338px;height:17px;border:1px solid;border-color:#a0a0a0 #fff #fff #a0a0a0"></div>
<span style="left:6px;letter-spacing:-0.18px">MapsID: 3838</span><span style="left:104px">png</span><span style="left:184px;letter-spacing:-0.18px">MinZoom: 8</span><span style="left:284px;letter-spacing:-0.18px">MaxZoom: 18</span><span style="left:384px">TileSize: 256</span><span style="left:484.400px;letter-spacing:-0.55px">EPSG:3857</span><span style="left:584.500px">Longitude=9.327393, Latitude=46.042736, tile=8/134/91.png</span>
</div>
</body></html>
